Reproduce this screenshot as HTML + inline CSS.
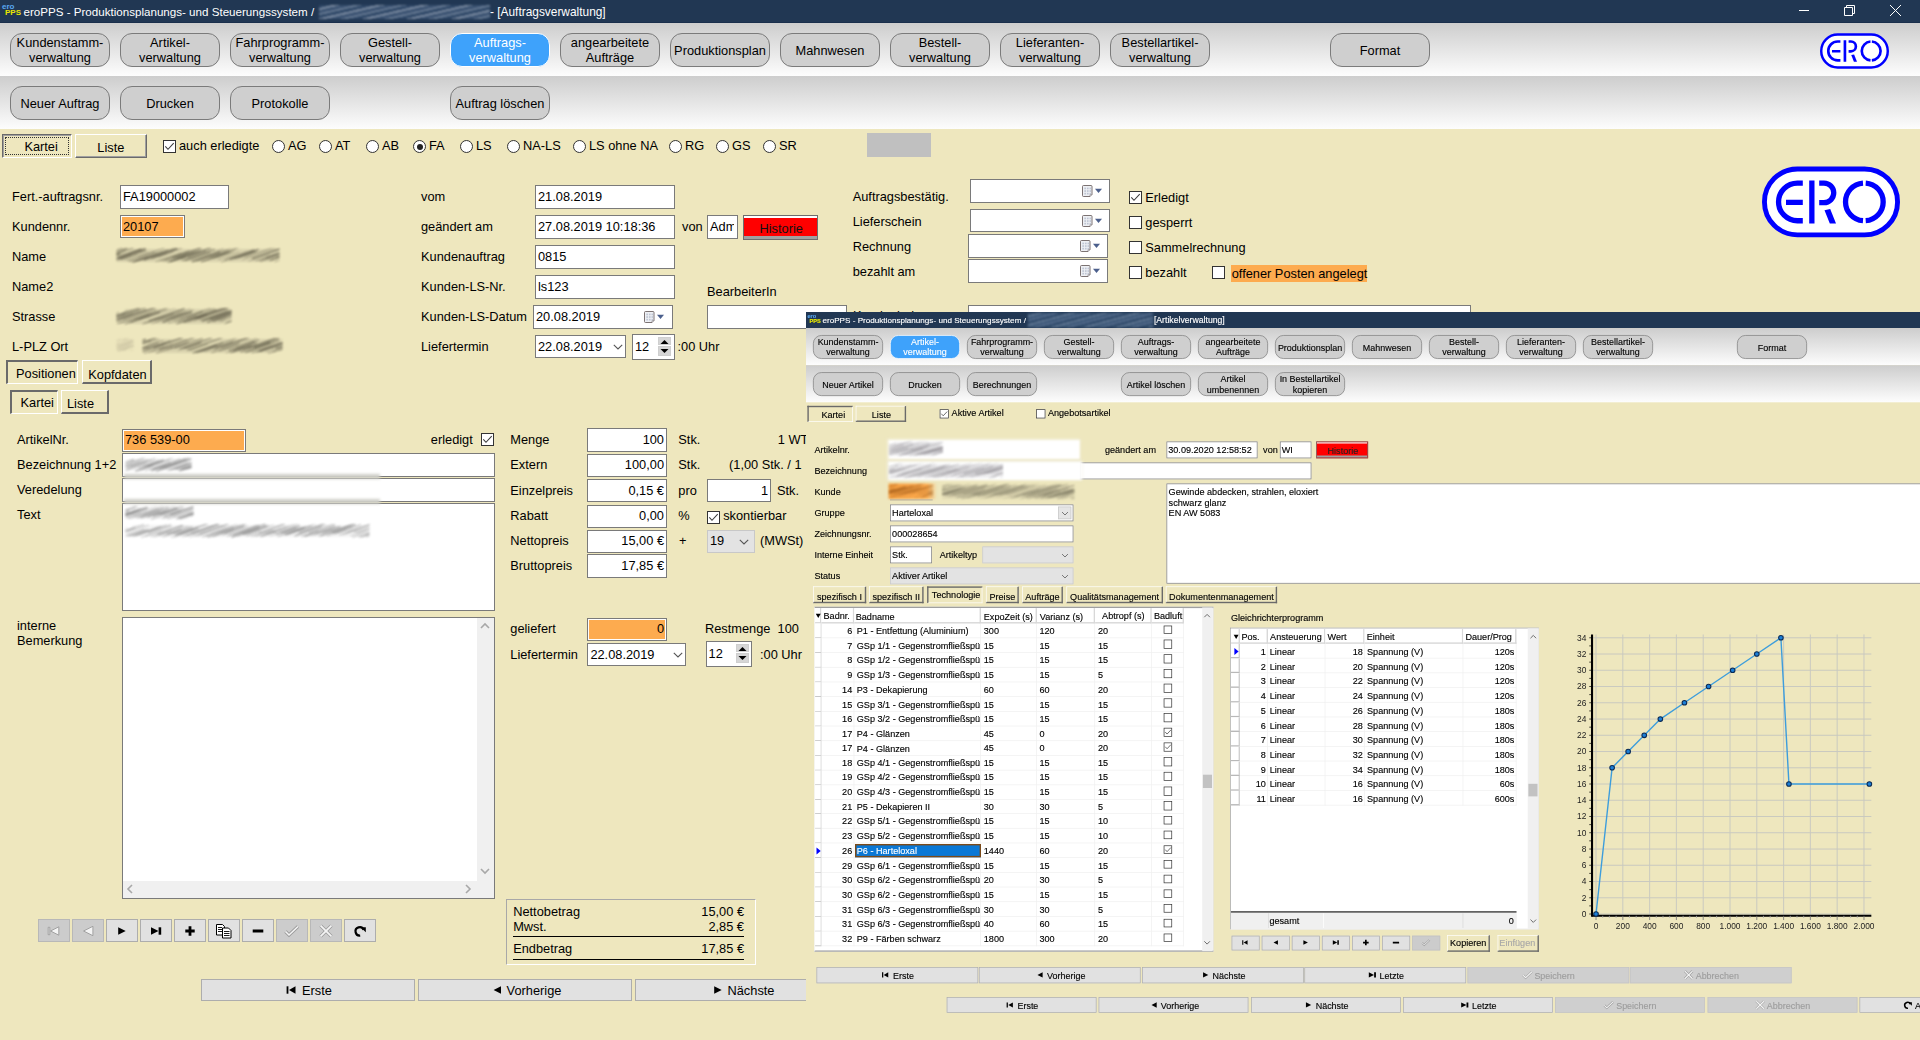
<!DOCTYPE html><html><head><meta charset="utf-8"><style>
*{box-sizing:border-box;margin:0;padding:0}
html,body{width:1920px;height:1040px;overflow:hidden}
body{position:relative;background:#EEE7BE;font-family:"Liberation Sans",sans-serif;font-size:12.8px;color:#000}
.t{position:absolute;white-space:pre}
.b{position:absolute}
.tbtn{position:absolute;border:1px solid #7b7b7b;border-radius:12px;background:#cfcfcf;display:flex;align-items:center;justify-content:center;text-align:center;line-height:15.5px;font-size:12.8px;color:#000}
.tbtn.sel{background:#3ea2fb;border-color:#fff;color:#fff}
.bar{position:absolute;left:0;width:1920px;background:linear-gradient(#cdcdcd,#fdfdfd)}
.raised{border-top:1px solid #fff;border-left:1px solid #fff;border-bottom:2px solid #6f6f6f;border-right:2px solid #6f6f6f}
.sunk{border-top:2px solid #6f6f6f;border-left:2px solid #6f6f6f;border-bottom:1px solid #fff;border-right:1px solid #fff}
.cb{position:absolute;width:13px;height:13px;border:1px solid #333;background:#fff}
.rb{position:absolute;width:13px;height:13px;border:1px solid #333;border-radius:50%;background:#fff}
</style></head><body>
<div class="b" style="left:0px;top:0px;width:1920px;height:23px;background:#213753"></div>
<div class="b" style="left:0px;top:22px;width:1920px;height:1px;background:#1a2f4c"></div>
<div class="t" style="left:2px;top:3px;font-size:8px;line-height:8px;color:#5aa8f0;font-weight:bold">ero</div>
<div class="t" style="left:5px;top:9px;font-size:8px;line-height:8px;color:#e8e800;font-weight:bold">PPS</div>
<div class="t" style="left:23.5px;top:3.98px;font-size:11.6px;line-height:16px;color:#fff;">eroPPS - Produktionsplanungs- und Steuerungssystem /</div>
<div class="b" style="left:319px;top:5px;width:171px;height:14px;background:repeating-linear-gradient(167deg,#2f4868 0 3px,#8190a5 3px 5px,#3a5272 5px 8px,#6a7d96 8px 10px);filter:blur(1.3px);opacity:.95"></div>
<div class="t" style="left:490px;top:3.88px;font-size:11.9px;line-height:16px;color:#fff;">- [Auftragsverwaltung]</div>
<div class="b" style="left:1799px;top:10px;width:10px;height:1px;background:#fff"></div>
<svg class="b" style="left:1843px;top:4px" width="13" height="13" viewBox="0 0 13 13"><path d="M1.5 3.5h8v8h-8z M3.5 3.5v-2h8v8h-2" fill="none" stroke="#fff" stroke-width="1"/></svg>
<svg class="b" style="left:1889px;top:4px" width="13" height="13" viewBox="0 0 13 13"><path d="M1 1L12 12M12 1L1 12" fill="none" stroke="#fff" stroke-width="1"/></svg>
<div class="bar" style="top:23px;height:53px"></div>
<div class="bar" style="top:76px;height:53px"></div>
<div class="tbtn" style="left:10px;top:33px;width:100px;height:34px;">Kundenstamm-<br>verwaltung</div>
<div class="tbtn" style="left:120px;top:33px;width:100px;height:34px;">Artikel-<br>verwaltung</div>
<div class="tbtn" style="left:230px;top:33px;width:100px;height:34px;">Fahrprogramm-<br>verwaltung</div>
<div class="tbtn" style="left:340px;top:33px;width:100px;height:34px;">Gestell-<br>verwaltung</div>
<div class="tbtn sel" style="left:450px;top:33px;width:100px;height:34px;">Auftrags-<br>verwaltung</div>
<div class="tbtn" style="left:560px;top:33px;width:100px;height:34px;">angearbeitete<br>Aufträge</div>
<div class="tbtn" style="left:670px;top:33px;width:100px;height:34px;padding-top:1.5px">Produktionsplan</div>
<div class="tbtn" style="left:780px;top:33px;width:100px;height:34px;padding-top:1.5px">Mahnwesen</div>
<div class="tbtn" style="left:890px;top:33px;width:100px;height:34px;">Bestell-<br>verwaltung</div>
<div class="tbtn" style="left:1000px;top:33px;width:100px;height:34px;">Lieferanten-<br>verwaltung</div>
<div class="tbtn" style="left:1110px;top:33px;width:100px;height:34px;">Bestellartikel-<br>verwaltung</div>
<div class="tbtn" style="left:1330px;top:33px;width:100px;height:34px;padding-top:1.5px">Format</div>
<div class="tbtn" style="left:10px;top:86px;width:100px;height:34px;padding-top:1.5px">Neuer Auftrag</div>
<div class="tbtn" style="left:120px;top:86px;width:100px;height:34px;padding-top:1.5px">Drucken</div>
<div class="tbtn" style="left:230px;top:86px;width:100px;height:34px;padding-top:1.5px">Protokolle</div>
<div class="tbtn" style="left:450px;top:86px;width:100px;height:34px;padding-top:1.5px">Auftrag löschen</div>
<svg class="b" style="left:1820px;top:33px" width="69" height="36" viewBox="7 7 138 71"><rect x="9.45" y="9.45" width="133.1" height="65.9" rx="32.95" fill="#fff" stroke="#0000ff" stroke-width="4.9"/>
<path d="M47.8 23.55H42.4A18.85 18.85 0 0 0 42.4 61.25H47.8M31 42.9H47.8M56.85 20.9V63.9M64.2 23.55H68.95A9.8 9.8 0 0 1 68.95 43.15H64.2" fill="none" stroke="#0000ff" stroke-width="5.3"/>
<path d="M69.5 50.7L75.2 49.5L81 63.9L74.8 63.9Z" fill="#0000ff"/>
<path d="M108 23.6A18.85 18.85 0 0 0 108 61.2M110.7 61.2A18.85 18.85 0 0 0 110.7 23.6" fill="none" stroke="#0000ff" stroke-width="5.3"/></svg>
<div class="b" style="left:2px;top:134px;width:70px;height:24px;border-top:1px solid #6a6a6a;border-left:1px solid #6a6a6a;border-bottom:1px solid #fff;border-right:1px solid #fff;box-shadow:inset 1px 1px 0 #a0a0a0"></div>
<div class="b" style="left:5px;top:137px;width:64px;height:18px;border:1px dotted #333"></div>
<div class="t" style="left:24.4px;top:139.26px;font-size:12.8px;line-height:16px;color:#000;">Kartei</div>
<div class="b" style="left:75px;top:134px;width:72px;height:24px;border-top:1px solid #fff;border-left:1px solid #fff;border-bottom:1px solid #6a6a6a;border-right:1px solid #6a6a6a;box-shadow:inset -1px -1px 0 #a0a0a0"></div>
<div class="t" style="left:97.3px;top:140.16px;font-size:12.8px;line-height:16px;color:#000;">Liste</div>
<div class="cb" style="left:163px;top:140px;width:13px;height:13px"></div>
<svg class="b" style="left:163px;top:140px" width="13" height="13" viewBox="0 0 13 13"><path d="M2.3 6.3L5 9.3L10.7 3.2" fill="none" stroke="#3a3a3a" stroke-width="1.05"/></svg>
<div class="t" style="left:179px;top:138.06px;font-size:12.8px;line-height:16px;color:#000;">auch erledigte</div>
<div class="rb" style="left:272px;top:140px"></div>
<div class="t" style="left:288px;top:138.36px;font-size:12.8px;line-height:16px;color:#000;">AG</div>
<div class="rb" style="left:319px;top:140px"></div>
<div class="t" style="left:335px;top:138.36px;font-size:12.8px;line-height:16px;color:#000;">AT</div>
<div class="rb" style="left:366px;top:140px"></div>
<div class="t" style="left:382px;top:138.36px;font-size:12.8px;line-height:16px;color:#000;">AB</div>
<div class="rb" style="left:413px;top:140px"></div>
<div class="b" style="left:416.5px;top:143.5px;width:6px;height:6px;border-radius:50%;background:#222"></div>
<div class="t" style="left:429px;top:138.36px;font-size:12.8px;line-height:16px;color:#000;">FA</div>
<div class="rb" style="left:460px;top:140px"></div>
<div class="t" style="left:476px;top:138.36px;font-size:12.8px;line-height:16px;color:#000;">LS</div>
<div class="rb" style="left:507px;top:140px"></div>
<div class="t" style="left:523px;top:138.36px;font-size:12.8px;line-height:16px;color:#000;">NA-LS</div>
<div class="rb" style="left:573px;top:140px"></div>
<div class="t" style="left:589px;top:138.36px;font-size:12.8px;line-height:16px;color:#000;">LS ohne NA</div>
<div class="rb" style="left:669px;top:140px"></div>
<div class="t" style="left:685px;top:138.36px;font-size:12.8px;line-height:16px;color:#000;">RG</div>
<div class="rb" style="left:716px;top:140px"></div>
<div class="t" style="left:732px;top:138.36px;font-size:12.8px;line-height:16px;color:#000;">GS</div>
<div class="rb" style="left:763px;top:140px"></div>
<div class="t" style="left:779px;top:138.36px;font-size:12.8px;line-height:16px;color:#000;">SR</div>
<div class="b" style="left:867px;top:133px;width:64px;height:24px;background:#c0c0c0"></div>
<svg class="b" style="left:1762px;top:166px" width="138" height="72" viewBox="7 7 138 71"><rect x="9.45" y="9.45" width="133.1" height="65.9" rx="32.95" fill="#fff" stroke="#0000ff" stroke-width="4.9"/>
<path d="M47.8 23.55H42.4A18.85 18.85 0 0 0 42.4 61.25H47.8M31 42.9H47.8M56.85 20.9V63.9M64.2 23.55H68.95A9.8 9.8 0 0 1 68.95 43.15H64.2" fill="none" stroke="#0000ff" stroke-width="5.3"/>
<path d="M69.5 50.7L75.2 49.5L81 63.9L74.8 63.9Z" fill="#0000ff"/>
<path d="M108 23.6A18.85 18.85 0 0 0 108 61.2M110.7 61.2A18.85 18.85 0 0 0 110.7 23.6" fill="none" stroke="#0000ff" stroke-width="5.3"/></svg>
<div class="t" style="left:12px;top:188.56px;font-size:12.8px;line-height:16px;color:#000;">Fert.-auftragsnr.</div>
<div class="t" style="left:12px;top:218.56px;font-size:12.8px;line-height:16px;color:#000;">Kundennr.</div>
<div class="t" style="left:12px;top:248.56px;font-size:12.8px;line-height:16px;color:#000;">Name</div>
<div class="t" style="left:12px;top:278.56px;font-size:12.8px;line-height:16px;color:#000;">Name2</div>
<div class="t" style="left:12px;top:308.56px;font-size:12.8px;line-height:16px;color:#000;">Strasse</div>
<div class="t" style="left:12px;top:338.56px;font-size:12.8px;line-height:16px;color:#000;">L-PLZ Ort</div>
<div class="b" style="left:120px;top:185px;width:109px;height:24px;background:#fff;border:1px solid #7a7a7a;"></div>
<div class="t" style="left:123px;top:188.56px;font-size:12.8px;line-height:16px;color:#000;">FA19000002</div>
<div class="b" style="left:120px;top:215px;width:65px;height:23px;background:#fdab4f;border:1px solid #7a7a7a;box-shadow:inset 0 0 0 1px #fff;"></div>
<div class="t" style="left:123px;top:218.56px;font-size:12.8px;line-height:16px;color:#000;">20107</div>
<svg class="b" style="left:116px;top:248px;opacity:0.9;filter:blur(1.0px)" width="164" height="15" viewBox="0 0 164 15"><path d="M8.4 1 L164.0 1 L155.6 14.0 L0 14.0Z" fill="rgba(175,168,140,0.35)"/><path d="M0.5 2.1 L11.7 -1.9" stroke="#4a4636" stroke-width="0.90" stroke-opacity="0.62"/><path d="M0.5 4.6 L9.7 1.3" stroke="#4a4636" stroke-width="0.78" stroke-opacity="0.63"/><path d="M0.5 7.1 L6.3 5.1" stroke="#4a4636" stroke-width="0.70" stroke-opacity="0.62"/><path d="M0.5 7.2 L4.0 6.0" stroke="#4a4636" stroke-width="1.42" stroke-opacity="0.72"/><path d="M0.5 3.8 L12.0 -0.2" stroke="#4a4636" stroke-width="1.00" stroke-opacity="0.72"/><path d="M0.5 6.6 L2.6 5.9" stroke="#4a4636" stroke-width="1.05" stroke-opacity="0.32"/><path d="M0.5 6.3 L9.1 3.3" stroke="#4a4636" stroke-width="1.07" stroke-opacity="0.32"/><path d="M0.5 5.8 L23.9 -2.4" stroke="#4a4636" stroke-width="1.21" stroke-opacity="0.51"/><path d="M0.5 11.7 L26.0 2.8" stroke="#4a4636" stroke-width="0.97" stroke-opacity="0.27"/><path d="M0.5 11.1 L30.3 0.6" stroke="#4a4636" stroke-width="1.36" stroke-opacity="0.43"/><path d="M0.5 9.7 L25.3 1.0" stroke="#4a4636" stroke-width="1.38" stroke-opacity="0.69"/><path d="M0.5 12.0 L15.7 6.7" stroke="#4a4636" stroke-width="1.34" stroke-opacity="0.33"/><path d="M2.0 10.0 L28.7 0.6" stroke="#4a4636" stroke-width="1.24" stroke-opacity="0.59"/><path d="M3.9 11.4 L29.8 2.4" stroke="#4a4636" stroke-width="1.12" stroke-opacity="0.63"/><path d="M5.9 11.7 L21.5 6.2" stroke="#4a4636" stroke-width="1.26" stroke-opacity="0.22"/><path d="M9.1 12.3 L32.5 4.1" stroke="#4a4636" stroke-width="1.10" stroke-opacity="0.29"/><path d="M12.2 13.2 L38.8 3.9" stroke="#4a4636" stroke-width="0.89" stroke-opacity="0.67"/><path d="M14.5 14.2 L41.8 4.7" stroke="#4a4636" stroke-width="0.92" stroke-opacity="0.45"/><path d="M16.8 14.3 L31.9 9.0" stroke="#4a4636" stroke-width="1.36" stroke-opacity="0.63"/><path d="M19.7 13.1 L52.1 1.8" stroke="#4a4636" stroke-width="1.15" stroke-opacity="0.49"/><path d="M21.8 9.3 L55.4 -2.5" stroke="#4a4636" stroke-width="0.86" stroke-opacity="0.51"/><path d="M24.0 11.7 L46.6 3.7" stroke="#4a4636" stroke-width="1.13" stroke-opacity="0.39"/><path d="M26.4 12.4 L51.3 3.7" stroke="#4a4636" stroke-width="0.88" stroke-opacity="0.22"/><path d="M28.0 12.2 L61.4 0.5" stroke="#4a4636" stroke-width="1.34" stroke-opacity="0.64"/><path d="M30.8 10.4 L63.9 -1.2" stroke="#4a4636" stroke-width="0.77" stroke-opacity="0.57"/><path d="M32.1 9.1 L63.3 -1.8" stroke="#4a4636" stroke-width="0.79" stroke-opacity="0.34"/><path d="M34.5 10.9 L51.0 5.1" stroke="#4a4636" stroke-width="1.12" stroke-opacity="0.29"/><path d="M36.0 10.5 L66.3 -0.1" stroke="#4a4636" stroke-width="0.96" stroke-opacity="0.45"/><path d="M38.2 9.1 L61.5 1.0" stroke="#4a4636" stroke-width="0.85" stroke-opacity="0.43"/><path d="M39.6 13.9 L65.5 4.9" stroke="#4a4636" stroke-width="1.18" stroke-opacity="0.32"/><path d="M42.4 9.1 L57.8 3.7" stroke="#4a4636" stroke-width="1.28" stroke-opacity="0.28"/><path d="M44.0 12.9 L73.5 2.5" stroke="#4a4636" stroke-width="0.88" stroke-opacity="0.50"/><path d="M47.1 13.4 L73.2 4.3" stroke="#4a4636" stroke-width="1.22" stroke-opacity="0.32"/><path d="M49.1 12.2 L71.0 4.5" stroke="#4a4636" stroke-width="0.75" stroke-opacity="0.55"/><path d="M50.9 14.3 L84.7 2.5" stroke="#4a4636" stroke-width="1.39" stroke-opacity="0.37"/><path d="M52.7 14.2 L83.7 3.3" stroke="#4a4636" stroke-width="0.90" stroke-opacity="0.43"/><path d="M53.9 13.8 L69.8 8.3" stroke="#4a4636" stroke-width="1.47" stroke-opacity="0.65"/><path d="M56.3 9.9 L89.9 -1.8" stroke="#4a4636" stroke-width="1.26" stroke-opacity="0.74"/><path d="M58.5 11.1 L80.9 3.2" stroke="#4a4636" stroke-width="1.24" stroke-opacity="0.31"/><path d="M60.6 10.1 L77.8 4.0" stroke="#4a4636" stroke-width="0.94" stroke-opacity="0.57"/><path d="M62.8 10.8 L96.4 -1.0" stroke="#4a4636" stroke-width="0.71" stroke-opacity="0.69"/><path d="M64.4 10.8 L100.5 -1.9" stroke="#4a4636" stroke-width="0.97" stroke-opacity="0.63"/><path d="M66.0 12.7 L98.9 1.2" stroke="#4a4636" stroke-width="0.98" stroke-opacity="0.71"/><path d="M69.0 12.8 L94.3 3.9" stroke="#4a4636" stroke-width="0.89" stroke-opacity="0.74"/><path d="M71.6 9.5 L90.2 2.9" stroke="#4a4636" stroke-width="0.87" stroke-opacity="0.70"/><path d="M74.3 12.3 L107.4 0.7" stroke="#4a4636" stroke-width="0.97" stroke-opacity="0.40"/><path d="M76.1 13.8 L104.1 4.0" stroke="#4a4636" stroke-width="1.41" stroke-opacity="0.72"/><path d="M77.6 12.0 L94.8 6.0" stroke="#4a4636" stroke-width="0.76" stroke-opacity="0.22"/><path d="M80.5 13.3 L113.3 1.9" stroke="#4a4636" stroke-width="1.19" stroke-opacity="0.39"/><path d="M83.3 11.1 L110.5 1.5" stroke="#4a4636" stroke-width="0.77" stroke-opacity="0.32"/><path d="M85.0 13.9 L112.1 4.4" stroke="#4a4636" stroke-width="1.07" stroke-opacity="0.71"/><path d="M86.8 13.3 L119.5 1.9" stroke="#4a4636" stroke-width="1.24" stroke-opacity="0.21"/><path d="M88.1 9.6 L122.1 -2.3" stroke="#4a4636" stroke-width="0.89" stroke-opacity="0.22"/><path d="M91.3 11.3 L108.8 5.2" stroke="#4a4636" stroke-width="0.89" stroke-opacity="0.29"/><path d="M94.0 9.6 L128.5 -2.5" stroke="#4a4636" stroke-width="1.48" stroke-opacity="0.41"/><path d="M97.0 10.6 L117.5 3.5" stroke="#4a4636" stroke-width="0.78" stroke-opacity="0.46"/><path d="M99.5 9.2 L114.8 3.9" stroke="#4a4636" stroke-width="0.94" stroke-opacity="0.74"/><path d="M101.9 11.5 L123.6 3.9" stroke="#4a4636" stroke-width="1.43" stroke-opacity="0.23"/><path d="M105.1 14.3 L122.5 8.2" stroke="#4a4636" stroke-width="1.19" stroke-opacity="0.32"/><path d="M108.2 12.0 L138.0 1.6" stroke="#4a4636" stroke-width="0.91" stroke-opacity="0.56"/><path d="M110.5 10.7 L130.8 3.6" stroke="#4a4636" stroke-width="0.92" stroke-opacity="0.24"/><path d="M113.7 11.5 L142.7 1.3" stroke="#4a4636" stroke-width="1.45" stroke-opacity="0.55"/><path d="M115.7 10.7 L137.7 3.0" stroke="#4a4636" stroke-width="1.38" stroke-opacity="0.37"/><path d="M118.6 10.7 L140.8 2.9" stroke="#4a4636" stroke-width="1.16" stroke-opacity="0.50"/><path d="M121.0 10.3 L136.5 4.9" stroke="#4a4636" stroke-width="0.76" stroke-opacity="0.33"/><path d="M123.3 9.4 L140.0 3.6" stroke="#4a4636" stroke-width="0.93" stroke-opacity="0.55"/><path d="M126.1 11.7 L159.6 -0.0" stroke="#4a4636" stroke-width="1.10" stroke-opacity="0.28"/><path d="M128.9 9.4 L163.5 -2.7" stroke="#4a4636" stroke-width="1.32" stroke-opacity="0.30"/><path d="M132.1 13.5 L153.9 5.9" stroke="#4a4636" stroke-width="1.11" stroke-opacity="0.26"/><path d="M135.1 10.6 L163.5 0.7" stroke="#4a4636" stroke-width="1.43" stroke-opacity="0.28"/><path d="M136.4 10.7 L163.5 1.2" stroke="#4a4636" stroke-width="1.43" stroke-opacity="0.64"/><path d="M139.3 13.1 L163.5 4.6" stroke="#4a4636" stroke-width="1.05" stroke-opacity="0.30"/><path d="M140.8 12.9 L163.5 5.0" stroke="#4a4636" stroke-width="0.75" stroke-opacity="0.34"/><path d="M143.9 13.4 L163.5 6.6" stroke="#4a4636" stroke-width="1.38" stroke-opacity="0.50"/><path d="M146.0 11.2 L163.5 5.1" stroke="#4a4636" stroke-width="0.72" stroke-opacity="0.34"/><path d="M148.5 11.3 L163.5 6.0" stroke="#4a4636" stroke-width="0.98" stroke-opacity="0.23"/><path d="M150.0 9.7 L163.5 5.0" stroke="#4a4636" stroke-width="1.02" stroke-opacity="0.66"/><path d="M152.0 12.4 L163.5 8.3" stroke="#4a4636" stroke-width="1.12" stroke-opacity="0.20"/><path d="M154.2 12.6 L163.5 9.3" stroke="#4a4636" stroke-width="1.29" stroke-opacity="0.58"/><path d="M155.9 11.7 L163.5 9.1" stroke="#4a4636" stroke-width="1.03" stroke-opacity="0.32"/><path d="M158.2 14.0 L163.5 12.1" stroke="#4a4636" stroke-width="1.22" stroke-opacity="0.35"/><path d="M159.5 9.4 L163.5 8.0" stroke="#4a4636" stroke-width="0.83" stroke-opacity="0.68"/></svg>
<svg class="b" style="left:116px;top:308px;opacity:0.9;filter:blur(1.0px)" width="116" height="17" viewBox="0 0 116 17"><path d="M9.5 1 L116.0 1 L106.5 16.0 L0 16.0Z" fill="rgba(175,168,140,0.35)"/><path d="M0.5 7.5 L15.7 2.2" stroke="#4a4636" stroke-width="0.77" stroke-opacity="0.23"/><path d="M0.5 7.2 L11.9 3.2" stroke="#4a4636" stroke-width="1.18" stroke-opacity="0.37"/><path d="M0.5 7.0 L1.8 6.6" stroke="#4a4636" stroke-width="1.01" stroke-opacity="0.44"/><path d="M0.5 10.6 L23.7 2.4" stroke="#4a4636" stroke-width="1.06" stroke-opacity="0.50"/><path d="M0.5 5.1 L3.0 4.2" stroke="#4a4636" stroke-width="0.95" stroke-opacity="0.46"/><path d="M0.5 11.2 L17.1 5.4" stroke="#4a4636" stroke-width="0.89" stroke-opacity="0.51"/><path d="M0.5 8.1 L8.9 5.1" stroke="#4a4636" stroke-width="1.50" stroke-opacity="0.48"/><path d="M0.5 8.1 L29.8 -2.2" stroke="#4a4636" stroke-width="1.29" stroke-opacity="0.64"/><path d="M0.5 12.8 L30.3 2.3" stroke="#4a4636" stroke-width="1.48" stroke-opacity="0.39"/><path d="M0.5 10.1 L32.6 -1.1" stroke="#4a4636" stroke-width="1.07" stroke-opacity="0.59"/><path d="M0.5 12.9 L39.0 -0.5" stroke="#4a4636" stroke-width="1.37" stroke-opacity="0.48"/><path d="M1.4 15.8 L40.3 2.2" stroke="#4a4636" stroke-width="1.15" stroke-opacity="0.45"/><path d="M4.5 14.8 L33.3 4.7" stroke="#4a4636" stroke-width="0.96" stroke-opacity="0.32"/><path d="M7.1 11.2 L46.1 -2.4" stroke="#4a4636" stroke-width="1.43" stroke-opacity="0.35"/><path d="M8.9 16.2 L43.1 4.3" stroke="#4a4636" stroke-width="1.11" stroke-opacity="0.48"/><path d="M11.4 13.9 L36.0 5.3" stroke="#4a4636" stroke-width="1.11" stroke-opacity="0.31"/><path d="M14.5 14.1 L33.3 7.5" stroke="#4a4636" stroke-width="1.28" stroke-opacity="0.65"/><path d="M17.5 11.4 L52.6 -0.9" stroke="#4a4636" stroke-width="1.22" stroke-opacity="0.23"/><path d="M19.2 11.6 L57.5 -1.8" stroke="#4a4636" stroke-width="1.12" stroke-opacity="0.26"/><path d="M22.1 11.7 L44.3 4.0" stroke="#4a4636" stroke-width="1.04" stroke-opacity="0.68"/><path d="M24.8 10.4 L50.6 1.4" stroke="#4a4636" stroke-width="1.24" stroke-opacity="0.29"/><path d="M26.1 16.2 L43.8 10.0" stroke="#4a4636" stroke-width="0.72" stroke-opacity="0.60"/><path d="M27.9 15.3 L48.7 8.0" stroke="#4a4636" stroke-width="1.25" stroke-opacity="0.30"/><path d="M29.8 10.5 L70.9 -3.9" stroke="#4a4636" stroke-width="0.73" stroke-opacity="0.28"/><path d="M31.7 14.1 L66.7 1.8" stroke="#4a4636" stroke-width="0.97" stroke-opacity="0.26"/><path d="M33.0 13.0 L68.6 0.6" stroke="#4a4636" stroke-width="1.42" stroke-opacity="0.61"/><path d="M35.7 15.6 L69.8 3.7" stroke="#4a4636" stroke-width="0.88" stroke-opacity="0.46"/><path d="M38.2 12.2 L57.7 5.4" stroke="#4a4636" stroke-width="1.40" stroke-opacity="0.45"/><path d="M39.7 13.9 L66.2 4.6" stroke="#4a4636" stroke-width="0.82" stroke-opacity="0.48"/><path d="M42.8 11.8 L74.5 0.7" stroke="#4a4636" stroke-width="0.71" stroke-opacity="0.43"/><path d="M45.1 11.1 L63.5 4.7" stroke="#4a4636" stroke-width="0.83" stroke-opacity="0.22"/><path d="M46.5 14.2 L75.8 3.9" stroke="#4a4636" stroke-width="1.45" stroke-opacity="0.74"/><path d="M49.7 11.7 L77.5 1.9" stroke="#4a4636" stroke-width="1.17" stroke-opacity="0.34"/><path d="M52.1 15.2 L86.4 3.3" stroke="#4a4636" stroke-width="1.04" stroke-opacity="0.34"/><path d="M54.4 10.2 L72.2 4.0" stroke="#4a4636" stroke-width="0.79" stroke-opacity="0.42"/><path d="M57.0 11.7 L76.5 4.9" stroke="#4a4636" stroke-width="0.89" stroke-opacity="0.30"/><path d="M58.7 13.5 L86.9 3.6" stroke="#4a4636" stroke-width="1.21" stroke-opacity="0.37"/><path d="M60.3 15.9 L100.7 1.8" stroke="#4a4636" stroke-width="1.05" stroke-opacity="0.60"/><path d="M62.5 13.9 L80.8 7.5" stroke="#4a4636" stroke-width="1.12" stroke-opacity="0.43"/><path d="M64.1 10.8 L100.6 -2.0" stroke="#4a4636" stroke-width="1.12" stroke-opacity="0.40"/><path d="M67.1 14.0 L91.1 5.6" stroke="#4a4636" stroke-width="1.00" stroke-opacity="0.74"/><path d="M68.4 14.5 L87.8 7.7" stroke="#4a4636" stroke-width="1.37" stroke-opacity="0.37"/><path d="M70.9 10.3 L98.9 0.5" stroke="#4a4636" stroke-width="1.09" stroke-opacity="0.43"/><path d="M72.5 13.9 L91.3 7.3" stroke="#4a4636" stroke-width="1.00" stroke-opacity="0.36"/><path d="M75.6 10.7 L110.9 -1.7" stroke="#4a4636" stroke-width="1.16" stroke-opacity="0.31"/><path d="M77.6 13.1 L112.9 0.8" stroke="#4a4636" stroke-width="0.80" stroke-opacity="0.42"/><path d="M79.0 10.7 L115.5 -2.1" stroke="#4a4636" stroke-width="1.47" stroke-opacity="0.55"/><path d="M81.6 10.4 L114.6 -1.2" stroke="#4a4636" stroke-width="1.28" stroke-opacity="0.63"/><path d="M83.8 12.5 L111.9 2.6" stroke="#4a4636" stroke-width="0.92" stroke-opacity="0.64"/><path d="M86.0 13.2 L115.5 2.9" stroke="#4a4636" stroke-width="1.45" stroke-opacity="0.64"/><path d="M88.9 12.1 L111.5 4.2" stroke="#4a4636" stroke-width="0.91" stroke-opacity="0.47"/><path d="M91.0 14.5 L115.5 5.9" stroke="#4a4636" stroke-width="1.35" stroke-opacity="0.52"/><path d="M92.4 12.4 L115.5 4.3" stroke="#4a4636" stroke-width="1.03" stroke-opacity="0.28"/><path d="M93.7 10.7 L115.5 3.1" stroke="#4a4636" stroke-width="1.22" stroke-opacity="0.74"/><path d="M95.2 12.1 L115.5 4.9" stroke="#4a4636" stroke-width="1.24" stroke-opacity="0.57"/><path d="M97.2 13.5 L115.5 7.1" stroke="#4a4636" stroke-width="1.46" stroke-opacity="0.50"/><path d="M99.9 10.8 L115.5 5.4" stroke="#4a4636" stroke-width="0.91" stroke-opacity="0.59"/><path d="M102.9 13.1 L115.5 8.7" stroke="#4a4636" stroke-width="1.50" stroke-opacity="0.42"/><path d="M105.7 13.8 L115.5 10.4" stroke="#4a4636" stroke-width="0.72" stroke-opacity="0.44"/><path d="M108.1 15.8 L115.5 13.2" stroke="#4a4636" stroke-width="1.09" stroke-opacity="0.48"/><path d="M110.1 14.7 L115.5 12.8" stroke="#4a4636" stroke-width="1.08" stroke-opacity="0.59"/></svg>
<svg class="b" style="left:116px;top:338px;opacity:0.6;filter:blur(1.0px)" width="18" height="14" viewBox="0 0 18 14"><path d="M7.8 1 L18.0 1 L10.2 13.0 L0 13.0Z" fill="rgba(200,192,160,0.6)"/><path d="M0.5 2.4 L4.9 0.9" stroke="#b5ad90" stroke-width="1.18" stroke-opacity="0.40"/><path d="M0.5 3.9 L17.5 -2.1" stroke="#b5ad90" stroke-width="1.37" stroke-opacity="0.46"/><path d="M0.5 6.7 L3.3 5.7" stroke="#b5ad90" stroke-width="1.39" stroke-opacity="0.55"/><path d="M0.5 8.0 L16.0 2.6" stroke="#b5ad90" stroke-width="1.31" stroke-opacity="0.24"/><path d="M0.5 6.6 L5.6 4.8" stroke="#b5ad90" stroke-width="1.08" stroke-opacity="0.68"/><path d="M0.5 10.5 L17.5 4.5" stroke="#b5ad90" stroke-width="1.02" stroke-opacity="0.71"/><path d="M0.5 9.2 L17.5 3.3" stroke="#b5ad90" stroke-width="0.78" stroke-opacity="0.68"/><path d="M0.5 8.6 L17.5 2.6" stroke="#b5ad90" stroke-width="1.20" stroke-opacity="0.44"/><path d="M0.5 10.7 L17.5 4.7" stroke="#b5ad90" stroke-width="1.17" stroke-opacity="0.39"/><path d="M2.0 13.0 L17.5 7.6" stroke="#b5ad90" stroke-width="1.39" stroke-opacity="0.71"/><path d="M5.2 11.8 L17.5 7.5" stroke="#b5ad90" stroke-width="1.47" stroke-opacity="0.67"/><path d="M8.2 11.3 L17.5 8.1" stroke="#b5ad90" stroke-width="1.37" stroke-opacity="0.32"/><path d="M10.6 9.9 L17.5 7.4" stroke="#b5ad90" stroke-width="1.49" stroke-opacity="0.67"/><path d="M11.9 12.5 L17.5 10.5" stroke="#b5ad90" stroke-width="0.94" stroke-opacity="0.28"/><path d="M14.7 12.9 L17.5 11.9" stroke="#b5ad90" stroke-width="0.74" stroke-opacity="0.54"/></svg>
<svg class="b" style="left:142px;top:338px;opacity:0.9;filter:blur(1.0px)" width="141" height="16" viewBox="0 0 141 16"><path d="M9.0 1 L141.0 1 L132.0 15.0 L0 15.0Z" fill="rgba(175,168,140,0.35)"/><path d="M0.5 2.3 L3.8 1.2" stroke="#4a4636" stroke-width="1.34" stroke-opacity="0.70"/><path d="M0.5 4.2 L9.7 1.0" stroke="#4a4636" stroke-width="0.84" stroke-opacity="0.35"/><path d="M0.5 4.7 L20.0 -2.2" stroke="#4a4636" stroke-width="1.35" stroke-opacity="0.66"/><path d="M0.5 5.5 L8.7 2.7" stroke="#4a4636" stroke-width="1.29" stroke-opacity="0.54"/><path d="M0.5 10.6 L6.5 8.5" stroke="#4a4636" stroke-width="1.24" stroke-opacity="0.53"/><path d="M0.5 7.2 L17.5 1.3" stroke="#4a4636" stroke-width="1.45" stroke-opacity="0.25"/><path d="M0.5 10.4 L16.5 4.8" stroke="#4a4636" stroke-width="1.16" stroke-opacity="0.70"/><path d="M0.5 13.2 L24.2 4.9" stroke="#4a4636" stroke-width="1.18" stroke-opacity="0.43"/><path d="M0.5 9.9 L21.6 2.5" stroke="#4a4636" stroke-width="0.73" stroke-opacity="0.65"/><path d="M0.5 13.1 L22.4 5.5" stroke="#4a4636" stroke-width="1.08" stroke-opacity="0.49"/><path d="M1.9 15.5 L22.3 8.3" stroke="#4a4636" stroke-width="0.86" stroke-opacity="0.43"/><path d="M4.3 11.2 L28.5 2.8" stroke="#4a4636" stroke-width="0.96" stroke-opacity="0.61"/><path d="M6.6 14.9 L24.9 8.5" stroke="#4a4636" stroke-width="0.88" stroke-opacity="0.23"/><path d="M9.4 13.2 L30.8 5.7" stroke="#4a4636" stroke-width="0.84" stroke-opacity="0.38"/><path d="M11.5 9.9 L43.4 -1.3" stroke="#4a4636" stroke-width="1.46" stroke-opacity="0.69"/><path d="M14.2 15.3 L30.6 9.5" stroke="#4a4636" stroke-width="1.47" stroke-opacity="0.36"/><path d="M16.9 12.0 L54.5 -1.1" stroke="#4a4636" stroke-width="1.35" stroke-opacity="0.54"/><path d="M18.7 10.7 L44.8 1.6" stroke="#4a4636" stroke-width="1.01" stroke-opacity="0.28"/><path d="M21.8 11.6 L38.0 5.9" stroke="#4a4636" stroke-width="0.84" stroke-opacity="0.22"/><path d="M24.6 11.7 L47.2 3.8" stroke="#4a4636" stroke-width="1.49" stroke-opacity="0.25"/><path d="M26.6 10.8 L44.0 4.8" stroke="#4a4636" stroke-width="0.83" stroke-opacity="0.23"/><path d="M29.2 10.5 L46.1 4.6" stroke="#4a4636" stroke-width="0.90" stroke-opacity="0.47"/><path d="M32.4 10.3 L60.5 0.5" stroke="#4a4636" stroke-width="1.03" stroke-opacity="0.63"/><path d="M35.6 12.4 L57.1 4.9" stroke="#4a4636" stroke-width="0.73" stroke-opacity="0.43"/><path d="M37.6 11.1 L73.9 -1.6" stroke="#4a4636" stroke-width="1.10" stroke-opacity="0.66"/><path d="M38.9 11.1 L60.4 3.6" stroke="#4a4636" stroke-width="0.89" stroke-opacity="0.31"/><path d="M41.8 10.4 L59.0 4.4" stroke="#4a4636" stroke-width="1.15" stroke-opacity="0.71"/><path d="M45.0 12.0 L81.6 -0.8" stroke="#4a4636" stroke-width="1.33" stroke-opacity="0.56"/><path d="M47.7 12.5 L65.8 6.2" stroke="#4a4636" stroke-width="1.40" stroke-opacity="0.32"/><path d="M50.7 15.1 L74.4 6.8" stroke="#4a4636" stroke-width="1.34" stroke-opacity="0.56"/><path d="M53.2 14.4 L81.2 4.6" stroke="#4a4636" stroke-width="1.25" stroke-opacity="0.56"/><path d="M54.9 15.0 L92.7 1.8" stroke="#4a4636" stroke-width="1.48" stroke-opacity="0.24"/><path d="M58.0 13.5 L75.0 7.6" stroke="#4a4636" stroke-width="0.80" stroke-opacity="0.69"/><path d="M61.2 13.5 L78.5 7.5" stroke="#4a4636" stroke-width="1.21" stroke-opacity="0.29"/><path d="M63.5 14.0 L100.7 1.0" stroke="#4a4636" stroke-width="0.70" stroke-opacity="0.32"/><path d="M66.5 9.7 L102.6 -2.9" stroke="#4a4636" stroke-width="1.35" stroke-opacity="0.26"/><path d="M69.3 14.8 L97.9 4.8" stroke="#4a4636" stroke-width="0.86" stroke-opacity="0.68"/><path d="M71.8 11.6 L108.2 -1.2" stroke="#4a4636" stroke-width="1.08" stroke-opacity="0.63"/><path d="M74.1 9.8 L90.9 3.9" stroke="#4a4636" stroke-width="1.09" stroke-opacity="0.53"/><path d="M77.0 13.2 L96.2 6.5" stroke="#4a4636" stroke-width="1.31" stroke-opacity="0.40"/><path d="M79.3 9.7 L114.4 -2.6" stroke="#4a4636" stroke-width="0.77" stroke-opacity="0.66"/><path d="M81.6 11.8 L115.6 -0.1" stroke="#4a4636" stroke-width="0.89" stroke-opacity="0.37"/><path d="M83.7 15.3 L101.9 8.9" stroke="#4a4636" stroke-width="1.20" stroke-opacity="0.26"/><path d="M86.7 12.6 L112.6 3.6" stroke="#4a4636" stroke-width="1.32" stroke-opacity="0.67"/><path d="M88.0 14.8 L108.5 7.6" stroke="#4a4636" stroke-width="1.37" stroke-opacity="0.37"/><path d="M90.1 14.3 L109.9 7.4" stroke="#4a4636" stroke-width="0.84" stroke-opacity="0.68"/><path d="M91.6 12.5 L115.3 4.2" stroke="#4a4636" stroke-width="1.42" stroke-opacity="0.50"/><path d="M94.2 9.6 L117.3 1.5" stroke="#4a4636" stroke-width="1.09" stroke-opacity="0.50"/><path d="M96.8 12.5 L114.6 6.3" stroke="#4a4636" stroke-width="1.38" stroke-opacity="0.33"/><path d="M98.7 14.1 L137.3 0.6" stroke="#4a4636" stroke-width="1.24" stroke-opacity="0.54"/><path d="M101.2 11.4 L138.0 -1.5" stroke="#4a4636" stroke-width="1.43" stroke-opacity="0.46"/><path d="M103.0 14.7 L137.0 2.8" stroke="#4a4636" stroke-width="1.05" stroke-opacity="0.54"/><path d="M104.5 14.1 L128.7 5.7" stroke="#4a4636" stroke-width="0.81" stroke-opacity="0.56"/><path d="M105.8 10.4 L140.3 -1.6" stroke="#4a4636" stroke-width="1.42" stroke-opacity="0.30"/><path d="M107.8 13.0 L131.8 4.6" stroke="#4a4636" stroke-width="0.77" stroke-opacity="0.54"/><path d="M109.8 15.1 L129.9 8.1" stroke="#4a4636" stroke-width="0.96" stroke-opacity="0.56"/><path d="M111.6 9.7 L128.0 4.0" stroke="#4a4636" stroke-width="1.36" stroke-opacity="0.72"/><path d="M114.4 14.4 L140.5 5.2" stroke="#4a4636" stroke-width="1.17" stroke-opacity="0.29"/><path d="M116.6 13.0 L140.5 4.6" stroke="#4a4636" stroke-width="1.47" stroke-opacity="0.62"/><path d="M118.0 13.4 L140.5 5.6" stroke="#4a4636" stroke-width="1.19" stroke-opacity="0.61"/><path d="M120.9 11.4 L140.5 4.5" stroke="#4a4636" stroke-width="1.18" stroke-opacity="0.42"/><path d="M123.9 13.8 L140.5 7.9" stroke="#4a4636" stroke-width="0.96" stroke-opacity="0.33"/><path d="M126.3 15.5 L140.5 10.5" stroke="#4a4636" stroke-width="1.02" stroke-opacity="0.42"/><path d="M129.1 11.3 L140.5 7.3" stroke="#4a4636" stroke-width="0.85" stroke-opacity="0.21"/><path d="M131.4 13.7 L140.5 10.5" stroke="#4a4636" stroke-width="1.46" stroke-opacity="0.40"/><path d="M133.9 10.5 L140.5 8.2" stroke="#4a4636" stroke-width="1.49" stroke-opacity="0.74"/><path d="M136.9 13.2 L140.5 11.9" stroke="#4a4636" stroke-width="0.91" stroke-opacity="0.25"/></svg>
<div class="t" style="left:421px;top:188.56px;font-size:12.8px;line-height:16px;color:#000;">vom</div>
<div class="t" style="left:421px;top:218.56px;font-size:12.8px;line-height:16px;color:#000;">geändert am</div>
<div class="t" style="left:421px;top:248.56px;font-size:12.8px;line-height:16px;color:#000;">Kundenauftrag</div>
<div class="t" style="left:421px;top:278.56px;font-size:12.8px;line-height:16px;color:#000;">Kunden-LS-Nr.</div>
<div class="t" style="left:421px;top:308.56px;font-size:12.8px;line-height:16px;color:#000;">Kunden-LS-Datum</div>
<div class="t" style="left:421px;top:338.56px;font-size:12.8px;line-height:16px;color:#000;">Liefertermin</div>
<div class="b" style="left:535px;top:185px;width:140px;height:24px;background:#fff;border:1px solid #7a7a7a;"></div>
<div class="t" style="left:538px;top:188.56px;font-size:12.8px;line-height:16px;color:#000;">21.08.2019</div>
<div class="b" style="left:535px;top:215px;width:140px;height:24px;background:#fff;border:1px solid #7a7a7a;"></div>
<div class="t" style="left:538px;top:218.56px;font-size:12.8px;line-height:16px;color:#000;">27.08.2019 10:18:36</div>
<div class="t" style="left:682px;top:218.56px;font-size:12.8px;line-height:16px;color:#000;">von</div>
<div class="b" style="left:707px;top:215px;width:31px;height:24px;background:#fff;border:1px solid #7a7a7a;"></div>
<div class="b" style="left:708px;top:216px;width:26px;height:22px;overflow:hidden"><div class="t" style="left:2px;top:2.5px;font-size:12.8px;line-height:16px">Adm</div></div>
<div class="b" style="left:743px;top:215px;width:75px;height:25px;background:#ff0000;border:1px solid #6d6d6d;box-shadow:inset 0 2px 0 #fff,inset 0 -3px 0 #a0a0a0"></div>
<div class="t" style="left:759.5px;top:220.56px;font-size:12.8px;line-height:16px;color:#111;">Historie</div>
<div class="b" style="left:535px;top:245px;width:140px;height:24px;background:#fff;border:1px solid #7a7a7a;"></div>
<div class="t" style="left:538px;top:248.56px;font-size:12.8px;line-height:16px;color:#000;">0815</div>
<div class="b" style="left:535px;top:275px;width:140px;height:24px;background:#fff;border:1px solid #7a7a7a;"></div>
<div class="t" style="left:538px;top:278.56px;font-size:12.8px;line-height:16px;color:#000;">ls123</div>
<div class="b" style="left:533px;top:305px;width:140px;height:24px;background:#fff;border:1px solid #7a7a7a;"></div>
<div class="t" style="left:536px;top:308.56px;font-size:12.8px;line-height:16px;color:#000;">20.08.2019</div>
<svg class="b" style="left:644px;top:311px" width="22" height="14" viewBox="0 0 22 14"><path d="M1.5 0.5h7.5a1 1 0 0 1 1 1v8l-2 2h-6.5a1 1 0 0 1-1-1v-9a1 1 0 0 1 1-1z" fill="#eef0f4" stroke="#6e6363" stroke-width="0.9"/><path d="M8 11.5v-2h2" fill="#d0d3da" stroke="#8a8080" stroke-width="0.7"/><rect x="2.3" y="2.6" width="1.7" height="1.7" fill="#bfc6d4"/><rect x="2.3" y="5.2" width="1.7" height="1.7" fill="#bfc6d4"/><rect x="2.3" y="7.8" width="1.7" height="1.7" fill="#bfc6d4"/><rect x="4.9" y="2.6" width="1.7" height="1.7" fill="#bfc6d4"/><rect x="4.9" y="5.2" width="1.7" height="1.7" fill="#bfc6d4"/><rect x="4.9" y="7.8" width="1.7" height="1.7" fill="#bfc6d4"/><rect x="7.5" y="2.6" width="1.7" height="1.7" fill="#bfc6d4"/><rect x="7.5" y="5.2" width="1.7" height="1.7" fill="#bfc6d4"/><rect x="7.5" y="7.8" width="1.7" height="1.7" fill="#bfc6d4"/><path d="M13 3.8h7l-3.5 4.2z" fill="#4b5f8c"/></svg>
<div class="b" style="left:535px;top:335px;width:91px;height:23px;background:#fff;border:1px solid #7a7a7a;"></div>
<div class="t" style="left:538px;top:338.56px;font-size:12.8px;line-height:16px;color:#000;">22.08.2019</div>
<svg class="b" style="left:613px;top:344px" width="10" height="6" viewBox="0 0 10 6"><path d="M0.8 0.8L5 5L9.2 0.8" fill="none" stroke="#555" stroke-width="1.1"/></svg>
<div class="b" style="left:632px;top:334px;width:43px;height:26px;background:#fff;border:1px solid #7a7a7a;"></div>
<div class="t" style="left:635px;top:339.16px;font-size:12.8px;line-height:16px;color:#000;">12</div>
<div class="b" style="left:658px;top:337px;width:13px;height:7.5px;background:#d6d6d6;border:1px solid #cfcfcf"></div>
<div class="b" style="left:658px;top:346px;width:13px;height:10px;background:#d6d6d6;border:1px solid #cfcfcf"></div>
<svg class="b" style="left:658px;top:337px" width="13" height="19" viewBox="0 0 13 19"><path d="M2.5 7L6.5 3L10.5 7Z" fill="#000"/><path d="M2.5 12L6.5 16L10.5 12Z" fill="#000"/></svg>
<div class="t" style="left:677.5px;top:338.56px;font-size:12.8px;line-height:16px;color:#000;">:00 Uhr</div>
<div class="t" style="left:707px;top:283.76px;font-size:12.8px;line-height:16px;color:#000;">BearbeiterIn</div>
<div class="b" style="left:707px;top:305px;width:140px;height:24px;background:#fff;border:1px solid #7a7a7a;"></div>
<div class="t" style="left:852.7px;top:189.06px;font-size:12.8px;line-height:16px;color:#000;">Auftragsbestätig.</div>
<div class="t" style="left:852.7px;top:214.06px;font-size:12.8px;line-height:16px;color:#000;">Lieferschein</div>
<div class="t" style="left:852.7px;top:239.06px;font-size:12.8px;line-height:16px;color:#000;">Rechnung</div>
<div class="t" style="left:852.7px;top:264.06px;font-size:12.8px;line-height:16px;color:#000;">bezahlt am</div>
<div class="b" style="left:970px;top:179px;width:140px;height:24px;background:#fff;border:1px solid #7a7a7a;"></div>
<svg class="b" style="left:1081.5px;top:185px" width="22" height="14" viewBox="0 0 22 14"><path d="M1.5 0.5h7.5a1 1 0 0 1 1 1v8l-2 2h-6.5a1 1 0 0 1-1-1v-9a1 1 0 0 1 1-1z" fill="#eef0f4" stroke="#6e6363" stroke-width="0.9"/><path d="M8 11.5v-2h2" fill="#d0d3da" stroke="#8a8080" stroke-width="0.7"/><rect x="2.3" y="2.6" width="1.7" height="1.7" fill="#bfc6d4"/><rect x="2.3" y="5.2" width="1.7" height="1.7" fill="#bfc6d4"/><rect x="2.3" y="7.8" width="1.7" height="1.7" fill="#bfc6d4"/><rect x="4.9" y="2.6" width="1.7" height="1.7" fill="#bfc6d4"/><rect x="4.9" y="5.2" width="1.7" height="1.7" fill="#bfc6d4"/><rect x="4.9" y="7.8" width="1.7" height="1.7" fill="#bfc6d4"/><rect x="7.5" y="2.6" width="1.7" height="1.7" fill="#bfc6d4"/><rect x="7.5" y="5.2" width="1.7" height="1.7" fill="#bfc6d4"/><rect x="7.5" y="7.8" width="1.7" height="1.7" fill="#bfc6d4"/><path d="M13 3.8h7l-3.5 4.2z" fill="#4b5f8c"/></svg>
<div class="b" style="left:970px;top:209px;width:140px;height:23px;background:#fff;border:1px solid #7a7a7a;"></div>
<svg class="b" style="left:1081.5px;top:215px" width="22" height="14" viewBox="0 0 22 14"><path d="M1.5 0.5h7.5a1 1 0 0 1 1 1v8l-2 2h-6.5a1 1 0 0 1-1-1v-9a1 1 0 0 1 1-1z" fill="#eef0f4" stroke="#6e6363" stroke-width="0.9"/><path d="M8 11.5v-2h2" fill="#d0d3da" stroke="#8a8080" stroke-width="0.7"/><rect x="2.3" y="2.6" width="1.7" height="1.7" fill="#bfc6d4"/><rect x="2.3" y="5.2" width="1.7" height="1.7" fill="#bfc6d4"/><rect x="2.3" y="7.8" width="1.7" height="1.7" fill="#bfc6d4"/><rect x="4.9" y="2.6" width="1.7" height="1.7" fill="#bfc6d4"/><rect x="4.9" y="5.2" width="1.7" height="1.7" fill="#bfc6d4"/><rect x="4.9" y="7.8" width="1.7" height="1.7" fill="#bfc6d4"/><rect x="7.5" y="2.6" width="1.7" height="1.7" fill="#bfc6d4"/><rect x="7.5" y="5.2" width="1.7" height="1.7" fill="#bfc6d4"/><rect x="7.5" y="7.8" width="1.7" height="1.7" fill="#bfc6d4"/><path d="M13 3.8h7l-3.5 4.2z" fill="#4b5f8c"/></svg>
<div class="b" style="left:968px;top:234px;width:140px;height:24px;background:#fff;border:1px solid #7a7a7a;"></div>
<svg class="b" style="left:1079.5px;top:240px" width="22" height="14" viewBox="0 0 22 14"><path d="M1.5 0.5h7.5a1 1 0 0 1 1 1v8l-2 2h-6.5a1 1 0 0 1-1-1v-9a1 1 0 0 1 1-1z" fill="#eef0f4" stroke="#6e6363" stroke-width="0.9"/><path d="M8 11.5v-2h2" fill="#d0d3da" stroke="#8a8080" stroke-width="0.7"/><rect x="2.3" y="2.6" width="1.7" height="1.7" fill="#bfc6d4"/><rect x="2.3" y="5.2" width="1.7" height="1.7" fill="#bfc6d4"/><rect x="2.3" y="7.8" width="1.7" height="1.7" fill="#bfc6d4"/><rect x="4.9" y="2.6" width="1.7" height="1.7" fill="#bfc6d4"/><rect x="4.9" y="5.2" width="1.7" height="1.7" fill="#bfc6d4"/><rect x="4.9" y="7.8" width="1.7" height="1.7" fill="#bfc6d4"/><rect x="7.5" y="2.6" width="1.7" height="1.7" fill="#bfc6d4"/><rect x="7.5" y="5.2" width="1.7" height="1.7" fill="#bfc6d4"/><rect x="7.5" y="7.8" width="1.7" height="1.7" fill="#bfc6d4"/><path d="M13 3.8h7l-3.5 4.2z" fill="#4b5f8c"/></svg>
<div class="b" style="left:968px;top:259px;width:140px;height:24px;background:#fff;border:1px solid #7a7a7a;"></div>
<svg class="b" style="left:1079.5px;top:265px" width="22" height="14" viewBox="0 0 22 14"><path d="M1.5 0.5h7.5a1 1 0 0 1 1 1v8l-2 2h-6.5a1 1 0 0 1-1-1v-9a1 1 0 0 1 1-1z" fill="#eef0f4" stroke="#6e6363" stroke-width="0.9"/><path d="M8 11.5v-2h2" fill="#d0d3da" stroke="#8a8080" stroke-width="0.7"/><rect x="2.3" y="2.6" width="1.7" height="1.7" fill="#bfc6d4"/><rect x="2.3" y="5.2" width="1.7" height="1.7" fill="#bfc6d4"/><rect x="2.3" y="7.8" width="1.7" height="1.7" fill="#bfc6d4"/><rect x="4.9" y="2.6" width="1.7" height="1.7" fill="#bfc6d4"/><rect x="4.9" y="5.2" width="1.7" height="1.7" fill="#bfc6d4"/><rect x="4.9" y="7.8" width="1.7" height="1.7" fill="#bfc6d4"/><rect x="7.5" y="2.6" width="1.7" height="1.7" fill="#bfc6d4"/><rect x="7.5" y="5.2" width="1.7" height="1.7" fill="#bfc6d4"/><rect x="7.5" y="7.8" width="1.7" height="1.7" fill="#bfc6d4"/><path d="M13 3.8h7l-3.5 4.2z" fill="#4b5f8c"/></svg>
<div class="cb" style="left:1129px;top:191px;width:13px;height:13px"></div>
<svg class="b" style="left:1129px;top:191px" width="13" height="13" viewBox="0 0 13 13"><path d="M2.3 6.3L5 9.3L10.7 3.2" fill="none" stroke="#3a3a3a" stroke-width="1.05"/></svg>
<div class="t" style="left:1145.3px;top:190.06px;font-size:12.8px;line-height:16px;color:#000;">Erledigt</div>
<div class="cb" style="left:1129px;top:216px;width:13px;height:13px"></div>
<div class="t" style="left:1145.3px;top:215.06px;font-size:12.8px;line-height:16px;color:#000;">gesperrt</div>
<div class="cb" style="left:1129px;top:241px;width:13px;height:13px"></div>
<div class="t" style="left:1145.3px;top:240.06px;font-size:12.8px;line-height:16px;color:#000;">Sammelrechnung</div>
<div class="cb" style="left:1129px;top:266px;width:13px;height:13px"></div>
<div class="t" style="left:1145.3px;top:265.06px;font-size:12.8px;line-height:16px;color:#000;">bezahlt</div>
<div class="cb" style="left:1212px;top:266px;width:13px;height:13px"></div>
<div class="b" style="left:1230.7px;top:265px;width:136.0px;height:17px;background:#fdab4f"></div>
<div class="t" style="left:1231.7px;top:265.86px;font-size:12.8px;line-height:16px;color:#000;">offener Posten angelegt</div>
<div class="b" style="left:968px;top:305px;width:503px;height:25px;background:#fff;border:1px solid #7a7a7a;"></div>
<div class="t" style="left:853px;top:307.86px;font-size:12.8px;line-height:16px;color:#000;">Kundenbelegnr.</div>
<div class="b" style="left:6px;top:360px;width:72px;height:24px;border-top:2px solid #6a6a6a;border-left:2px solid #6a6a6a;border-bottom:1px solid #fff;border-right:1px solid #fff"></div>
<div class="t" style="left:16px;top:365.56px;font-size:12.8px;line-height:16px;color:#000;">Positionen</div>
<div class="b" style="left:82px;top:360px;width:70px;height:24px;border-top:1px solid #fff;border-left:1px solid #fff;border-bottom:2px solid #6a6a6a;border-right:2px solid #6a6a6a"></div>
<div class="t" style="left:88.3px;top:366.56px;font-size:12.8px;line-height:16px;color:#000;">Kopfdaten</div>
<div class="b" style="left:10px;top:390px;width:48px;height:24px;border-top:2px solid #6a6a6a;border-left:2px solid #6a6a6a;border-bottom:1px solid #fff;border-right:1px solid #fff"></div>
<div class="t" style="left:20.5px;top:395.06px;font-size:12.8px;line-height:16px;color:#000;">Kartei</div>
<div class="b" style="left:61px;top:390px;width:48px;height:24px;border-top:1px solid #fff;border-left:1px solid #fff;border-bottom:2px solid #6a6a6a;border-right:2px solid #6a6a6a"></div>
<div class="t" style="left:67px;top:395.86px;font-size:12.8px;line-height:16px;color:#000;">Liste</div>
<div class="t" style="left:17px;top:431.56px;font-size:12.8px;line-height:16px;color:#000;">ArtikelNr.</div>
<div class="t" style="left:17px;top:456.56px;font-size:12.8px;line-height:16px;color:#000;">Bezeichnung 1+2</div>
<div class="t" style="left:17px;top:482.06px;font-size:12.8px;line-height:16px;color:#000;">Veredelung</div>
<div class="t" style="left:17px;top:506.56px;font-size:12.8px;line-height:16px;color:#000;">Text</div>
<div class="t" style="left:17px;top:617.56px;font-size:12.8px;line-height:16px;color:#000;">interne</div>
<div class="t" style="left:17px;top:633.36px;font-size:12.8px;line-height:16px;color:#000;">Bemerkung</div>
<div class="b" style="left:122px;top:428.6px;width:124px;height:23.399999999999977px;background:#fdab4f;border:1px solid #7a7a7a;box-shadow:inset 0 0 0 1px #fff;"></div>
<div class="t" style="left:125px;top:431.56px;font-size:12.8px;line-height:16px;color:#000;">736 539-00</div>
<div class="t" style="left:430.8px;top:431.56px;font-size:12.8px;line-height:16px;color:#000;">erledigt</div>
<div class="cb" style="left:481px;top:432.6px;width:13px;height:13px"></div>
<svg class="b" style="left:481px;top:432.6px" width="13" height="13" viewBox="0 0 13 13"><path d="M2.3 6.3L5 9.3L10.7 3.2" fill="none" stroke="#3a3a3a" stroke-width="1.05"/></svg>
<div class="b" style="left:122px;top:453px;width:373px;height:24px;background:#fff;border:1px solid #7a7a7a;"></div>
<div class="b" style="left:122px;top:478px;width:373px;height:24px;background:#fff;border:1px solid #7a7a7a;"></div>
<div class="b" style="left:122px;top:503px;width:373px;height:108px;background:#fff;border:1px solid #7a7a7a;"></div>
<div class="b" style="left:122px;top:617px;width:373px;height:282px;background:#fff;border:1px solid #7a7a7a;"></div>
<div class="b" style="left:477px;top:618px;width:17px;height:280px;background:#f0f0f0"></div>
<div class="b" style="left:123px;top:881px;width:354px;height:17px;background:#f0f0f0"></div>
<svg class="b" style="left:479px;top:622px" width="12" height="8" viewBox="0 0 12 8"><path d="M2 6L6 2L10 6" fill="none" stroke="#a8a8a8" stroke-width="1.6"/></svg>
<svg class="b" style="left:479px;top:867px" width="12" height="8" viewBox="0 0 12 8"><path d="M2 2L6 6L10 2" fill="none" stroke="#a8a8a8" stroke-width="1.6"/></svg>
<svg class="b" style="left:126px;top:883px" width="8" height="12" viewBox="0 0 8 12"><path d="M6 2L2 6L6 10" fill="none" stroke="#a8a8a8" stroke-width="1.6"/></svg>
<svg class="b" style="left:464px;top:883px" width="8" height="12" viewBox="0 0 8 12"><path d="M2 2L6 6L2 10" fill="none" stroke="#a8a8a8" stroke-width="1.6"/></svg>
<div class="b" style="left:124px;top:474px;width:256px;height:5px;background:#cfcfc8;filter:blur(1.5px)"></div>
<div class="b" style="left:124px;top:499px;width:256px;height:5px;background:#cfcfc8;filter:blur(1.5px)"></div>
<svg class="b" style="left:125px;top:458px;opacity:0.7;filter:blur(1.0px)" width="67" height="14" viewBox="0 0 67 14"><path d="M7.8 1 L67.0 1 L59.2 13.0 L0 13.0Z" fill="rgba(200,200,200,0.3)"/><path d="M0.5 4.4 L8.8 1.5" stroke="#555" stroke-width="1.45" stroke-opacity="0.64"/><path d="M0.5 6.6 L17.8 0.5" stroke="#555" stroke-width="1.08" stroke-opacity="0.26"/><path d="M0.5 6.6 L12.9 2.3" stroke="#555" stroke-width="0.87" stroke-opacity="0.21"/><path d="M0.5 9.1 L18.5 2.8" stroke="#555" stroke-width="1.34" stroke-opacity="0.29"/><path d="M0.5 8.1 L7.2 5.8" stroke="#555" stroke-width="1.40" stroke-opacity="0.20"/><path d="M0.5 6.6 L26.0 -2.3" stroke="#555" stroke-width="0.93" stroke-opacity="0.68"/><path d="M0.5 9.4 L23.0 1.5" stroke="#555" stroke-width="1.45" stroke-opacity="0.31"/><path d="M0.5 12.5 L29.9 2.2" stroke="#555" stroke-width="0.99" stroke-opacity="0.36"/><path d="M0.5 8.8 L14.9 3.8" stroke="#555" stroke-width="1.18" stroke-opacity="0.37"/><path d="M0.8 11.9 L21.5 4.6" stroke="#555" stroke-width="1.35" stroke-opacity="0.37"/><path d="M2.9 10.0 L26.5 1.7" stroke="#555" stroke-width="0.75" stroke-opacity="0.59"/><path d="M6.1 8.5 L35.1 -1.6" stroke="#555" stroke-width="0.71" stroke-opacity="0.66"/><path d="M8.8 10.3 L34.4 1.3" stroke="#555" stroke-width="0.74" stroke-opacity="0.20"/><path d="M10.4 13.3 L28.3 7.0" stroke="#555" stroke-width="1.44" stroke-opacity="0.62"/><path d="M13.5 10.2 L34.6 2.8" stroke="#555" stroke-width="1.32" stroke-opacity="0.49"/><path d="M14.9 12.2 L44.9 1.7" stroke="#555" stroke-width="0.73" stroke-opacity="0.67"/><path d="M18.0 8.9 L38.8 1.6" stroke="#555" stroke-width="1.43" stroke-opacity="0.54"/><path d="M19.9 13.1 L44.8 4.4" stroke="#555" stroke-width="0.95" stroke-opacity="0.37"/><path d="M21.4 8.8 L38.4 2.9" stroke="#555" stroke-width="1.50" stroke-opacity="0.58"/><path d="M23.0 8.6 L56.7 -3.2" stroke="#555" stroke-width="1.02" stroke-opacity="0.49"/><path d="M24.6 11.4 L55.2 0.7" stroke="#555" stroke-width="1.04" stroke-opacity="0.45"/><path d="M25.9 13.1 L40.6 7.9" stroke="#555" stroke-width="1.37" stroke-opacity="0.47"/><path d="M27.4 12.1 L60.4 0.6" stroke="#555" stroke-width="1.33" stroke-opacity="0.55"/><path d="M28.8 10.6 L45.8 4.7" stroke="#555" stroke-width="0.94" stroke-opacity="0.66"/><path d="M30.9 13.5 L62.0 2.6" stroke="#555" stroke-width="1.06" stroke-opacity="0.74"/><path d="M33.1 12.1 L56.7 3.9" stroke="#555" stroke-width="1.02" stroke-opacity="0.36"/><path d="M34.6 10.3 L66.5 -0.8" stroke="#555" stroke-width="1.20" stroke-opacity="0.73"/><path d="M36.8 10.1 L52.6 4.6" stroke="#555" stroke-width="1.33" stroke-opacity="0.35"/><path d="M39.7 10.2 L66.5 0.9" stroke="#555" stroke-width="1.26" stroke-opacity="0.63"/><path d="M42.3 12.3 L63.5 4.8" stroke="#555" stroke-width="0.92" stroke-opacity="0.59"/><path d="M44.4 12.3 L66.5 4.6" stroke="#555" stroke-width="1.46" stroke-opacity="0.36"/><path d="M46.9 11.4 L61.2 6.4" stroke="#555" stroke-width="0.90" stroke-opacity="0.50"/><path d="M49.5 10.8 L66.5 4.8" stroke="#555" stroke-width="1.34" stroke-opacity="0.56"/><path d="M51.4 11.7 L66.5 6.4" stroke="#555" stroke-width="0.98" stroke-opacity="0.66"/><path d="M54.2 12.8 L66.5 8.5" stroke="#555" stroke-width="1.47" stroke-opacity="0.74"/><path d="M56.5 11.1 L66.5 7.6" stroke="#555" stroke-width="1.45" stroke-opacity="0.66"/><path d="M58.6 11.9 L66.5 9.2" stroke="#555" stroke-width="0.84" stroke-opacity="0.60"/><path d="M61.4 11.4 L66.5 9.6" stroke="#555" stroke-width="1.20" stroke-opacity="0.43"/></svg>
<svg class="b" style="left:125px;top:506px;opacity:0.7;filter:blur(1.0px)" width="69" height="14" viewBox="0 0 69 14"><path d="M7.8 1 L69.0 1 L61.2 13.0 L0 13.0Z" fill="rgba(200,200,200,0.3)"/><path d="M0.5 5.3 L10.4 1.8" stroke="#555" stroke-width="0.91" stroke-opacity="0.47"/><path d="M0.5 5.0 L4.6 3.6" stroke="#555" stroke-width="1.00" stroke-opacity="0.62"/><path d="M0.5 4.0 L14.0 -0.7" stroke="#555" stroke-width="1.03" stroke-opacity="0.60"/><path d="M0.5 6.9 L4.1 5.6" stroke="#555" stroke-width="1.34" stroke-opacity="0.50"/><path d="M0.5 8.1 L15.7 2.8" stroke="#555" stroke-width="0.97" stroke-opacity="0.66"/><path d="M0.5 8.6 L19.4 1.9" stroke="#555" stroke-width="0.78" stroke-opacity="0.44"/><path d="M0.5 8.3 L10.8 4.7" stroke="#555" stroke-width="1.17" stroke-opacity="0.72"/><path d="M0.5 9.0 L13.7 4.3" stroke="#555" stroke-width="1.43" stroke-opacity="0.71"/><path d="M0.5 9.7 L22.7 1.9" stroke="#555" stroke-width="1.48" stroke-opacity="0.64"/><path d="M0.5 8.7 L22.1 1.1" stroke="#555" stroke-width="1.17" stroke-opacity="0.37"/><path d="M0.5 11.8 L21.9 4.3" stroke="#555" stroke-width="1.23" stroke-opacity="0.26"/><path d="M0.5 9.0 L22.9 1.1" stroke="#555" stroke-width="0.87" stroke-opacity="0.28"/><path d="M2.2 12.0 L16.4 7.0" stroke="#555" stroke-width="0.71" stroke-opacity="0.63"/><path d="M4.0 13.0 L30.4 3.8" stroke="#555" stroke-width="1.00" stroke-opacity="0.37"/><path d="M6.0 9.0 L40.0 -2.9" stroke="#555" stroke-width="1.04" stroke-opacity="0.23"/><path d="M8.7 10.4 L42.3 -1.3" stroke="#555" stroke-width="1.48" stroke-opacity="0.33"/><path d="M11.7 11.8 L43.5 0.7" stroke="#555" stroke-width="1.37" stroke-opacity="0.45"/><path d="M14.5 11.0 L37.9 2.8" stroke="#555" stroke-width="1.03" stroke-opacity="0.59"/><path d="M15.8 12.2 L35.2 5.4" stroke="#555" stroke-width="1.33" stroke-opacity="0.47"/><path d="M17.4 8.5 L33.9 2.7" stroke="#555" stroke-width="0.99" stroke-opacity="0.52"/><path d="M19.1 10.7 L51.6 -0.7" stroke="#555" stroke-width="1.03" stroke-opacity="0.34"/><path d="M22.1 11.5 L41.4 4.7" stroke="#555" stroke-width="1.08" stroke-opacity="0.46"/><path d="M23.5 10.3 L43.7 3.3" stroke="#555" stroke-width="0.96" stroke-opacity="0.64"/><path d="M26.1 13.4 L58.5 2.0" stroke="#555" stroke-width="1.18" stroke-opacity="0.41"/><path d="M27.9 10.4 L51.7 2.1" stroke="#555" stroke-width="1.45" stroke-opacity="0.64"/><path d="M29.7 8.4 L52.7 0.4" stroke="#555" stroke-width="0.72" stroke-opacity="0.23"/><path d="M32.4 9.0 L60.8 -1.0" stroke="#555" stroke-width="1.45" stroke-opacity="0.40"/><path d="M35.3 8.7 L53.2 2.5" stroke="#555" stroke-width="1.19" stroke-opacity="0.72"/><path d="M37.4 12.4 L67.6 1.8" stroke="#555" stroke-width="1.08" stroke-opacity="0.47"/><path d="M38.8 10.2 L55.7 4.3" stroke="#555" stroke-width="1.19" stroke-opacity="0.54"/><path d="M40.3 11.6 L56.2 6.0" stroke="#555" stroke-width="1.22" stroke-opacity="0.26"/><path d="M42.4 13.0 L68.5 3.8" stroke="#555" stroke-width="0.80" stroke-opacity="0.59"/><path d="M45.3 8.8 L68.5 0.7" stroke="#555" stroke-width="1.43" stroke-opacity="0.70"/><path d="M48.2 10.7 L68.5 3.6" stroke="#555" stroke-width="0.81" stroke-opacity="0.64"/><path d="M51.3 13.0 L68.5 7.0" stroke="#555" stroke-width="1.06" stroke-opacity="0.63"/><path d="M53.1 12.0 L68.4 6.7" stroke="#555" stroke-width="1.48" stroke-opacity="0.64"/><path d="M54.9 13.2 L68.5 8.4" stroke="#555" stroke-width="0.92" stroke-opacity="0.67"/><path d="M58.0 10.6 L68.5 6.9" stroke="#555" stroke-width="0.77" stroke-opacity="0.22"/><path d="M60.8 11.7 L68.5 9.0" stroke="#555" stroke-width="0.84" stroke-opacity="0.22"/><path d="M62.8 8.7 L68.5 6.7" stroke="#555" stroke-width="1.46" stroke-opacity="0.62"/><path d="M65.4 10.2 L68.5 9.1" stroke="#555" stroke-width="0.79" stroke-opacity="0.60"/></svg>
<svg class="b" style="left:125px;top:524px;opacity:0.7;filter:blur(1.0px)" width="245" height="14" viewBox="0 0 245 14"><path d="M7.8 1 L245.0 1 L237.2 13.0 L0 13.0Z" fill="rgba(200,200,200,0.3)"/><path d="M0.5 4.4 L2.7 3.7" stroke="#555" stroke-width="1.11" stroke-opacity="0.23"/><path d="M0.5 7.1 L1.1 6.9" stroke="#555" stroke-width="1.20" stroke-opacity="0.32"/><path d="M0.5 6.9 L9.7 3.7" stroke="#555" stroke-width="0.74" stroke-opacity="0.74"/><path d="M0.5 6.4 L7.6 4.0" stroke="#555" stroke-width="0.95" stroke-opacity="0.26"/><path d="M0.5 6.9 L19.1 0.4" stroke="#555" stroke-width="1.00" stroke-opacity="0.55"/><path d="M0.5 7.1 L11.0 3.4" stroke="#555" stroke-width="1.24" stroke-opacity="0.31"/><path d="M0.5 9.1 L23.6 1.0" stroke="#555" stroke-width="0.94" stroke-opacity="0.45"/><path d="M0.7 12.0 L19.5 5.4" stroke="#555" stroke-width="1.12" stroke-opacity="0.52"/><path d="M3.6 12.1 L23.4 5.2" stroke="#555" stroke-width="0.79" stroke-opacity="0.74"/><path d="M5.6 12.3 L22.7 6.3" stroke="#555" stroke-width="0.73" stroke-opacity="0.47"/><path d="M8.2 12.3 L33.6 3.4" stroke="#555" stroke-width="0.95" stroke-opacity="0.68"/><path d="M10.8 11.4 L36.4 2.5" stroke="#555" stroke-width="1.37" stroke-opacity="0.45"/><path d="M13.9 10.8 L41.1 1.3" stroke="#555" stroke-width="1.26" stroke-opacity="0.23"/><path d="M16.4 13.5 L46.8 2.8" stroke="#555" stroke-width="1.01" stroke-opacity="0.36"/><path d="M18.9 8.5 L42.1 0.4" stroke="#555" stroke-width="0.79" stroke-opacity="0.29"/><path d="M20.2 12.3 L36.8 6.5" stroke="#555" stroke-width="1.01" stroke-opacity="0.34"/><path d="M23.1 8.8 L46.1 0.8" stroke="#555" stroke-width="1.41" stroke-opacity="0.50"/><path d="M26.0 12.8 L45.6 6.0" stroke="#555" stroke-width="0.99" stroke-opacity="0.43"/><path d="M29.0 13.3 L46.0 7.3" stroke="#555" stroke-width="0.89" stroke-opacity="0.30"/><path d="M30.6 10.9 L56.4 1.8" stroke="#555" stroke-width="0.70" stroke-opacity="0.34"/><path d="M32.7 10.3 L58.0 1.4" stroke="#555" stroke-width="1.25" stroke-opacity="0.72"/><path d="M34.9 11.5 L62.4 1.9" stroke="#555" stroke-width="1.42" stroke-opacity="0.23"/><path d="M37.7 12.9 L67.6 2.4" stroke="#555" stroke-width="1.02" stroke-opacity="0.42"/><path d="M39.1 11.6 L54.3 6.3" stroke="#555" stroke-width="0.87" stroke-opacity="0.24"/><path d="M40.6 10.1 L55.6 4.9" stroke="#555" stroke-width="0.82" stroke-opacity="0.20"/><path d="M42.0 10.3 L56.5 5.2" stroke="#555" stroke-width="1.19" stroke-opacity="0.68"/><path d="M43.5 9.7 L64.4 2.4" stroke="#555" stroke-width="0.80" stroke-opacity="0.40"/><path d="M46.4 13.5 L69.7 5.3" stroke="#555" stroke-width="0.77" stroke-opacity="0.47"/><path d="M47.8 10.1 L67.1 3.4" stroke="#555" stroke-width="0.83" stroke-opacity="0.66"/><path d="M49.0 13.3 L73.6 4.7" stroke="#555" stroke-width="1.13" stroke-opacity="0.28"/><path d="M50.3 11.1 L83.9 -0.7" stroke="#555" stroke-width="1.26" stroke-opacity="0.67"/><path d="M52.0 10.3 L69.3 4.2" stroke="#555" stroke-width="1.13" stroke-opacity="0.62"/><path d="M54.8 10.1 L73.2 3.6" stroke="#555" stroke-width="1.49" stroke-opacity="0.65"/><path d="M57.7 12.5 L88.0 1.9" stroke="#555" stroke-width="0.88" stroke-opacity="0.61"/><path d="M59.9 10.2 L74.5 5.1" stroke="#555" stroke-width="0.92" stroke-opacity="0.22"/><path d="M61.6 11.9 L94.8 0.3" stroke="#555" stroke-width="1.45" stroke-opacity="0.45"/><path d="M64.8 13.3 L86.1 5.8" stroke="#555" stroke-width="0.88" stroke-opacity="0.32"/><path d="M66.4 9.4 L92.9 0.2" stroke="#555" stroke-width="1.37" stroke-opacity="0.70"/><path d="M68.6 11.7 L98.5 1.2" stroke="#555" stroke-width="1.23" stroke-opacity="0.25"/><path d="M71.6 12.4 L100.6 2.2" stroke="#555" stroke-width="0.84" stroke-opacity="0.46"/><path d="M74.4 10.1 L104.4 -0.4" stroke="#555" stroke-width="1.02" stroke-opacity="0.73"/><path d="M76.4 13.2 L104.8 3.3" stroke="#555" stroke-width="0.80" stroke-opacity="0.29"/><path d="M77.9 13.0 L108.0 2.5" stroke="#555" stroke-width="1.36" stroke-opacity="0.28"/><path d="M81.0 11.8 L102.0 4.4" stroke="#555" stroke-width="0.80" stroke-opacity="0.50"/><path d="M82.2 13.4 L109.2 3.9" stroke="#555" stroke-width="1.45" stroke-opacity="0.49"/><path d="M84.3 12.8 L114.8 2.2" stroke="#555" stroke-width="0.90" stroke-opacity="0.32"/><path d="M86.1 9.6 L111.8 0.6" stroke="#555" stroke-width="1.04" stroke-opacity="0.34"/><path d="M87.6 13.0 L108.6 5.7" stroke="#555" stroke-width="1.17" stroke-opacity="0.45"/><path d="M90.6 10.5 L122.9 -0.8" stroke="#555" stroke-width="1.13" stroke-opacity="0.48"/><path d="M92.8 8.5 L115.6 0.5" stroke="#555" stroke-width="0.70" stroke-opacity="0.30"/><path d="M95.6 9.3 L119.1 1.1" stroke="#555" stroke-width="1.15" stroke-opacity="0.60"/><path d="M97.5 11.0 L122.6 2.3" stroke="#555" stroke-width="0.78" stroke-opacity="0.63"/><path d="M99.8 9.7 L119.3 2.8" stroke="#555" stroke-width="1.11" stroke-opacity="0.62"/><path d="M102.1 12.3 L134.4 1.0" stroke="#555" stroke-width="1.19" stroke-opacity="0.44"/><path d="M104.3 11.0 L132.2 1.3" stroke="#555" stroke-width="1.13" stroke-opacity="0.45"/><path d="M106.5 13.2 L134.5 3.4" stroke="#555" stroke-width="1.45" stroke-opacity="0.68"/><path d="M108.2 11.3 L141.1 -0.2" stroke="#555" stroke-width="0.81" stroke-opacity="0.66"/><path d="M109.6 10.7 L125.1 5.2" stroke="#555" stroke-width="0.76" stroke-opacity="0.33"/><path d="M112.2 12.4 L144.1 1.2" stroke="#555" stroke-width="1.27" stroke-opacity="0.28"/><path d="M114.7 9.1 L146.4 -2.0" stroke="#555" stroke-width="0.88" stroke-opacity="0.73"/><path d="M117.8 10.4 L141.5 2.1" stroke="#555" stroke-width="1.37" stroke-opacity="0.74"/><path d="M119.3 10.6 L143.6 2.1" stroke="#555" stroke-width="0.86" stroke-opacity="0.39"/><path d="M121.2 12.1 L135.6 7.0" stroke="#555" stroke-width="1.05" stroke-opacity="0.50"/><path d="M122.4 10.1 L148.9 0.8" stroke="#555" stroke-width="0.75" stroke-opacity="0.48"/><path d="M125.6 12.4 L159.0 0.7" stroke="#555" stroke-width="0.91" stroke-opacity="0.26"/><path d="M126.8 12.4 L146.3 5.6" stroke="#555" stroke-width="1.04" stroke-opacity="0.27"/><path d="M129.9 12.6 L149.0 5.9" stroke="#555" stroke-width="1.44" stroke-opacity="0.28"/><path d="M132.2 12.0 L148.0 6.4" stroke="#555" stroke-width="1.25" stroke-opacity="0.23"/><path d="M134.3 8.8 L167.0 -2.7" stroke="#555" stroke-width="1.34" stroke-opacity="0.55"/><path d="M135.6 12.8 L151.0 7.4" stroke="#555" stroke-width="1.06" stroke-opacity="0.67"/><path d="M137.5 11.2 L170.0 -0.2" stroke="#555" stroke-width="0.80" stroke-opacity="0.35"/><path d="M139.8 9.6 L156.0 3.9" stroke="#555" stroke-width="0.74" stroke-opacity="0.29"/><path d="M141.4 10.0 L161.5 3.0" stroke="#555" stroke-width="0.93" stroke-opacity="0.62"/><path d="M143.6 9.3 L164.5 2.0" stroke="#555" stroke-width="0.90" stroke-opacity="0.21"/><path d="M144.8 12.1 L169.8 3.4" stroke="#555" stroke-width="1.08" stroke-opacity="0.30"/><path d="M147.9 8.9 L178.2 -1.7" stroke="#555" stroke-width="1.10" stroke-opacity="0.44"/><path d="M150.7 10.4 L174.9 2.0" stroke="#555" stroke-width="1.49" stroke-opacity="0.58"/><path d="M152.6 12.6 L180.8 2.8" stroke="#555" stroke-width="1.02" stroke-opacity="0.55"/><path d="M154.5 8.7 L171.1 2.9" stroke="#555" stroke-width="1.29" stroke-opacity="0.24"/><path d="M156.2 9.2 L171.9 3.7" stroke="#555" stroke-width="1.40" stroke-opacity="0.66"/><path d="M158.8 9.8 L177.6 3.2" stroke="#555" stroke-width="1.07" stroke-opacity="0.36"/><path d="M160.3 10.7 L179.5 3.9" stroke="#555" stroke-width="1.48" stroke-opacity="0.73"/><path d="M162.6 9.6 L195.9 -2.0" stroke="#555" stroke-width="0.99" stroke-opacity="0.37"/><path d="M163.8 10.3 L187.3 2.1" stroke="#555" stroke-width="0.86" stroke-opacity="0.48"/><path d="M166.0 8.4 L185.3 1.7" stroke="#555" stroke-width="1.02" stroke-opacity="0.25"/><path d="M167.3 8.5 L187.4 1.5" stroke="#555" stroke-width="1.17" stroke-opacity="0.33"/><path d="M169.5 12.2 L196.7 2.7" stroke="#555" stroke-width="1.40" stroke-opacity="0.59"/><path d="M171.5 10.1 L205.2 -1.7" stroke="#555" stroke-width="1.28" stroke-opacity="0.28"/><path d="M174.0 8.6 L204.7 -2.1" stroke="#555" stroke-width="1.20" stroke-opacity="0.69"/><path d="M176.7 12.5 L193.5 6.7" stroke="#555" stroke-width="1.10" stroke-opacity="0.49"/><path d="M179.5 12.5 L210.1 1.8" stroke="#555" stroke-width="1.41" stroke-opacity="0.52"/><path d="M182.1 11.9 L200.7 5.4" stroke="#555" stroke-width="0.81" stroke-opacity="0.22"/><path d="M184.0 8.9 L214.7 -1.8" stroke="#555" stroke-width="1.20" stroke-opacity="0.51"/><path d="M186.5 11.9 L210.3 3.5" stroke="#555" stroke-width="1.34" stroke-opacity="0.20"/><path d="M189.2 11.0 L213.9 2.3" stroke="#555" stroke-width="0.75" stroke-opacity="0.56"/><path d="M191.8 9.7 L207.3 4.3" stroke="#555" stroke-width="1.28" stroke-opacity="0.35"/><path d="M193.5 12.2 L227.0 0.4" stroke="#555" stroke-width="1.01" stroke-opacity="0.47"/><path d="M195.6 11.9 L225.0 1.6" stroke="#555" stroke-width="1.21" stroke-opacity="0.54"/><path d="M197.0 9.2 L216.0 2.5" stroke="#555" stroke-width="0.94" stroke-opacity="0.61"/><path d="M199.3 8.5 L214.5 3.1" stroke="#555" stroke-width="1.24" stroke-opacity="0.35"/><path d="M201.9 11.8 L221.7 4.9" stroke="#555" stroke-width="1.07" stroke-opacity="0.48"/><path d="M204.0 9.0 L235.9 -2.2" stroke="#555" stroke-width="1.48" stroke-opacity="0.31"/><path d="M207.1 8.5 L230.3 0.4" stroke="#555" stroke-width="1.47" stroke-opacity="0.65"/><path d="M209.2 9.8 L227.4 3.4" stroke="#555" stroke-width="0.87" stroke-opacity="0.72"/><path d="M211.6 9.1 L236.0 0.6" stroke="#555" stroke-width="0.81" stroke-opacity="0.72"/><path d="M214.4 11.0 L244.5 0.5" stroke="#555" stroke-width="0.89" stroke-opacity="0.59"/><path d="M217.4 10.9 L231.9 5.8" stroke="#555" stroke-width="1.09" stroke-opacity="0.20"/><path d="M219.5 9.9 L236.3 4.1" stroke="#555" stroke-width="0.95" stroke-opacity="0.39"/><path d="M222.4 8.4 L244.5 0.7" stroke="#555" stroke-width="0.80" stroke-opacity="0.66"/><path d="M225.4 12.0 L244.5 5.4" stroke="#555" stroke-width="1.00" stroke-opacity="0.36"/><path d="M227.4 13.5 L244.5 7.5" stroke="#555" stroke-width="1.04" stroke-opacity="0.40"/><path d="M229.2 8.6 L244.5 3.3" stroke="#555" stroke-width="0.93" stroke-opacity="0.66"/><path d="M232.2 9.7 L244.5 5.4" stroke="#555" stroke-width="0.85" stroke-opacity="0.48"/><path d="M234.2 13.3 L244.5 9.7" stroke="#555" stroke-width="1.20" stroke-opacity="0.65"/><path d="M237.2 13.2 L244.5 10.6" stroke="#555" stroke-width="0.74" stroke-opacity="0.60"/><path d="M239.9 10.7 L244.5 9.1" stroke="#555" stroke-width="0.93" stroke-opacity="0.55"/><path d="M241.2 13.1 L244.5 12.0" stroke="#555" stroke-width="0.97" stroke-opacity="0.46"/></svg>
<div class="t" style="left:510.3px;top:431.86px;font-size:12.8px;line-height:16px;color:#000;">Menge</div>
<div class="t" style="left:510.3px;top:457.26px;font-size:12.8px;line-height:16px;color:#000;">Extern</div>
<div class="t" style="left:510.3px;top:482.76px;font-size:12.8px;line-height:16px;color:#000;">Einzelpreis</div>
<div class="t" style="left:510.3px;top:507.96px;font-size:12.8px;line-height:16px;color:#000;">Rabatt</div>
<div class="t" style="left:510.3px;top:533.16px;font-size:12.8px;line-height:16px;color:#000;">Nettopreis</div>
<div class="t" style="left:510.3px;top:557.86px;font-size:12.8px;line-height:16px;color:#000;">Bruttopreis</div>
<div class="t" style="left:510.3px;top:620.96px;font-size:12.8px;line-height:16px;color:#000;">geliefert</div>
<div class="t" style="left:510.3px;top:646.96px;font-size:12.8px;line-height:16px;color:#000;">Liefertermin</div>
<div class="b" style="left:587.4px;top:428px;width:79.60000000000002px;height:24px;background:#fff;border:1px solid #7a7a7a;"></div>
<div class="t" style="right:1256px;top:431.86px;font-size:12.8px;line-height:16px;color:#000;text-align:right;">100</div>
<div class="b" style="left:587.4px;top:453.6px;width:79.60000000000002px;height:23.899999999999977px;background:#fff;border:1px solid #7a7a7a;"></div>
<div class="t" style="right:1256px;top:457.26px;font-size:12.8px;line-height:16px;color:#000;text-align:right;">100,00</div>
<div class="b" style="left:587.4px;top:478.6px;width:79.60000000000002px;height:23.899999999999977px;background:#fff;border:1px solid #7a7a7a;"></div>
<div class="t" style="right:1256px;top:482.76px;font-size:12.8px;line-height:16px;color:#000;text-align:right;">0,15 €</div>
<div class="b" style="left:587.4px;top:504.5px;width:79.60000000000002px;height:23.5px;background:#fff;border:1px solid #7a7a7a;"></div>
<div class="t" style="right:1256px;top:507.96px;font-size:12.8px;line-height:16px;color:#000;text-align:right;">0,00</div>
<div class="b" style="left:587.4px;top:529.6px;width:79.60000000000002px;height:23.399999999999977px;background:#fff;border:1px solid #7a7a7a;"></div>
<div class="t" style="right:1256px;top:533.16px;font-size:12.8px;line-height:16px;color:#000;text-align:right;">15,00 €</div>
<div class="b" style="left:587.4px;top:554.4px;width:79.60000000000002px;height:23.600000000000023px;background:#fff;border:1px solid #7a7a7a;"></div>
<div class="t" style="right:1256px;top:557.86px;font-size:12.8px;line-height:16px;color:#000;text-align:right;">17,85 €</div>
<div class="t" style="left:678.3px;top:431.86px;font-size:12.8px;line-height:16px;color:#000;">Stk.</div>
<div class="t" style="left:678.3px;top:457.26px;font-size:12.8px;line-height:16px;color:#000;">Stk.</div>
<div class="t" style="left:678.3px;top:482.76px;font-size:12.8px;line-height:16px;color:#000;">pro</div>
<div class="t" style="left:678.3px;top:507.96px;font-size:12.8px;line-height:16px;color:#000;">%</div>
<div class="t" style="left:679px;top:533.16px;font-size:12.8px;line-height:16px;color:#000;">+</div>
<div class="b" style="left:777.8px;top:428px;width:28.2px;height:20px;overflow:hidden"><div class="t" style="left:0;top:3.9px;font-size:12.8px;line-height:16px">1 WT</div></div>
<div class="b" style="left:729px;top:453px;width:77px;height:22px;overflow:hidden"><div class="t" style="left:0;top:4.3px;font-size:12.8px;line-height:16px">(1,00 Stk. / 1</div></div>
<div class="b" style="left:707px;top:478.6px;width:64px;height:23.899999999999977px;background:#fff;border:1px solid #7a7a7a;"></div>
<div class="t" style="right:1152px;top:482.76px;font-size:12.8px;line-height:16px;color:#000;text-align:right;">1</div>
<div class="t" style="left:777px;top:482.76px;font-size:12.8px;line-height:16px;color:#000;">Stk.</div>
<div class="cb" style="left:707px;top:511.3px;width:13px;height:13px"></div>
<svg class="b" style="left:707px;top:511.3px" width="13" height="13" viewBox="0 0 13 13"><path d="M2.3 6.3L5 9.3L10.7 3.2" fill="none" stroke="#3a3a3a" stroke-width="1.05"/></svg>
<div class="t" style="left:723.2px;top:507.96px;font-size:12.8px;line-height:16px;color:#000;">skontierbar</div>
<div class="b" style="left:707px;top:529.5px;width:48px;height:23.0px;background:#e3e3e3;border:1px solid #c8c8c8;"></div>
<div class="t" style="left:710px;top:533.16px;font-size:12.8px;line-height:16px;color:#000;">19</div>
<svg class="b" style="left:738.5px;top:539px" width="10" height="6" viewBox="0 0 10 6"><path d="M0.8 0.8L5 5L9.2 0.8" fill="none" stroke="#555" stroke-width="1.1"/></svg>
<div class="t" style="left:760px;top:533.16px;font-size:12.8px;line-height:16px;color:#000;">(MWSt)</div>
<div class="b" style="left:587.4px;top:617.8px;width:79.60000000000002px;height:23.200000000000045px;background:#fdab4f;border:1px solid #7a7a7a;box-shadow:inset 0 0 0 1px #fff;"></div>
<div class="t" style="right:1256px;top:620.96px;font-size:12.8px;line-height:16px;color:#000;text-align:right;">0</div>
<div class="t" style="left:705px;top:620.96px;font-size:12.8px;line-height:16px;color:#000;">Restmenge  100</div>
<div class="b" style="left:587.4px;top:643px;width:98.60000000000002px;height:23px;background:#fff;border:1px solid #7a7a7a;"></div>
<div class="t" style="left:590.4px;top:646.96px;font-size:12.8px;line-height:16px;color:#000;">22.08.2019</div>
<svg class="b" style="left:673px;top:652px" width="10" height="6" viewBox="0 0 10 6"><path d="M0.8 0.8L5 5L9.2 0.8" fill="none" stroke="#555" stroke-width="1.1"/></svg>
<div class="b" style="left:705.6px;top:641px;width:46.89999999999998px;height:26px;background:#fff;border:1px solid #7a7a7a;"></div>
<div class="t" style="left:708.6px;top:646.16px;font-size:12.8px;line-height:16px;color:#000;">12</div>
<div class="b" style="left:735.5px;top:644px;width:13.0px;height:7.5px;background:#d6d6d6;border:1px solid #cfcfcf"></div>
<div class="b" style="left:735.5px;top:653px;width:13.0px;height:10px;background:#d6d6d6;border:1px solid #cfcfcf"></div>
<svg class="b" style="left:735.5px;top:644px" width="13" height="19" viewBox="0 0 13 19"><path d="M2.5 7L6.5 3L10.5 7Z" fill="#000"/><path d="M2.5 12L6.5 16L10.5 12Z" fill="#000"/></svg>
<div class="t" style="left:760px;top:646.96px;font-size:12.8px;line-height:16px;color:#000;">:00 Uhr</div>
<div class="b" style="left:506.3px;top:899.3px;width:249.3px;height:66.10000000000002px;border-top:1px solid #a8a8a8;border-left:1px solid #a8a8a8;border-bottom:1px solid #fff;border-right:1px solid #fff"></div>
<div class="t" style="left:513.2px;top:904.16px;font-size:12.8px;line-height:16px;color:#000;">Nettobetrag</div>
<div class="t" style="right:1176px;top:904.16px;font-size:12.8px;line-height:16px;color:#000;text-align:right;">15,00 €</div>
<div class="t" style="left:513.2px;top:919.16px;font-size:12.8px;line-height:16px;color:#000;">Mwst.</div>
<div class="t" style="right:1176px;top:919.16px;font-size:12.8px;line-height:16px;color:#000;text-align:right;">2,85 €</div>
<div class="b" style="left:513px;top:936px;width:231px;height:1px;background:#000"></div>
<div class="t" style="left:513.2px;top:941.16px;font-size:12.8px;line-height:16px;color:#000;">Endbetrag</div>
<div class="t" style="right:1176px;top:941.16px;font-size:12.8px;line-height:16px;color:#000;text-align:right;">17,85 €</div>
<div class="b" style="left:513px;top:959px;width:231px;height:1px;background:#000"></div>
<div class="b" style="left:38px;top:919px;width:32px;height:23px;background:#cccccc;border:1px solid #b8b8b8"></div>
<svg class="b" style="left:46.0px;top:922.5px" width="16.0" height="16.0" viewBox="0 0 16 16"><path d="M2.2 4.3h1.6v7.4H2.2zM12.8 3.8v8.4L4.6 8z" fill="#f4f4f4" stroke="#9a9a9a" stroke-width="0.9"/></svg>
<div class="b" style="left:72px;top:919px;width:32px;height:23px;background:#cccccc;border:1px solid #b8b8b8"></div>
<svg class="b" style="left:80.0px;top:922.5px" width="16.0" height="16.0" viewBox="0 0 16 16"><path d="M12.9 3.3v9.4L3.6 8z" fill="#f4f4f4" stroke="#9a9a9a" stroke-width="0.9"/></svg>
<div class="b" style="left:106px;top:919px;width:32px;height:23px;background:#e1e1e1;border:1px solid #adadad"></div>
<svg class="b" style="left:114.0px;top:922.5px" width="16.0" height="16.0" viewBox="0 0 16 16"><path d="M4.2 4.25L11.7 8L4.2 11.75z" fill="#000"/></svg>
<div class="b" style="left:140px;top:919px;width:32px;height:23px;background:#e1e1e1;border:1px solid #adadad"></div>
<svg class="b" style="left:148.0px;top:922.5px" width="16.0" height="16.0" viewBox="0 0 16 16"><path d="M3 4.3L10.5 8L3 11.7z" fill="#000"/><path d="M11.9 4.3v7.4" stroke="#000" stroke-width="2.6"/></svg>
<div class="b" style="left:174px;top:919px;width:32px;height:23px;background:#e1e1e1;border:1px solid #adadad"></div>
<svg class="b" style="left:182.0px;top:922.5px" width="16.0" height="16.0" viewBox="0 0 16 16"><path d="M8 3.3v9.4M3.3 8h9.4" stroke="#000" stroke-width="2.8"/></svg>
<div class="b" style="left:208px;top:919px;width:32px;height:23px;background:#e1e1e1;border:1px solid #adadad"></div>
<svg class="b" style="left:216.0px;top:922.5px" width="16.0" height="16.0" viewBox="0 0 16 16"><path d="M0.5 1.5h6l2 2v8.5h-8z" fill="#fff" stroke="#000" stroke-width="1"/><path d="M2 4.5h4M2 6.5h4M2 8.5h4" stroke="#000" stroke-width="0.9"/><path d="M6.5 5h6l2.5 2.5v7.5h-8.5z" fill="#fff" stroke="#000" stroke-width="1"/><path d="M8 8.5h5.5M8 10.5h5.5M8 12.5h5.5" stroke="#000" stroke-width="0.9"/></svg>
<div class="b" style="left:242px;top:919px;width:32px;height:23px;background:#e1e1e1;border:1px solid #adadad"></div>
<svg class="b" style="left:250.0px;top:922.5px" width="16.0" height="16.0" viewBox="0 0 16 16"><path d="M2.7 8h10.6" stroke="#000" stroke-width="3"/></svg>
<div class="b" style="left:276px;top:919px;width:32px;height:23px;background:#cccccc;border:1px solid #b8b8b8"></div>
<svg class="b" style="left:284.0px;top:922.5px" width="16.0" height="16.0" viewBox="0 0 16 16"><path d="M1.5 8.5L5 12L14 3.5" fill="none" stroke="#9a9a9a" stroke-width="3.2"/><path d="M1.5 8.5L5 12L14 3.5" fill="none" stroke="#f4f4f4" stroke-width="1.6"/></svg>
<div class="b" style="left:310px;top:919px;width:32px;height:23px;background:#cccccc;border:1px solid #b8b8b8"></div>
<svg class="b" style="left:318.0px;top:922.5px" width="16.0" height="16.0" viewBox="0 0 16 16"><path d="M2.6 2.6L13.4 13.4M13.4 2.6L2.6 13.4" stroke="#9a9a9a" stroke-width="3.4"/><path d="M2.6 2.6L13.4 13.4M13.4 2.6L2.6 13.4" stroke="#f4f4f4" stroke-width="1.8"/></svg>
<div class="b" style="left:344px;top:919px;width:32px;height:23px;background:#e1e1e1;border:1px solid #adadad"></div>
<svg class="b" style="left:352.0px;top:922.5px" width="16.0" height="16.0" viewBox="0 0 16 16"><path d="M11.6 6.8A4.2 4.2 0 1 0 8.2 12.6" fill="none" stroke="#000" stroke-width="2.2"/><path d="M8.6 4.2h5.2v5z" fill="#000"/></svg>
<div class="b" style="left:201px;top:978.5px;width:214px;height:22.0px;background:#e1e1e1;border:1px solid #adadad;overflow:hidden">
<div style="position:absolute;left:0;right:0;top:3.87px;height:16px;display:flex;justify-content:center;align-items:center;gap:2px;font-size:12.8px;line-height:16px;color:#000;white-space:pre">
<svg style="position:relative;top:-1.87px;flex:none" width="16.0" height="16.0" viewBox="0 0 16 16"><path d="M3.5 4.3v7.4" stroke="#000" stroke-width="1.8"/><path d="M11.5 4.3v7.4L5 8z" fill="#000"/></svg>
<span>Erste</span></div></div>
<div class="b" style="left:418px;top:978.5px;width:214px;height:22.0px;background:#e1e1e1;border:1px solid #adadad;overflow:hidden">
<div style="position:absolute;left:0;right:0;top:3.87px;height:16px;display:flex;justify-content:center;align-items:center;gap:2px;font-size:12.8px;line-height:16px;color:#000;white-space:pre">
<svg style="position:relative;top:-1.87px;flex:none" width="16.0" height="16.0" viewBox="0 0 16 16"><path d="M12 4.2v7.6L4.6 8z" fill="#000"/></svg>
<span>Vorherige</span></div></div>
<div class="b" style="left:635px;top:978.5px;width:214px;height:22.0px;background:#e1e1e1;border:1px solid #adadad;overflow:hidden">
<div style="position:absolute;left:0;right:0;top:3.87px;height:16px;display:flex;justify-content:center;align-items:center;gap:2px;font-size:12.8px;line-height:16px;color:#000;white-space:pre">
<svg style="position:relative;top:-1.87px;flex:none" width="16.0" height="16.0" viewBox="0 0 16 16"><path d="M4.2 4.25L11.7 8L4.2 11.75z" fill="#000"/></svg>
<span>Nächste</span></div></div>
<div class="b" style="left:806px;top:312px;width:1114px;height:728px;overflow:hidden"><div class="b" style="left:0;top:0;width:1920px;height:1040px;transform:scale(0.7);transform-origin:0 0;background:#EEE7BE;-webkit-text-stroke:0.18px currentColor">
<div class="b" style="left:0px;top:0px;width:1920px;height:23px;background:#213753"></div>
<div class="t" style="left:2px;top:3px;font-size:8px;line-height:8px;color:#5aa8f0;font-weight:bold">ero</div>
<div class="t" style="left:5px;top:9px;font-size:8px;line-height:8px;color:#e8e800;font-weight:bold">PPS</div>
<div class="t" style="left:23.5px;top:3.98px;font-size:11.6px;line-height:16px;color:#fff;">eroPPS - Produktionsplanungs- und Steuerungssystem /</div>
<div class="b" style="left:317px;top:1px;width:179px;height:21px;background:repeating-linear-gradient(165deg,#2f4a6a 0 4px,#6a7f9a 4px 6px,#3d5878 6px 10px,#5a7090 10px 12px);filter:blur(1.5px)"></div>
<div class="t" style="left:497px;top:3.70px;font-size:12.4px;line-height:16px;color:#fff;">[Artikelverwaltung]</div>
<div class="bar" style="top:23px;height:53px"></div>
<div class="bar" style="top:76px;height:53px"></div>
<div class="tbtn" style="left:10px;top:33px;width:100px;height:34px;">Kundenstamm-<br>verwaltung</div>
<div class="tbtn sel" style="left:120px;top:33px;width:100px;height:34px;">Artikel-<br>verwaltung</div>
<div class="tbtn" style="left:230px;top:33px;width:100px;height:34px;">Fahrprogramm-<br>verwaltung</div>
<div class="tbtn" style="left:340px;top:33px;width:100px;height:34px;">Gestell-<br>verwaltung</div>
<div class="tbtn" style="left:450px;top:33px;width:100px;height:34px;">Auftrags-<br>verwaltung</div>
<div class="tbtn" style="left:560px;top:33px;width:100px;height:34px;">angearbeitete<br>Aufträge</div>
<div class="tbtn" style="left:670px;top:33px;width:100px;height:34px;padding-top:1.5px">Produktionsplan</div>
<div class="tbtn" style="left:780px;top:33px;width:100px;height:34px;padding-top:1.5px">Mahnwesen</div>
<div class="tbtn" style="left:890px;top:33px;width:100px;height:34px;">Bestell-<br>verwaltung</div>
<div class="tbtn" style="left:1000px;top:33px;width:100px;height:34px;">Lieferanten-<br>verwaltung</div>
<div class="tbtn" style="left:1110px;top:33px;width:100px;height:34px;">Bestellartikel-<br>verwaltung</div>
<div class="tbtn" style="left:1330px;top:33px;width:100px;height:34px;padding-top:1.5px">Format</div>
<div class="tbtn" style="left:10px;top:86px;width:100px;height:34px;padding-top:1.5px">Neuer Artikel</div>
<div class="tbtn" style="left:120px;top:86px;width:100px;height:34px;padding-top:1.5px">Drucken</div>
<div class="tbtn" style="left:230px;top:86px;width:100px;height:34px;padding-top:1.5px">Berechnungen</div>
<div class="tbtn" style="left:450px;top:86px;width:100px;height:34px;padding-top:1.5px">Artikel löschen</div>
<div class="tbtn" style="left:560px;top:86px;width:100px;height:34px;">Artikel<br>umbenennen</div>
<div class="tbtn" style="left:670px;top:86px;width:100px;height:34px;">In Bestellartikel<br>kopieren</div>
<div class="b" style="left:2px;top:134px;width:65px;height:23px;border-top:2px solid #6a6a6a;border-left:2px solid #6a6a6a;border-bottom:1px solid #fff;border-right:1px solid #fff"></div>
<div class="t" style="left:22px;top:139.00px;font-size:13px;line-height:16px;color:#000;">Kartei</div>
<div class="b" style="left:71px;top:134px;width:72px;height:23px;border-top:1px solid #fff;border-left:1px solid #fff;border-bottom:2px solid #6a6a6a;border-right:2px solid #6a6a6a"></div>
<div class="t" style="left:94px;top:140.00px;font-size:13px;line-height:16px;color:#000;">Liste</div>
<div class="cb" style="left:191px;top:138.5px;width:13px;height:13px"></div>
<svg class="b" style="left:191px;top:138.5px" width="13" height="13" viewBox="0 0 13 13"><path d="M2.3 6.3L5 9.3L10.7 3.2" fill="none" stroke="#3a3a3a" stroke-width="1.05"/></svg>
<div class="t" style="left:208px;top:136.00px;font-size:13px;line-height:16px;color:#000;">Aktive Artikel</div>
<div class="cb" style="left:329px;top:138.5px;width:13px;height:13px"></div>
<div class="t" style="left:345.6px;top:136.00px;font-size:13px;line-height:16px;color:#000;">Angebotsartikel</div>
<div class="t" style="left:12px;top:188.50px;font-size:13px;line-height:16px;color:#000;">Artikelnr.</div>
<div class="t" style="left:12px;top:218.50px;font-size:13px;line-height:16px;color:#000;">Bezeichnung</div>
<div class="t" style="left:12px;top:248.50px;font-size:13px;line-height:16px;color:#000;">Kunde</div>
<div class="t" style="left:12px;top:278.50px;font-size:13px;line-height:16px;color:#000;">Gruppe</div>
<div class="t" style="left:12px;top:308.50px;font-size:13px;line-height:16px;color:#000;">Zeichnungsnr.</div>
<div class="t" style="left:12px;top:338.50px;font-size:13px;line-height:16px;color:#000;">Interne Einheit</div>
<div class="t" style="left:12px;top:368.50px;font-size:13px;line-height:16px;color:#000;">Status</div>
<div class="b" style="left:118px;top:183px;width:273px;height:27px;background:#fff;box-shadow:0 0 3px 2px #f4f1e2;filter:blur(1.2px)"></div>
<svg class="b" style="left:118px;top:185px;opacity:0.8;filter:blur(1.6px)" width="78" height="21" viewBox="0 0 78 21"><path d="M9.4 1 L78.0 1 L68.6 20.0 L0 20.0Z" fill="rgba(190,190,195,0.35)"/><path d="M0.5 5.5 L9.7 2.9" stroke="#77737a" stroke-width="1.07" stroke-opacity="0.71"/><path d="M0.5 10.1 L20.8 4.4" stroke="#77737a" stroke-width="1.49" stroke-opacity="0.22"/><path d="M0.5 9.7 L21.0 4.0" stroke="#77737a" stroke-width="0.71" stroke-opacity="0.29"/><path d="M0.5 5.6 L7.3 3.7" stroke="#77737a" stroke-width="0.72" stroke-opacity="0.33"/><path d="M0.5 9.2 L33.9 -0.1" stroke="#77737a" stroke-width="1.21" stroke-opacity="0.49"/><path d="M0.5 11.6 L21.7 5.7" stroke="#77737a" stroke-width="1.50" stroke-opacity="0.35"/><path d="M0.5 13.9 L34.3 4.5" stroke="#77737a" stroke-width="0.88" stroke-opacity="0.37"/><path d="M0.5 8.3 L38.2 -2.2" stroke="#77737a" stroke-width="1.38" stroke-opacity="0.42"/><path d="M0.5 15.9 L43.2 3.9" stroke="#77737a" stroke-width="0.87" stroke-opacity="0.20"/><path d="M0.5 12.9 L51.2 -1.3" stroke="#77737a" stroke-width="0.76" stroke-opacity="0.42"/><path d="M0.5 16.0 L27.1 8.6" stroke="#77737a" stroke-width="0.97" stroke-opacity="0.25"/><path d="M0.5 16.7 L24.5 10.0" stroke="#77737a" stroke-width="0.78" stroke-opacity="0.34"/><path d="M0.5 17.4 L28.1 9.7" stroke="#77737a" stroke-width="1.06" stroke-opacity="0.51"/><path d="M0.5 17.3 L27.9 9.7" stroke="#77737a" stroke-width="0.79" stroke-opacity="0.55"/><path d="M0.5 13.8 L35.1 4.1" stroke="#77737a" stroke-width="1.34" stroke-opacity="0.73"/><path d="M0.6 19.6 L34.7 10.0" stroke="#77737a" stroke-width="1.38" stroke-opacity="0.42"/><path d="M3.1 13.4 L66.4 -4.3" stroke="#77737a" stroke-width="0.91" stroke-opacity="0.32"/><path d="M5.8 15.2 L43.2 4.7" stroke="#77737a" stroke-width="0.77" stroke-opacity="0.24"/><path d="M8.2 14.5 L57.0 0.9" stroke="#77737a" stroke-width="1.06" stroke-opacity="0.40"/><path d="M11.3 16.4 L59.1 3.0" stroke="#77737a" stroke-width="0.85" stroke-opacity="0.68"/><path d="M12.8 19.8 L69.7 3.8" stroke="#77737a" stroke-width="0.85" stroke-opacity="0.34"/><path d="M15.5 20.0 L49.1 10.6" stroke="#77737a" stroke-width="1.41" stroke-opacity="0.72"/><path d="M17.9 15.9 L48.0 7.5" stroke="#77737a" stroke-width="1.47" stroke-opacity="0.22"/><path d="M19.6 18.2 L55.4 8.1" stroke="#77737a" stroke-width="1.18" stroke-opacity="0.65"/><path d="M21.3 14.0 L74.6 -0.9" stroke="#77737a" stroke-width="0.88" stroke-opacity="0.24"/><path d="M23.7 19.3 L72.9 5.5" stroke="#77737a" stroke-width="1.43" stroke-opacity="0.35"/><path d="M25.3 12.7 L61.6 2.6" stroke="#77737a" stroke-width="0.75" stroke-opacity="0.45"/><path d="M26.8 15.5 L74.5 2.2" stroke="#77737a" stroke-width="0.99" stroke-opacity="0.27"/><path d="M29.8 20.3 L77.5 7.0" stroke="#77737a" stroke-width="1.17" stroke-opacity="0.58"/><path d="M31.3 12.9 L58.2 5.3" stroke="#77737a" stroke-width="1.26" stroke-opacity="0.70"/><path d="M34.4 12.8 L77.5 0.7" stroke="#77737a" stroke-width="1.28" stroke-opacity="0.47"/><path d="M36.2 20.5 L65.3 12.4" stroke="#77737a" stroke-width="1.29" stroke-opacity="0.50"/><path d="M39.2 18.4 L77.5 7.7" stroke="#77737a" stroke-width="1.43" stroke-opacity="0.64"/><path d="M41.2 18.0 L77.5 7.8" stroke="#77737a" stroke-width="1.03" stroke-opacity="0.68"/><path d="M43.9 19.4 L77.5 10.0" stroke="#77737a" stroke-width="1.01" stroke-opacity="0.54"/><path d="M46.3 17.4 L75.6 9.2" stroke="#77737a" stroke-width="1.49" stroke-opacity="0.55"/><path d="M49.3 18.4 L77.5 10.4" stroke="#77737a" stroke-width="1.16" stroke-opacity="0.60"/><path d="M51.3 19.2 L77.5 11.9" stroke="#77737a" stroke-width="0.72" stroke-opacity="0.61"/><path d="M53.7 16.4 L77.5 9.7" stroke="#77737a" stroke-width="1.10" stroke-opacity="0.58"/><path d="M56.2 19.9 L77.5 13.9" stroke="#77737a" stroke-width="0.94" stroke-opacity="0.21"/><path d="M58.7 14.2 L77.5 8.9" stroke="#77737a" stroke-width="1.23" stroke-opacity="0.70"/><path d="M60.8 19.6 L77.5 15.0" stroke="#77737a" stroke-width="0.86" stroke-opacity="0.57"/><path d="M62.9 19.0 L77.5 14.9" stroke="#77737a" stroke-width="1.01" stroke-opacity="0.68"/><path d="M65.2 15.1 L77.5 11.7" stroke="#77737a" stroke-width="1.37" stroke-opacity="0.47"/><path d="M68.1 18.2 L77.5 15.6" stroke="#77737a" stroke-width="0.84" stroke-opacity="0.35"/><path d="M70.2 14.8 L77.5 12.7" stroke="#77737a" stroke-width="1.20" stroke-opacity="0.43"/><path d="M72.4 15.1 L77.5 13.7" stroke="#77737a" stroke-width="1.06" stroke-opacity="0.74"/><path d="M73.8 12.8 L77.5 11.8" stroke="#77737a" stroke-width="1.27" stroke-opacity="0.22"/></svg>
<div class="b" style="left:391px;top:215px;width:331px;height:24px;background:#fff;border:1px solid #7a7a7a;"></div>
<div class="b" style="left:118px;top:214px;width:276px;height:26px;background:#fff;box-shadow:0 0 3px 2px #f0ede0;filter:blur(1.2px)"></div>
<svg class="b" style="left:118px;top:216px;opacity:0.75;filter:blur(1.6px)" width="164" height="22" viewBox="0 0 164 22"><path d="M10.6 1 L164.0 1 L153.4 21.0 L0 21.0Z" fill="rgba(190,190,195,0.3)"/><path d="M0.5 6.0 L13.1 2.2" stroke="#77737a" stroke-width="0.81" stroke-opacity="0.57"/><path d="M0.5 8.2 L13.3 4.4" stroke="#77737a" stroke-width="0.82" stroke-opacity="0.56"/><path d="M0.5 5.2 L28.1 -3.1" stroke="#77737a" stroke-width="1.36" stroke-opacity="0.23"/><path d="M0.5 9.9 L8.6 7.5" stroke="#77737a" stroke-width="1.37" stroke-opacity="0.42"/><path d="M0.5 5.1 L31.0 -4.1" stroke="#77737a" stroke-width="0.77" stroke-opacity="0.48"/><path d="M0.5 13.4 L4.8 12.1" stroke="#77737a" stroke-width="0.81" stroke-opacity="0.43"/><path d="M0.5 11.2 L8.5 8.9" stroke="#77737a" stroke-width="0.74" stroke-opacity="0.58"/><path d="M0.5 13.3 L18.7 7.9" stroke="#77737a" stroke-width="1.18" stroke-opacity="0.43"/><path d="M0.5 10.4 L7.3 8.4" stroke="#77737a" stroke-width="1.47" stroke-opacity="0.60"/><path d="M0.5 13.7 L22.4 7.1" stroke="#77737a" stroke-width="1.25" stroke-opacity="0.40"/><path d="M0.5 9.9 L20.5 3.9" stroke="#77737a" stroke-width="1.11" stroke-opacity="0.40"/><path d="M0.5 13.9 L15.7 9.3" stroke="#77737a" stroke-width="1.04" stroke-opacity="0.65"/><path d="M0.5 12.3 L32.6 2.6" stroke="#77737a" stroke-width="1.32" stroke-opacity="0.41"/><path d="M0.5 15.4 L24.9 8.1" stroke="#77737a" stroke-width="0.73" stroke-opacity="0.58"/><path d="M0.5 14.2 L43.4 1.4" stroke="#77737a" stroke-width="1.07" stroke-opacity="0.23"/><path d="M0.5 14.2 L39.2 2.6" stroke="#77737a" stroke-width="1.08" stroke-opacity="0.73"/><path d="M0.5 14.2 L58.7 -3.3" stroke="#77737a" stroke-width="0.85" stroke-opacity="0.40"/><path d="M1.8 20.8 L27.8 13.0" stroke="#77737a" stroke-width="1.32" stroke-opacity="0.35"/><path d="M3.7 15.2 L29.7 7.4" stroke="#77737a" stroke-width="1.20" stroke-opacity="0.22"/><path d="M6.9 21.5 L51.0 8.2" stroke="#77737a" stroke-width="0.96" stroke-opacity="0.21"/><path d="M9.7 20.1 L58.8 5.4" stroke="#77737a" stroke-width="1.12" stroke-opacity="0.33"/><path d="M11.8 18.4 L47.1 7.8" stroke="#77737a" stroke-width="1.42" stroke-opacity="0.72"/><path d="M13.3 15.6 L71.0 -1.7" stroke="#77737a" stroke-width="1.46" stroke-opacity="0.35"/><path d="M15.6 19.0 L67.1 3.5" stroke="#77737a" stroke-width="0.93" stroke-opacity="0.32"/><path d="M17.3 18.9 L68.4 3.5" stroke="#77737a" stroke-width="1.41" stroke-opacity="0.27"/><path d="M19.3 15.2 L61.0 2.7" stroke="#77737a" stroke-width="1.15" stroke-opacity="0.74"/><path d="M21.8 20.8 L82.7 2.6" stroke="#77737a" stroke-width="1.03" stroke-opacity="0.62"/><path d="M24.2 20.7 L78.8 4.3" stroke="#77737a" stroke-width="0.98" stroke-opacity="0.52"/><path d="M26.1 19.3 L72.4 5.4" stroke="#77737a" stroke-width="1.27" stroke-opacity="0.21"/><path d="M29.1 19.8 L87.7 2.2" stroke="#77737a" stroke-width="1.13" stroke-opacity="0.70"/><path d="M31.9 16.3 L61.1 7.6" stroke="#77737a" stroke-width="0.95" stroke-opacity="0.39"/><path d="M34.9 18.9 L80.5 5.3" stroke="#77737a" stroke-width="0.80" stroke-opacity="0.54"/><path d="M37.2 19.0 L77.3 7.0" stroke="#77737a" stroke-width="1.03" stroke-opacity="0.34"/><path d="M39.1 18.9 L69.9 9.6" stroke="#77737a" stroke-width="0.95" stroke-opacity="0.25"/><path d="M41.7 19.5 L91.5 4.6" stroke="#77737a" stroke-width="0.99" stroke-opacity="0.71"/><path d="M42.9 17.2 L84.8 4.7" stroke="#77737a" stroke-width="1.23" stroke-opacity="0.30"/><path d="M44.8 15.2 L82.5 3.9" stroke="#77737a" stroke-width="0.71" stroke-opacity="0.72"/><path d="M46.7 15.5 L79.8 5.6" stroke="#77737a" stroke-width="0.88" stroke-opacity="0.44"/><path d="M49.8 17.4 L101.0 2.0" stroke="#77737a" stroke-width="1.07" stroke-opacity="0.29"/><path d="M52.2 20.2 L87.0 9.7" stroke="#77737a" stroke-width="1.38" stroke-opacity="0.45"/><path d="M55.0 15.1 L100.4 1.5" stroke="#77737a" stroke-width="1.02" stroke-opacity="0.62"/><path d="M57.6 18.7 L118.9 0.3" stroke="#77737a" stroke-width="1.24" stroke-opacity="0.50"/><path d="M59.5 19.3 L97.0 8.0" stroke="#77737a" stroke-width="0.99" stroke-opacity="0.47"/><path d="M61.3 14.3 L95.2 4.1" stroke="#77737a" stroke-width="0.90" stroke-opacity="0.50"/><path d="M62.6 19.9 L98.7 9.0" stroke="#77737a" stroke-width="1.18" stroke-opacity="0.71"/><path d="M64.6 20.4 L123.1 2.9" stroke="#77737a" stroke-width="0.80" stroke-opacity="0.38"/><path d="M67.0 20.2 L115.0 5.8" stroke="#77737a" stroke-width="1.03" stroke-opacity="0.63"/><path d="M69.5 15.4 L110.1 3.2" stroke="#77737a" stroke-width="1.01" stroke-opacity="0.41"/><path d="M71.5 19.9 L103.4 10.3" stroke="#77737a" stroke-width="0.90" stroke-opacity="0.31"/><path d="M74.6 17.5 L102.2 9.3" stroke="#77737a" stroke-width="1.40" stroke-opacity="0.66"/><path d="M77.5 16.2 L130.1 0.4" stroke="#77737a" stroke-width="0.81" stroke-opacity="0.37"/><path d="M80.4 20.1 L113.8 10.1" stroke="#77737a" stroke-width="0.72" stroke-opacity="0.68"/><path d="M82.2 13.3 L114.1 3.7" stroke="#77737a" stroke-width="1.27" stroke-opacity="0.29"/><path d="M84.0 14.8 L116.4 5.1" stroke="#77737a" stroke-width="1.39" stroke-opacity="0.37"/><path d="M86.4 14.0 L137.2 -1.2" stroke="#77737a" stroke-width="1.06" stroke-opacity="0.49"/><path d="M88.7 18.6 L143.7 2.1" stroke="#77737a" stroke-width="1.21" stroke-opacity="0.48"/><path d="M90.8 18.5 L130.7 6.5" stroke="#77737a" stroke-width="1.11" stroke-opacity="0.43"/><path d="M93.4 15.5 L153.0 -2.4" stroke="#77737a" stroke-width="1.38" stroke-opacity="0.47"/><path d="M96.0 21.1 L146.7 5.9" stroke="#77737a" stroke-width="1.02" stroke-opacity="0.43"/><path d="M98.4 19.5 L154.9 2.5" stroke="#77737a" stroke-width="0.75" stroke-opacity="0.27"/><path d="M99.8 13.9 L127.6 5.6" stroke="#77737a" stroke-width="0.90" stroke-opacity="0.20"/><path d="M101.3 18.9 L149.5 4.4" stroke="#77737a" stroke-width="1.47" stroke-opacity="0.73"/><path d="M104.0 21.1 L130.7 13.1" stroke="#77737a" stroke-width="1.44" stroke-opacity="0.33"/><path d="M106.1 14.9 L159.5 -1.1" stroke="#77737a" stroke-width="1.13" stroke-opacity="0.43"/><path d="M107.9 15.2 L136.8 6.5" stroke="#77737a" stroke-width="1.46" stroke-opacity="0.53"/><path d="M111.1 19.6 L163.5 3.8" stroke="#77737a" stroke-width="0.94" stroke-opacity="0.40"/><path d="M114.2 18.2 L163.5 3.4" stroke="#77737a" stroke-width="0.88" stroke-opacity="0.21"/><path d="M116.3 19.3 L163.5 5.1" stroke="#77737a" stroke-width="0.97" stroke-opacity="0.62"/><path d="M118.3 20.4 L163.5 6.8" stroke="#77737a" stroke-width="0.86" stroke-opacity="0.47"/><path d="M120.7 17.6 L159.7 6.0" stroke="#77737a" stroke-width="1.01" stroke-opacity="0.33"/><path d="M123.2 14.3 L163.5 2.2" stroke="#77737a" stroke-width="1.30" stroke-opacity="0.72"/><path d="M124.9 16.7 L154.3 7.8" stroke="#77737a" stroke-width="1.21" stroke-opacity="0.61"/><path d="M126.4 17.7 L163.5 6.6" stroke="#77737a" stroke-width="1.00" stroke-opacity="0.52"/><path d="M128.2 16.1 L163.5 5.6" stroke="#77737a" stroke-width="1.10" stroke-opacity="0.38"/><path d="M130.4 14.6 L163.5 4.7" stroke="#77737a" stroke-width="0.96" stroke-opacity="0.31"/><path d="M132.3 16.1 L163.5 6.7" stroke="#77737a" stroke-width="0.97" stroke-opacity="0.36"/><path d="M134.8 16.5 L163.5 7.9" stroke="#77737a" stroke-width="0.76" stroke-opacity="0.56"/><path d="M137.4 14.0 L163.5 6.2" stroke="#77737a" stroke-width="1.49" stroke-opacity="0.65"/><path d="M139.9 14.6 L163.5 7.5" stroke="#77737a" stroke-width="1.37" stroke-opacity="0.36"/><path d="M141.6 14.8 L163.5 8.2" stroke="#77737a" stroke-width="1.17" stroke-opacity="0.55"/><path d="M143.7 21.2 L163.5 15.2" stroke="#77737a" stroke-width="1.01" stroke-opacity="0.72"/><path d="M145.9 16.2 L163.5 10.9" stroke="#77737a" stroke-width="0.89" stroke-opacity="0.61"/><path d="M148.1 19.2 L163.5 14.6" stroke="#77737a" stroke-width="1.19" stroke-opacity="0.56"/><path d="M150.7 16.1 L163.5 12.3" stroke="#77737a" stroke-width="1.41" stroke-opacity="0.21"/><path d="M153.5 16.4 L163.5 13.4" stroke="#77737a" stroke-width="0.82" stroke-opacity="0.70"/><path d="M156.4 16.7 L163.5 14.6" stroke="#77737a" stroke-width="1.03" stroke-opacity="0.34"/><path d="M157.7 13.6 L163.5 11.9" stroke="#77737a" stroke-width="0.83" stroke-opacity="0.37"/><path d="M159.1 20.1 L163.5 18.8" stroke="#77737a" stroke-width="1.18" stroke-opacity="0.47"/></svg>
<div class="b" style="left:118px;top:245px;width:69px;height:22px;background:linear-gradient(90deg,#f29c3e,#fdab4f 80%,rgba(253,171,79,0));filter:blur(1.3px)"></div>
<svg class="b" style="left:118px;top:246px;opacity:0.7;filter:blur(1.5px)" width="64" height="20" viewBox="0 0 64 20"><path d="M9.6 1 L64.0 1 L54.4 19.0 L0 19.0Z" fill="rgba(0,0,0,0)"/><path d="M0.5 3.8 L12.8 0.1" stroke="#8a4a10" stroke-width="1.38" stroke-opacity="0.58"/><path d="M0.5 4.1 L11.9 0.7" stroke="#8a4a10" stroke-width="0.94" stroke-opacity="0.32"/><path d="M0.5 10.0 L16.6 5.2" stroke="#8a4a10" stroke-width="0.92" stroke-opacity="0.21"/><path d="M0.5 10.7 L24.8 3.4" stroke="#8a4a10" stroke-width="1.36" stroke-opacity="0.64"/><path d="M0.5 12.1 L26.9 4.2" stroke="#8a4a10" stroke-width="1.38" stroke-opacity="0.34"/><path d="M0.5 11.3 L21.5 5.0" stroke="#8a4a10" stroke-width="0.99" stroke-opacity="0.44"/><path d="M0.5 8.6 L8.6 6.2" stroke="#8a4a10" stroke-width="1.34" stroke-opacity="0.65"/><path d="M0.5 12.4 L26.4 4.6" stroke="#8a4a10" stroke-width="0.81" stroke-opacity="0.61"/><path d="M0.5 11.3 L16.3 6.6" stroke="#8a4a10" stroke-width="1.12" stroke-opacity="0.31"/><path d="M0.5 11.9 L32.3 2.4" stroke="#8a4a10" stroke-width="0.80" stroke-opacity="0.42"/><path d="M0.5 10.9 L22.2 4.4" stroke="#8a4a10" stroke-width="0.99" stroke-opacity="0.31"/><path d="M0.5 14.4 L47.5 0.3" stroke="#8a4a10" stroke-width="1.28" stroke-opacity="0.41"/><path d="M0.5 10.8 L23.5 3.9" stroke="#8a4a10" stroke-width="1.37" stroke-opacity="0.64"/><path d="M0.5 12.4 L35.0 2.1" stroke="#8a4a10" stroke-width="1.41" stroke-opacity="0.68"/><path d="M0.7 13.5 L52.5 -2.0" stroke="#8a4a10" stroke-width="1.27" stroke-opacity="0.41"/><path d="M2.2 19.3 L45.6 6.2" stroke="#8a4a10" stroke-width="0.87" stroke-opacity="0.60"/><path d="M4.6 16.4 L47.6 3.4" stroke="#8a4a10" stroke-width="1.28" stroke-opacity="0.40"/><path d="M6.5 14.2 L35.3 5.6" stroke="#8a4a10" stroke-width="0.79" stroke-opacity="0.58"/><path d="M8.1 12.5 L52.9 -0.9" stroke="#8a4a10" stroke-width="1.13" stroke-opacity="0.51"/><path d="M9.4 15.3 L44.2 4.9" stroke="#8a4a10" stroke-width="0.70" stroke-opacity="0.25"/><path d="M12.6 12.9 L46.0 2.9" stroke="#8a4a10" stroke-width="1.18" stroke-opacity="0.35"/><path d="M14.0 15.5 L49.5 4.9" stroke="#8a4a10" stroke-width="0.70" stroke-opacity="0.66"/><path d="M15.8 15.7 L63.5 1.4" stroke="#8a4a10" stroke-width="1.08" stroke-opacity="0.48"/><path d="M18.4 14.2 L42.8 6.9" stroke="#8a4a10" stroke-width="1.43" stroke-opacity="0.48"/><path d="M21.1 13.9 L63.5 1.2" stroke="#8a4a10" stroke-width="0.91" stroke-opacity="0.67"/><path d="M23.4 14.7 L54.9 5.2" stroke="#8a4a10" stroke-width="0.86" stroke-opacity="0.36"/><path d="M25.3 12.3 L61.9 1.3" stroke="#8a4a10" stroke-width="1.31" stroke-opacity="0.25"/><path d="M27.7 12.0 L63.5 1.3" stroke="#8a4a10" stroke-width="1.08" stroke-opacity="0.30"/><path d="M30.0 14.5 L63.0 4.6" stroke="#8a4a10" stroke-width="0.81" stroke-opacity="0.44"/><path d="M33.0 12.8 L63.5 3.7" stroke="#8a4a10" stroke-width="0.94" stroke-opacity="0.32"/><path d="M34.9 12.3 L62.6 4.0" stroke="#8a4a10" stroke-width="1.05" stroke-opacity="0.40"/><path d="M37.9 19.4 L62.7 12.0" stroke="#8a4a10" stroke-width="0.80" stroke-opacity="0.49"/><path d="M40.7 14.4 L63.5 7.6" stroke="#8a4a10" stroke-width="0.80" stroke-opacity="0.50"/><path d="M41.9 13.9 L63.5 7.4" stroke="#8a4a10" stroke-width="1.08" stroke-opacity="0.28"/><path d="M43.9 14.6 L63.5 8.7" stroke="#8a4a10" stroke-width="1.27" stroke-opacity="0.32"/><path d="M46.4 19.0 L63.5 13.9" stroke="#8a4a10" stroke-width="1.05" stroke-opacity="0.71"/><path d="M48.7 16.7 L63.5 12.2" stroke="#8a4a10" stroke-width="0.79" stroke-opacity="0.69"/><path d="M50.2 16.0 L63.5 12.0" stroke="#8a4a10" stroke-width="0.94" stroke-opacity="0.49"/><path d="M53.3 14.2 L63.5 11.2" stroke="#8a4a10" stroke-width="0.72" stroke-opacity="0.23"/><path d="M56.0 12.8 L63.5 10.5" stroke="#8a4a10" stroke-width="1.50" stroke-opacity="0.68"/><path d="M58.8 15.2 L63.5 13.8" stroke="#8a4a10" stroke-width="1.27" stroke-opacity="0.66"/><path d="M60.6 17.7 L63.5 16.8" stroke="#8a4a10" stroke-width="1.50" stroke-opacity="0.37"/></svg>
<div class="b" style="left:120px;top:267.5px;width:61px;height:1.5px;background:#9a9a9a"></div>
<svg class="b" style="left:194px;top:246px;opacity:0.8;filter:blur(1.6px)" width="190" height="22" viewBox="0 0 190 22"><path d="M10.6 1 L190.0 1 L179.4 21.0 L0 21.0Z" fill="rgba(170,165,140,0.25)"/><path d="M0.5 2.9 L14.8 -1.3" stroke="#5e5a48" stroke-width="1.45" stroke-opacity="0.56"/><path d="M0.5 4.7 L17.7 -0.5" stroke="#5e5a48" stroke-width="0.94" stroke-opacity="0.56"/><path d="M0.5 6.6 L21.8 0.2" stroke="#5e5a48" stroke-width="0.88" stroke-opacity="0.27"/><path d="M0.5 7.2 L5.9 5.6" stroke="#5e5a48" stroke-width="1.21" stroke-opacity="0.64"/><path d="M0.5 9.3 L22.2 2.8" stroke="#5e5a48" stroke-width="1.22" stroke-opacity="0.29"/><path d="M0.5 7.9 L2.3 7.4" stroke="#5e5a48" stroke-width="1.48" stroke-opacity="0.31"/><path d="M0.5 14.0 L17.4 8.9" stroke="#5e5a48" stroke-width="1.40" stroke-opacity="0.53"/><path d="M0.5 7.4 L25.4 -0.1" stroke="#5e5a48" stroke-width="0.84" stroke-opacity="0.55"/><path d="M0.5 14.2 L24.1 7.1" stroke="#5e5a48" stroke-width="1.06" stroke-opacity="0.31"/><path d="M0.5 14.0 L25.2 6.6" stroke="#5e5a48" stroke-width="1.35" stroke-opacity="0.26"/><path d="M0.5 10.2 L9.3 7.5" stroke="#5e5a48" stroke-width="0.79" stroke-opacity="0.61"/><path d="M0.5 9.3 L28.1 1.0" stroke="#5e5a48" stroke-width="1.13" stroke-opacity="0.58"/><path d="M0.5 13.2 L28.6 4.7" stroke="#5e5a48" stroke-width="0.78" stroke-opacity="0.53"/><path d="M0.5 11.7 L46.5 -2.1" stroke="#5e5a48" stroke-width="0.75" stroke-opacity="0.72"/><path d="M0.5 16.1 L37.2 5.1" stroke="#5e5a48" stroke-width="1.26" stroke-opacity="0.21"/><path d="M0.5 14.7 L32.1 5.2" stroke="#5e5a48" stroke-width="1.45" stroke-opacity="0.51"/><path d="M0.5 14.2 L28.0 5.9" stroke="#5e5a48" stroke-width="1.08" stroke-opacity="0.55"/><path d="M0.5 15.4 L24.0 8.3" stroke="#5e5a48" stroke-width="1.49" stroke-opacity="0.37"/><path d="M0.5 15.2 L59.5 -2.5" stroke="#5e5a48" stroke-width="0.90" stroke-opacity="0.40"/><path d="M0.7 14.4 L33.7 4.5" stroke="#5e5a48" stroke-width="1.40" stroke-opacity="0.33"/><path d="M2.5 15.3 L50.3 0.9" stroke="#5e5a48" stroke-width="0.93" stroke-opacity="0.70"/><path d="M5.2 16.3 L51.4 2.4" stroke="#5e5a48" stroke-width="1.45" stroke-opacity="0.53"/><path d="M7.9 17.4 L64.4 0.5" stroke="#5e5a48" stroke-width="1.01" stroke-opacity="0.40"/><path d="M11.0 17.7 L65.1 1.5" stroke="#5e5a48" stroke-width="1.43" stroke-opacity="0.37"/><path d="M13.5 15.3 L73.4 -2.7" stroke="#5e5a48" stroke-width="0.97" stroke-opacity="0.46"/><path d="M15.2 14.1 L48.2 4.1" stroke="#5e5a48" stroke-width="0.81" stroke-opacity="0.58"/><path d="M16.9 16.9 L62.5 3.2" stroke="#5e5a48" stroke-width="1.33" stroke-opacity="0.41"/><path d="M18.6 16.3 L59.9 3.9" stroke="#5e5a48" stroke-width="0.88" stroke-opacity="0.27"/><path d="M20.1 19.2 L51.1 9.9" stroke="#5e5a48" stroke-width="0.88" stroke-opacity="0.57"/><path d="M22.6 18.6 L61.2 7.1" stroke="#5e5a48" stroke-width="1.23" stroke-opacity="0.71"/><path d="M24.9 13.6 L65.5 1.4" stroke="#5e5a48" stroke-width="1.08" stroke-opacity="0.35"/><path d="M28.0 20.4 L55.9 12.0" stroke="#5e5a48" stroke-width="1.45" stroke-opacity="0.57"/><path d="M30.3 14.0 L87.7 -3.2" stroke="#5e5a48" stroke-width="1.48" stroke-opacity="0.43"/><path d="M33.2 20.1 L93.0 2.1" stroke="#5e5a48" stroke-width="1.34" stroke-opacity="0.24"/><path d="M35.0 14.3 L74.6 2.5" stroke="#5e5a48" stroke-width="0.70" stroke-opacity="0.52"/><path d="M37.1 19.7 L81.0 6.6" stroke="#5e5a48" stroke-width="0.94" stroke-opacity="0.49"/><path d="M40.3 15.3 L90.9 0.1" stroke="#5e5a48" stroke-width="0.70" stroke-opacity="0.56"/><path d="M43.5 15.2 L105.4 -3.4" stroke="#5e5a48" stroke-width="1.42" stroke-opacity="0.71"/><path d="M46.4 16.5 L88.4 3.9" stroke="#5e5a48" stroke-width="1.45" stroke-opacity="0.39"/><path d="M47.6 14.3 L108.4 -3.9" stroke="#5e5a48" stroke-width="1.26" stroke-opacity="0.64"/><path d="M50.8 17.5 L107.1 0.7" stroke="#5e5a48" stroke-width="1.42" stroke-opacity="0.44"/><path d="M52.1 16.8 L98.9 2.8" stroke="#5e5a48" stroke-width="1.04" stroke-opacity="0.64"/><path d="M54.7 21.2 L95.7 8.9" stroke="#5e5a48" stroke-width="0.72" stroke-opacity="0.31"/><path d="M57.6 17.2 L97.5 5.2" stroke="#5e5a48" stroke-width="0.80" stroke-opacity="0.49"/><path d="M59.2 15.2 L94.3 4.7" stroke="#5e5a48" stroke-width="0.90" stroke-opacity="0.67"/><path d="M60.6 20.4 L106.8 6.6" stroke="#5e5a48" stroke-width="1.24" stroke-opacity="0.22"/><path d="M63.2 18.6 L117.3 2.4" stroke="#5e5a48" stroke-width="0.88" stroke-opacity="0.43"/><path d="M65.9 18.4 L117.3 2.9" stroke="#5e5a48" stroke-width="1.00" stroke-opacity="0.30"/><path d="M68.5 16.4 L116.2 2.1" stroke="#5e5a48" stroke-width="1.30" stroke-opacity="0.46"/><path d="M70.4 17.3 L126.4 0.5" stroke="#5e5a48" stroke-width="0.84" stroke-opacity="0.37"/><path d="M72.8 14.3 L129.9 -2.8" stroke="#5e5a48" stroke-width="1.42" stroke-opacity="0.35"/><path d="M75.1 14.5 L119.9 1.0" stroke="#5e5a48" stroke-width="1.09" stroke-opacity="0.58"/><path d="M77.6 16.3 L138.4 -2.0" stroke="#5e5a48" stroke-width="1.34" stroke-opacity="0.30"/><path d="M78.8 17.4 L106.9 9.0" stroke="#5e5a48" stroke-width="1.17" stroke-opacity="0.27"/><path d="M81.8 15.8 L122.3 3.6" stroke="#5e5a48" stroke-width="1.18" stroke-opacity="0.46"/><path d="M83.7 16.1 L140.7 -1.0" stroke="#5e5a48" stroke-width="0.98" stroke-opacity="0.51"/><path d="M86.6 21.5 L128.1 9.0" stroke="#5e5a48" stroke-width="0.94" stroke-opacity="0.21"/><path d="M89.6 14.6 L122.5 4.7" stroke="#5e5a48" stroke-width="0.79" stroke-opacity="0.64"/><path d="M92.5 15.1 L132.3 3.1" stroke="#5e5a48" stroke-width="0.79" stroke-opacity="0.53"/><path d="M95.2 16.8 L149.1 0.7" stroke="#5e5a48" stroke-width="0.76" stroke-opacity="0.62"/><path d="M98.0 20.0 L132.6 9.7" stroke="#5e5a48" stroke-width="0.86" stroke-opacity="0.53"/><path d="M100.3 19.4 L139.8 7.6" stroke="#5e5a48" stroke-width="0.81" stroke-opacity="0.49"/><path d="M103.3 18.4 L159.4 1.6" stroke="#5e5a48" stroke-width="1.30" stroke-opacity="0.24"/><path d="M104.6 17.8 L138.8 7.6" stroke="#5e5a48" stroke-width="0.78" stroke-opacity="0.70"/><path d="M106.8 17.1 L146.6 5.2" stroke="#5e5a48" stroke-width="1.23" stroke-opacity="0.24"/><path d="M109.9 16.2 L168.5 -1.4" stroke="#5e5a48" stroke-width="0.92" stroke-opacity="0.39"/><path d="M112.0 21.3 L166.3 5.0" stroke="#5e5a48" stroke-width="0.73" stroke-opacity="0.55"/><path d="M114.1 13.3 L142.1 4.9" stroke="#5e5a48" stroke-width="0.90" stroke-opacity="0.41"/><path d="M115.5 17.4 L169.9 1.1" stroke="#5e5a48" stroke-width="1.43" stroke-opacity="0.71"/><path d="M117.6 14.7 L178.6 -3.6" stroke="#5e5a48" stroke-width="0.97" stroke-opacity="0.43"/><path d="M120.4 17.8 L181.0 -0.3" stroke="#5e5a48" stroke-width="1.46" stroke-opacity="0.59"/><path d="M122.0 21.0 L167.5 7.4" stroke="#5e5a48" stroke-width="0.94" stroke-opacity="0.58"/><path d="M123.6 15.7 L155.5 6.1" stroke="#5e5a48" stroke-width="0.80" stroke-opacity="0.73"/><path d="M125.3 18.5 L158.5 8.5" stroke="#5e5a48" stroke-width="0.90" stroke-opacity="0.32"/><path d="M127.0 13.3 L179.8 -2.6" stroke="#5e5a48" stroke-width="0.95" stroke-opacity="0.56"/><path d="M130.0 17.8 L163.7 7.7" stroke="#5e5a48" stroke-width="0.88" stroke-opacity="0.73"/><path d="M132.8 20.0 L158.6 12.2" stroke="#5e5a48" stroke-width="1.04" stroke-opacity="0.67"/><path d="M135.0 21.1 L177.2 8.4" stroke="#5e5a48" stroke-width="0.74" stroke-opacity="0.33"/><path d="M138.0 17.0 L189.5 1.5" stroke="#5e5a48" stroke-width="1.48" stroke-opacity="0.55"/><path d="M141.1 21.0 L185.2 7.7" stroke="#5e5a48" stroke-width="0.95" stroke-opacity="0.70"/><path d="M142.5 18.5 L169.2 10.5" stroke="#5e5a48" stroke-width="0.96" stroke-opacity="0.73"/><path d="M144.6 15.6 L182.1 4.4" stroke="#5e5a48" stroke-width="1.34" stroke-opacity="0.50"/><path d="M145.8 16.0 L180.5 5.6" stroke="#5e5a48" stroke-width="1.05" stroke-opacity="0.73"/><path d="M147.9 21.0 L187.7 9.0" stroke="#5e5a48" stroke-width="1.02" stroke-opacity="0.41"/><path d="M149.5 19.0 L185.7 8.2" stroke="#5e5a48" stroke-width="1.16" stroke-opacity="0.48"/><path d="M152.3 19.3 L189.5 8.2" stroke="#5e5a48" stroke-width="1.46" stroke-opacity="0.72"/><path d="M155.4 19.1 L189.5 8.9" stroke="#5e5a48" stroke-width="1.39" stroke-opacity="0.40"/><path d="M157.5 19.4 L189.5 9.8" stroke="#5e5a48" stroke-width="0.71" stroke-opacity="0.40"/><path d="M160.2 15.6 L189.5 6.8" stroke="#5e5a48" stroke-width="1.37" stroke-opacity="0.60"/><path d="M163.3 18.7 L189.5 10.8" stroke="#5e5a48" stroke-width="0.74" stroke-opacity="0.71"/><path d="M165.3 20.9 L189.5 13.6" stroke="#5e5a48" stroke-width="1.39" stroke-opacity="0.53"/><path d="M166.8 13.5 L189.5 6.7" stroke="#5e5a48" stroke-width="0.73" stroke-opacity="0.71"/><path d="M168.7 17.4 L189.5 11.2" stroke="#5e5a48" stroke-width="0.79" stroke-opacity="0.68"/><path d="M170.1 21.5 L189.5 15.6" stroke="#5e5a48" stroke-width="1.03" stroke-opacity="0.32"/><path d="M173.0 16.0 L189.5 11.0" stroke="#5e5a48" stroke-width="1.19" stroke-opacity="0.64"/><path d="M175.9 13.3 L189.5 9.2" stroke="#5e5a48" stroke-width="1.38" stroke-opacity="0.21"/><path d="M177.1 14.0 L189.5 10.3" stroke="#5e5a48" stroke-width="0.71" stroke-opacity="0.54"/><path d="M179.6 14.1 L189.5 11.1" stroke="#5e5a48" stroke-width="1.28" stroke-opacity="0.22"/><path d="M182.5 19.6 L189.5 17.5" stroke="#5e5a48" stroke-width="1.47" stroke-opacity="0.34"/><path d="M185.3 21.2 L189.5 20.0" stroke="#5e5a48" stroke-width="1.24" stroke-opacity="0.68"/></svg>
<div class="b" style="left:120px;top:275px;width:262px;height:24px;background:#fff;border:1px solid #7a7a7a;"></div>
<div class="t" style="left:123px;top:278.50px;font-size:13px;line-height:16px;color:#000;">Harteloxal</div>
<div class="b" style="left:360px;top:278px;width:19px;height:18px;background:#e5e5e5;border:1px solid #c8c8c8"></div>
<svg class="b" style="left:365px;top:285px" width="10" height="6" viewBox="0 0 10 6"><path d="M0.8 0.8L5 5L9.2 0.8" fill="none" stroke="#555" stroke-width="1.1"/></svg>
<div class="b" style="left:120px;top:305px;width:262px;height:24px;background:#fff;border:1px solid #7a7a7a;"></div>
<div class="t" style="left:123px;top:308.50px;font-size:13px;line-height:16px;color:#000;">000028654</div>
<div class="b" style="left:120px;top:335px;width:60px;height:24px;background:#fff;border:1px solid #7a7a7a;"></div>
<div class="t" style="left:123px;top:338.50px;font-size:13px;line-height:16px;color:#000;">Stk.</div>
<div class="t" style="left:191px;top:338.50px;font-size:13px;line-height:16px;color:#000;">Artikeltyp</div>
<div class="b" style="left:252px;top:335px;width:130px;height:24px;background:#e3e3e3;border:1px solid #c8c8c8;"></div>
<svg class="b" style="left:365px;top:345px" width="10" height="6" viewBox="0 0 10 6"><path d="M0.8 0.8L5 5L9.2 0.8" fill="none" stroke="#555" stroke-width="1.1"/></svg>
<div class="b" style="left:120px;top:365px;width:262px;height:24px;background:#e3e3e3;border:1px solid #c8c8c8;"></div>
<div class="t" style="left:123px;top:368.50px;font-size:13px;line-height:16px;color:#000;">Aktiver Artikel</div>
<svg class="b" style="left:365px;top:375px" width="10" height="6" viewBox="0 0 10 6"><path d="M0.8 0.8L5 5L9.2 0.8" fill="none" stroke="#555" stroke-width="1.1"/></svg>
<div class="t" style="left:427px;top:188.50px;font-size:13px;line-height:16px;color:#000;">geändert am</div>
<div class="b" style="left:514.5px;top:185px;width:130.5px;height:24px;background:#fff;border:1px solid #7a7a7a;"></div>
<div class="t" style="left:517.5px;top:188.50px;font-size:13px;line-height:16px;color:#000;">30.09.2020 12:58:52</div>
<div class="t" style="left:653px;top:188.50px;font-size:13px;line-height:16px;color:#000;">von</div>
<div class="b" style="left:676.5px;top:185px;width:45.5px;height:24px;background:#fff;border:1px solid #7a7a7a;"></div>
<div class="t" style="left:679.5px;top:188.50px;font-size:13px;line-height:16px;color:#000;">WI</div>
<div class="b" style="left:729px;top:184.5px;width:74px;height:24.0px;background:#ff0000;border:1px solid #6d6d6d;box-shadow:inset 0 2px 0 #fff,inset 0 -3px 0 #a0a0a0"></div>
<div class="t" style="left:745px;top:190.50px;font-size:13px;line-height:16px;color:#222;">Historie</div>
<div class="b" style="left:514.5px;top:245px;width:1415.5px;height:143px;background:#fff;border:1px solid #7a7a7a;"></div>
<div class="t" style="left:518px;top:248.90px;font-size:13px;line-height:16px;color:#000;">Gewinde abdecken, strahlen, eloxiert</div>
<div class="t" style="left:518px;top:264.50px;font-size:13px;line-height:16px;color:#000;">schwarz glanz</div>
<div class="t" style="left:518px;top:280.00px;font-size:13px;line-height:16px;color:#000;">EN AW 5083</div>
<div class="b" style="left:9.7px;top:392px;width:76.3px;height:24px;border-top:1px solid #fff;border-left:1px solid #fff;border-bottom:2px solid #6a6a6a;border-right:2px solid #6a6a6a"></div>
<div class="t" style="left:9.699999999999996px;width:76.3px;top:398.50px;font-size:13px;line-height:16px;color:#000;text-align:center;">spezifisch I</div>
<div class="b" style="left:89.7px;top:392px;width:78.3px;height:24px;border-top:1px solid #fff;border-left:1px solid #fff;border-bottom:2px solid #6a6a6a;border-right:2px solid #6a6a6a"></div>
<div class="t" style="left:89.69999999999999px;width:78.3px;top:398.50px;font-size:13px;line-height:16px;color:#000;text-align:center;">spezifisch II</div>
<div class="b" style="left:172.8px;top:392px;width:79.19999999999999px;height:24px;border-top:2px solid #6a6a6a;border-left:2px solid #6a6a6a;border-bottom:1px solid #fff;border-right:1px solid #fff"></div>
<div class="t" style="left:179.8px;top:396.50px;font-size:13px;line-height:16px;color:#000;">Technologie</div>
<div class="b" style="left:257px;top:392px;width:47px;height:24px;border-top:1px solid #fff;border-left:1px solid #fff;border-bottom:2px solid #6a6a6a;border-right:2px solid #6a6a6a"></div>
<div class="t" style="left:257.0px;width:47px;top:398.50px;font-size:13px;line-height:16px;color:#000;text-align:center;">Preise</div>
<div class="b" style="left:308.7px;top:392px;width:58.30000000000001px;height:24px;border-top:1px solid #fff;border-left:1px solid #fff;border-bottom:2px solid #6a6a6a;border-right:2px solid #6a6a6a"></div>
<div class="t" style="left:308.70000000000005px;width:58.30000000000001px;top:398.50px;font-size:13px;line-height:16px;color:#000;text-align:center;">Aufträge</div>
<div class="b" style="left:371.7px;top:392px;width:138.3px;height:24px;border-top:1px solid #fff;border-left:1px solid #fff;border-bottom:2px solid #6a6a6a;border-right:2px solid #6a6a6a"></div>
<div class="t" style="left:371.70000000000005px;width:138.3px;top:398.50px;font-size:13px;line-height:16px;color:#000;text-align:center;">Qualitätsmanagement</div>
<div class="b" style="left:514px;top:392px;width:159px;height:24px;border-top:1px solid #fff;border-left:1px solid #fff;border-bottom:2px solid #6a6a6a;border-right:2px solid #6a6a6a"></div>
<div class="t" style="left:514.0px;width:159px;top:398.50px;font-size:13px;line-height:16px;color:#000;text-align:center;">Dokumentenmanagement</div>
<div class="b" style="left:11.5px;top:421px;width:570.5px;height:492.5px;background:#fff;border-top:2px solid #a0a0a0;border-left:1px solid #f4f4f4;border-right:1px solid #d8d8d8;border-bottom:2px solid #a8a8a8"></div>
<div class="b" style="left:565.5px;top:422px;width:15.5px;height:490.5px;background:#f0f0f0"></div>
<svg class="b" style="left:567px;top:430px" width="12" height="8" viewBox="0 0 12 8"><path d="M2 6L6 2L10 6" fill="none" stroke="#606060" stroke-width="1.3"/></svg>
<svg class="b" style="left:567px;top:897px" width="12" height="8" viewBox="0 0 12 8"><path d="M2 2L6 6L10 2" fill="none" stroke="#606060" stroke-width="1.3"/></svg>
<div class="b" style="left:566.5px;top:661px;width:13.5px;height:19px;background:#c2c2c2"></div>
<div class="b" style="left:12.5px;top:423px;width:9.899999999999999px;height:22px;background:#fff;border-right:2px solid #d8d8d8;border-bottom:2px solid #d8d8d8"></div>
<div class="b" style="left:22.4px;top:423px;width:46.199999999999996px;height:22px;background:#fff;border-right:2px solid #d8d8d8;border-bottom:2px solid #d8d8d8"></div>
<div class="b" style="left:68.6px;top:423px;width:181.8px;height:22px;background:#fff;border-right:2px solid #d8d8d8;border-bottom:2px solid #d8d8d8"></div>
<div class="b" style="left:250.4px;top:423px;width:79.6px;height:22px;background:#fff;border-right:2px solid #d8d8d8;border-bottom:2px solid #d8d8d8"></div>
<div class="b" style="left:330px;top:423px;width:83px;height:22px;background:#fff;border-right:2px solid #d8d8d8;border-bottom:2px solid #d8d8d8"></div>
<div class="b" style="left:413px;top:423px;width:81px;height:22px;background:#fff;border-right:2px solid #d8d8d8;border-bottom:2px solid #d8d8d8"></div>
<div class="b" style="left:494px;top:423px;width:46px;height:22px;background:#fff;border-right:2px solid #d8d8d8;border-bottom:2px solid #d8d8d8"></div>
<svg class="b" style="left:13px;top:429px" width="9" height="10" viewBox="0 0 9 10"><path d="M1 2h7L4.5 8z" fill="#000"/></svg>
<div class="t" style="left:25px;top:427.00px;font-size:13px;line-height:16px;color:#000;">Badnr.</div>
<div class="t" style="left:71px;top:427.50px;font-size:13px;line-height:16px;color:#000;">Badname</div>
<div class="t" style="left:254px;top:427.50px;font-size:13px;line-height:16px;color:#000;">ExpoZeit (s)</div>
<div class="t" style="left:334px;top:427.50px;font-size:13px;line-height:16px;color:#000;">Varianz (s)</div>
<div class="t" style="left:423px;top:427.00px;font-size:13px;line-height:16px;color:#000;">Abtropf (s)</div>
<div class="t" style="left:497px;top:426.50px;font-size:13px;line-height:16px;color:#000;">Badluft</div>
<div class="b" style="left:12.5px;top:445.0px;width:9.899999999999999px;height:20.95999999999998px;border-right:1px solid #d0d0d0;border-bottom:1px solid #b0b0b0;background:#fff"></div>
<div class="b" style="left:22.4px;top:464.96px;width:517.6px;height:1.0px;background:#efefef"></div>
<div class="b" style="left:67.6px;top:445.0px;width:1.0px;height:20.95999999999998px;background:#efefef"></div>
<div class="b" style="left:249.4px;top:445.0px;width:1.0px;height:20.95999999999998px;background:#efefef"></div>
<div class="b" style="left:329px;top:445.0px;width:1px;height:20.95999999999998px;background:#efefef"></div>
<div class="b" style="left:412px;top:445.0px;width:1px;height:20.95999999999998px;background:#efefef"></div>
<div class="b" style="left:493px;top:445.0px;width:1px;height:20.95999999999998px;background:#efefef"></div>
<div class="b" style="left:539px;top:445.0px;width:1px;height:20.95999999999998px;background:#efefef"></div>
<div class="t" style="right:1854px;top:447.80px;font-size:13px;line-height:16px;color:#000;text-align:right;">6</div>
<div class="b" style="left:70px;top:445.0px;width:180px;height:20.96px;overflow:hidden"><div class="t" style="left:2.5px;top:2.87px;font-size:13px;line-height:16px;color:#000">P1 - Entfettung (Aluminium)</div></div>
<div class="t" style="left:254px;top:447.80px;font-size:13px;line-height:16px;color:#000;">300</div>
<div class="t" style="left:333.5px;top:447.80px;font-size:13px;line-height:16px;color:#000;">120</div>
<div class="t" style="left:417px;top:447.80px;font-size:13px;line-height:16px;color:#000;">20</div>
<div class="cb" style="left:510.5px;top:447.5px;width:12.5px;height:12.5px"></div>
<div class="b" style="left:12.5px;top:465.96px;width:9.899999999999999px;height:20.95999999999998px;border-right:1px solid #d0d0d0;border-bottom:1px solid #b0b0b0;background:#fff"></div>
<div class="b" style="left:22.4px;top:485.91999999999996px;width:517.6px;height:1.0px;background:#efefef"></div>
<div class="b" style="left:67.6px;top:465.96px;width:1.0px;height:20.95999999999998px;background:#efefef"></div>
<div class="b" style="left:249.4px;top:465.96px;width:1.0px;height:20.95999999999998px;background:#efefef"></div>
<div class="b" style="left:329px;top:465.96px;width:1px;height:20.95999999999998px;background:#efefef"></div>
<div class="b" style="left:412px;top:465.96px;width:1px;height:20.95999999999998px;background:#efefef"></div>
<div class="b" style="left:493px;top:465.96px;width:1px;height:20.95999999999998px;background:#efefef"></div>
<div class="b" style="left:539px;top:465.96px;width:1px;height:20.95999999999998px;background:#efefef"></div>
<div class="t" style="right:1854px;top:468.76px;font-size:13px;line-height:16px;color:#000;text-align:right;">7</div>
<div class="b" style="left:70px;top:465.96px;width:180px;height:20.96px;overflow:hidden"><div class="t" style="left:2.5px;top:2.87px;font-size:13px;line-height:16px;color:#000">GSp 1/1 - Gegenstromfließspü</div></div>
<div class="t" style="left:254px;top:468.76px;font-size:13px;line-height:16px;color:#000;">15</div>
<div class="t" style="left:333.5px;top:468.76px;font-size:13px;line-height:16px;color:#000;">15</div>
<div class="t" style="left:417px;top:468.76px;font-size:13px;line-height:16px;color:#000;">15</div>
<div class="cb" style="left:510.5px;top:468.46px;width:12.5px;height:12.5px"></div>
<div class="b" style="left:12.5px;top:486.92px;width:9.899999999999999px;height:20.95999999999998px;border-right:1px solid #d0d0d0;border-bottom:1px solid #b0b0b0;background:#fff"></div>
<div class="b" style="left:22.4px;top:506.88px;width:517.6px;height:1.0px;background:#efefef"></div>
<div class="b" style="left:67.6px;top:486.92px;width:1.0px;height:20.95999999999998px;background:#efefef"></div>
<div class="b" style="left:249.4px;top:486.92px;width:1.0px;height:20.95999999999998px;background:#efefef"></div>
<div class="b" style="left:329px;top:486.92px;width:1px;height:20.95999999999998px;background:#efefef"></div>
<div class="b" style="left:412px;top:486.92px;width:1px;height:20.95999999999998px;background:#efefef"></div>
<div class="b" style="left:493px;top:486.92px;width:1px;height:20.95999999999998px;background:#efefef"></div>
<div class="b" style="left:539px;top:486.92px;width:1px;height:20.95999999999998px;background:#efefef"></div>
<div class="t" style="right:1854px;top:489.72px;font-size:13px;line-height:16px;color:#000;text-align:right;">8</div>
<div class="b" style="left:70px;top:486.92px;width:180px;height:20.96px;overflow:hidden"><div class="t" style="left:2.5px;top:2.87px;font-size:13px;line-height:16px;color:#000">GSp 1/2 - Gegenstromfließspü</div></div>
<div class="t" style="left:254px;top:489.72px;font-size:13px;line-height:16px;color:#000;">15</div>
<div class="t" style="left:333.5px;top:489.72px;font-size:13px;line-height:16px;color:#000;">15</div>
<div class="t" style="left:417px;top:489.72px;font-size:13px;line-height:16px;color:#000;">15</div>
<div class="cb" style="left:510.5px;top:489.42px;width:12.5px;height:12.5px"></div>
<div class="b" style="left:12.5px;top:507.88px;width:9.899999999999999px;height:20.960000000000036px;border-right:1px solid #d0d0d0;border-bottom:1px solid #b0b0b0;background:#fff"></div>
<div class="b" style="left:22.4px;top:527.84px;width:517.6px;height:1.0px;background:#efefef"></div>
<div class="b" style="left:67.6px;top:507.88px;width:1.0px;height:20.960000000000036px;background:#efefef"></div>
<div class="b" style="left:249.4px;top:507.88px;width:1.0px;height:20.960000000000036px;background:#efefef"></div>
<div class="b" style="left:329px;top:507.88px;width:1px;height:20.960000000000036px;background:#efefef"></div>
<div class="b" style="left:412px;top:507.88px;width:1px;height:20.960000000000036px;background:#efefef"></div>
<div class="b" style="left:493px;top:507.88px;width:1px;height:20.960000000000036px;background:#efefef"></div>
<div class="b" style="left:539px;top:507.88px;width:1px;height:20.960000000000036px;background:#efefef"></div>
<div class="t" style="right:1854px;top:510.68px;font-size:13px;line-height:16px;color:#000;text-align:right;">9</div>
<div class="b" style="left:70px;top:507.88px;width:180px;height:20.96px;overflow:hidden"><div class="t" style="left:2.5px;top:2.87px;font-size:13px;line-height:16px;color:#000">GSp 1/3 - Gegenstromfließspü</div></div>
<div class="t" style="left:254px;top:510.68px;font-size:13px;line-height:16px;color:#000;">15</div>
<div class="t" style="left:333.5px;top:510.68px;font-size:13px;line-height:16px;color:#000;">15</div>
<div class="t" style="left:417px;top:510.68px;font-size:13px;line-height:16px;color:#000;">5</div>
<div class="cb" style="left:510.5px;top:510.38px;width:12.5px;height:12.5px"></div>
<div class="b" style="left:12.5px;top:528.84px;width:9.899999999999999px;height:20.960000000000036px;border-right:1px solid #d0d0d0;border-bottom:1px solid #b0b0b0;background:#fff"></div>
<div class="b" style="left:22.4px;top:548.8000000000001px;width:517.6px;height:1.0px;background:#efefef"></div>
<div class="b" style="left:67.6px;top:528.84px;width:1.0px;height:20.960000000000036px;background:#efefef"></div>
<div class="b" style="left:249.4px;top:528.84px;width:1.0px;height:20.960000000000036px;background:#efefef"></div>
<div class="b" style="left:329px;top:528.84px;width:1px;height:20.960000000000036px;background:#efefef"></div>
<div class="b" style="left:412px;top:528.84px;width:1px;height:20.960000000000036px;background:#efefef"></div>
<div class="b" style="left:493px;top:528.84px;width:1px;height:20.960000000000036px;background:#efefef"></div>
<div class="b" style="left:539px;top:528.84px;width:1px;height:20.960000000000036px;background:#efefef"></div>
<div class="t" style="right:1854px;top:531.64px;font-size:13px;line-height:16px;color:#000;text-align:right;">14</div>
<div class="b" style="left:70px;top:528.84px;width:180px;height:20.96px;overflow:hidden"><div class="t" style="left:2.5px;top:2.87px;font-size:13px;line-height:16px;color:#000">P3 - Dekapierung</div></div>
<div class="t" style="left:254px;top:531.64px;font-size:13px;line-height:16px;color:#000;">60</div>
<div class="t" style="left:333.5px;top:531.64px;font-size:13px;line-height:16px;color:#000;">60</div>
<div class="t" style="left:417px;top:531.64px;font-size:13px;line-height:16px;color:#000;">20</div>
<div class="cb" style="left:510.5px;top:531.34px;width:12.5px;height:12.5px"></div>
<div class="b" style="left:12.5px;top:549.8px;width:9.899999999999999px;height:20.960000000000036px;border-right:1px solid #d0d0d0;border-bottom:1px solid #b0b0b0;background:#fff"></div>
<div class="b" style="left:22.4px;top:569.76px;width:517.6px;height:1.0px;background:#efefef"></div>
<div class="b" style="left:67.6px;top:549.8px;width:1.0px;height:20.960000000000036px;background:#efefef"></div>
<div class="b" style="left:249.4px;top:549.8px;width:1.0px;height:20.960000000000036px;background:#efefef"></div>
<div class="b" style="left:329px;top:549.8px;width:1px;height:20.960000000000036px;background:#efefef"></div>
<div class="b" style="left:412px;top:549.8px;width:1px;height:20.960000000000036px;background:#efefef"></div>
<div class="b" style="left:493px;top:549.8px;width:1px;height:20.960000000000036px;background:#efefef"></div>
<div class="b" style="left:539px;top:549.8px;width:1px;height:20.960000000000036px;background:#efefef"></div>
<div class="t" style="right:1854px;top:552.60px;font-size:13px;line-height:16px;color:#000;text-align:right;">15</div>
<div class="b" style="left:70px;top:549.8px;width:180px;height:20.96px;overflow:hidden"><div class="t" style="left:2.5px;top:2.87px;font-size:13px;line-height:16px;color:#000">GSp 3/1 - Gegenstromfließspü</div></div>
<div class="t" style="left:254px;top:552.60px;font-size:13px;line-height:16px;color:#000;">15</div>
<div class="t" style="left:333.5px;top:552.60px;font-size:13px;line-height:16px;color:#000;">15</div>
<div class="t" style="left:417px;top:552.60px;font-size:13px;line-height:16px;color:#000;">15</div>
<div class="cb" style="left:510.5px;top:552.3px;width:12.5px;height:12.5px"></div>
<div class="b" style="left:12.5px;top:570.76px;width:9.899999999999999px;height:20.960000000000036px;border-right:1px solid #d0d0d0;border-bottom:1px solid #b0b0b0;background:#fff"></div>
<div class="b" style="left:22.4px;top:590.72px;width:517.6px;height:1.0px;background:#efefef"></div>
<div class="b" style="left:67.6px;top:570.76px;width:1.0px;height:20.960000000000036px;background:#efefef"></div>
<div class="b" style="left:249.4px;top:570.76px;width:1.0px;height:20.960000000000036px;background:#efefef"></div>
<div class="b" style="left:329px;top:570.76px;width:1px;height:20.960000000000036px;background:#efefef"></div>
<div class="b" style="left:412px;top:570.76px;width:1px;height:20.960000000000036px;background:#efefef"></div>
<div class="b" style="left:493px;top:570.76px;width:1px;height:20.960000000000036px;background:#efefef"></div>
<div class="b" style="left:539px;top:570.76px;width:1px;height:20.960000000000036px;background:#efefef"></div>
<div class="t" style="right:1854px;top:573.56px;font-size:13px;line-height:16px;color:#000;text-align:right;">16</div>
<div class="b" style="left:70px;top:570.76px;width:180px;height:20.96px;overflow:hidden"><div class="t" style="left:2.5px;top:2.87px;font-size:13px;line-height:16px;color:#000">GSp 3/2 - Gegenstromfließspü</div></div>
<div class="t" style="left:254px;top:573.56px;font-size:13px;line-height:16px;color:#000;">15</div>
<div class="t" style="left:333.5px;top:573.56px;font-size:13px;line-height:16px;color:#000;">15</div>
<div class="t" style="left:417px;top:573.56px;font-size:13px;line-height:16px;color:#000;">15</div>
<div class="cb" style="left:510.5px;top:573.26px;width:12.5px;height:12.5px"></div>
<div class="b" style="left:12.5px;top:591.72px;width:9.899999999999999px;height:20.960000000000036px;border-right:1px solid #d0d0d0;border-bottom:1px solid #b0b0b0;background:#fff"></div>
<div class="b" style="left:22.4px;top:611.6800000000001px;width:517.6px;height:1.0px;background:#efefef"></div>
<div class="b" style="left:67.6px;top:591.72px;width:1.0px;height:20.960000000000036px;background:#efefef"></div>
<div class="b" style="left:249.4px;top:591.72px;width:1.0px;height:20.960000000000036px;background:#efefef"></div>
<div class="b" style="left:329px;top:591.72px;width:1px;height:20.960000000000036px;background:#efefef"></div>
<div class="b" style="left:412px;top:591.72px;width:1px;height:20.960000000000036px;background:#efefef"></div>
<div class="b" style="left:493px;top:591.72px;width:1px;height:20.960000000000036px;background:#efefef"></div>
<div class="b" style="left:539px;top:591.72px;width:1px;height:20.960000000000036px;background:#efefef"></div>
<div class="t" style="right:1854px;top:594.52px;font-size:13px;line-height:16px;color:#000;text-align:right;">17</div>
<div class="b" style="left:70px;top:591.72px;width:180px;height:20.96px;overflow:hidden"><div class="t" style="left:2.5px;top:2.87px;font-size:13px;line-height:16px;color:#000">P4 - Glänzen</div></div>
<div class="t" style="left:254px;top:594.52px;font-size:13px;line-height:16px;color:#000;">45</div>
<div class="t" style="left:333.5px;top:594.52px;font-size:13px;line-height:16px;color:#000;">0</div>
<div class="t" style="left:417px;top:594.52px;font-size:13px;line-height:16px;color:#000;">20</div>
<div class="cb" style="left:510.5px;top:594.22px;width:12.5px;height:12.5px"></div>
<svg class="b" style="left:510.5px;top:594.22px" width="12.5" height="12.5" viewBox="0 0 13 13"><path d="M2.3 6.3L5 9.3L10.7 3.2" fill="none" stroke="#333" stroke-width="1.05"/></svg>
<div class="b" style="left:12.5px;top:612.6800000000001px;width:9.899999999999999px;height:20.960000000000036px;border-right:1px solid #d0d0d0;border-bottom:1px solid #b0b0b0;background:#fff"></div>
<div class="b" style="left:22.4px;top:632.6400000000001px;width:517.6px;height:1.0px;background:#efefef"></div>
<div class="b" style="left:67.6px;top:612.6800000000001px;width:1.0px;height:20.960000000000036px;background:#efefef"></div>
<div class="b" style="left:249.4px;top:612.6800000000001px;width:1.0px;height:20.960000000000036px;background:#efefef"></div>
<div class="b" style="left:329px;top:612.6800000000001px;width:1px;height:20.960000000000036px;background:#efefef"></div>
<div class="b" style="left:412px;top:612.6800000000001px;width:1px;height:20.960000000000036px;background:#efefef"></div>
<div class="b" style="left:493px;top:612.6800000000001px;width:1px;height:20.960000000000036px;background:#efefef"></div>
<div class="b" style="left:539px;top:612.6800000000001px;width:1px;height:20.960000000000036px;background:#efefef"></div>
<div class="t" style="right:1854px;top:615.48px;font-size:13px;line-height:16px;color:#000;text-align:right;">17</div>
<div class="b" style="left:70px;top:612.6800000000001px;width:180px;height:20.96px;overflow:hidden"><div class="t" style="left:2.5px;top:2.87px;font-size:13px;line-height:16px;color:#000">P4 - Glänzen</div></div>
<div class="t" style="left:254px;top:615.48px;font-size:13px;line-height:16px;color:#000;">45</div>
<div class="t" style="left:333.5px;top:615.48px;font-size:13px;line-height:16px;color:#000;">0</div>
<div class="t" style="left:417px;top:615.48px;font-size:13px;line-height:16px;color:#000;">20</div>
<div class="cb" style="left:510.5px;top:615.1800000000001px;width:12.5px;height:12.5px"></div>
<svg class="b" style="left:510.5px;top:615.1800000000001px" width="12.5" height="12.5" viewBox="0 0 13 13"><path d="M2.3 6.3L5 9.3L10.7 3.2" fill="none" stroke="#333" stroke-width="1.05"/></svg>
<div class="b" style="left:12.5px;top:633.64px;width:9.899999999999999px;height:20.960000000000036px;border-right:1px solid #d0d0d0;border-bottom:1px solid #b0b0b0;background:#fff"></div>
<div class="b" style="left:22.4px;top:653.6px;width:517.6px;height:1.0px;background:#efefef"></div>
<div class="b" style="left:67.6px;top:633.64px;width:1.0px;height:20.960000000000036px;background:#efefef"></div>
<div class="b" style="left:249.4px;top:633.64px;width:1.0px;height:20.960000000000036px;background:#efefef"></div>
<div class="b" style="left:329px;top:633.64px;width:1px;height:20.960000000000036px;background:#efefef"></div>
<div class="b" style="left:412px;top:633.64px;width:1px;height:20.960000000000036px;background:#efefef"></div>
<div class="b" style="left:493px;top:633.64px;width:1px;height:20.960000000000036px;background:#efefef"></div>
<div class="b" style="left:539px;top:633.64px;width:1px;height:20.960000000000036px;background:#efefef"></div>
<div class="t" style="right:1854px;top:636.44px;font-size:13px;line-height:16px;color:#000;text-align:right;">18</div>
<div class="b" style="left:70px;top:633.64px;width:180px;height:20.96px;overflow:hidden"><div class="t" style="left:2.5px;top:2.87px;font-size:13px;line-height:16px;color:#000">GSp 4/1 - Gegenstromfließspü</div></div>
<div class="t" style="left:254px;top:636.44px;font-size:13px;line-height:16px;color:#000;">15</div>
<div class="t" style="left:333.5px;top:636.44px;font-size:13px;line-height:16px;color:#000;">15</div>
<div class="t" style="left:417px;top:636.44px;font-size:13px;line-height:16px;color:#000;">15</div>
<div class="cb" style="left:510.5px;top:636.14px;width:12.5px;height:12.5px"></div>
<div class="b" style="left:12.5px;top:654.6px;width:9.899999999999999px;height:20.960000000000036px;border-right:1px solid #d0d0d0;border-bottom:1px solid #b0b0b0;background:#fff"></div>
<div class="b" style="left:22.4px;top:674.5600000000001px;width:517.6px;height:1.0px;background:#efefef"></div>
<div class="b" style="left:67.6px;top:654.6px;width:1.0px;height:20.960000000000036px;background:#efefef"></div>
<div class="b" style="left:249.4px;top:654.6px;width:1.0px;height:20.960000000000036px;background:#efefef"></div>
<div class="b" style="left:329px;top:654.6px;width:1px;height:20.960000000000036px;background:#efefef"></div>
<div class="b" style="left:412px;top:654.6px;width:1px;height:20.960000000000036px;background:#efefef"></div>
<div class="b" style="left:493px;top:654.6px;width:1px;height:20.960000000000036px;background:#efefef"></div>
<div class="b" style="left:539px;top:654.6px;width:1px;height:20.960000000000036px;background:#efefef"></div>
<div class="t" style="right:1854px;top:657.40px;font-size:13px;line-height:16px;color:#000;text-align:right;">19</div>
<div class="b" style="left:70px;top:654.6px;width:180px;height:20.96px;overflow:hidden"><div class="t" style="left:2.5px;top:2.87px;font-size:13px;line-height:16px;color:#000">GSp 4/2 - Gegenstromfließspü</div></div>
<div class="t" style="left:254px;top:657.40px;font-size:13px;line-height:16px;color:#000;">15</div>
<div class="t" style="left:333.5px;top:657.40px;font-size:13px;line-height:16px;color:#000;">15</div>
<div class="t" style="left:417px;top:657.40px;font-size:13px;line-height:16px;color:#000;">15</div>
<div class="cb" style="left:510.5px;top:657.1px;width:12.5px;height:12.5px"></div>
<div class="b" style="left:12.5px;top:675.56px;width:9.899999999999999px;height:20.960000000000036px;border-right:1px solid #d0d0d0;border-bottom:1px solid #b0b0b0;background:#fff"></div>
<div class="b" style="left:22.4px;top:695.52px;width:517.6px;height:1.0px;background:#efefef"></div>
<div class="b" style="left:67.6px;top:675.56px;width:1.0px;height:20.960000000000036px;background:#efefef"></div>
<div class="b" style="left:249.4px;top:675.56px;width:1.0px;height:20.960000000000036px;background:#efefef"></div>
<div class="b" style="left:329px;top:675.56px;width:1px;height:20.960000000000036px;background:#efefef"></div>
<div class="b" style="left:412px;top:675.56px;width:1px;height:20.960000000000036px;background:#efefef"></div>
<div class="b" style="left:493px;top:675.56px;width:1px;height:20.960000000000036px;background:#efefef"></div>
<div class="b" style="left:539px;top:675.56px;width:1px;height:20.960000000000036px;background:#efefef"></div>
<div class="t" style="right:1854px;top:678.36px;font-size:13px;line-height:16px;color:#000;text-align:right;">20</div>
<div class="b" style="left:70px;top:675.56px;width:180px;height:20.96px;overflow:hidden"><div class="t" style="left:2.5px;top:2.87px;font-size:13px;line-height:16px;color:#000">GSp 4/3 - Gegenstromfließspü</div></div>
<div class="t" style="left:254px;top:678.36px;font-size:13px;line-height:16px;color:#000;">15</div>
<div class="t" style="left:333.5px;top:678.36px;font-size:13px;line-height:16px;color:#000;">15</div>
<div class="t" style="left:417px;top:678.36px;font-size:13px;line-height:16px;color:#000;">15</div>
<div class="cb" style="left:510.5px;top:678.06px;width:12.5px;height:12.5px"></div>
<div class="b" style="left:12.5px;top:696.52px;width:9.899999999999999px;height:20.960000000000036px;border-right:1px solid #d0d0d0;border-bottom:1px solid #b0b0b0;background:#fff"></div>
<div class="b" style="left:22.4px;top:716.48px;width:517.6px;height:1.0px;background:#efefef"></div>
<div class="b" style="left:67.6px;top:696.52px;width:1.0px;height:20.960000000000036px;background:#efefef"></div>
<div class="b" style="left:249.4px;top:696.52px;width:1.0px;height:20.960000000000036px;background:#efefef"></div>
<div class="b" style="left:329px;top:696.52px;width:1px;height:20.960000000000036px;background:#efefef"></div>
<div class="b" style="left:412px;top:696.52px;width:1px;height:20.960000000000036px;background:#efefef"></div>
<div class="b" style="left:493px;top:696.52px;width:1px;height:20.960000000000036px;background:#efefef"></div>
<div class="b" style="left:539px;top:696.52px;width:1px;height:20.960000000000036px;background:#efefef"></div>
<div class="t" style="right:1854px;top:699.32px;font-size:13px;line-height:16px;color:#000;text-align:right;">21</div>
<div class="b" style="left:70px;top:696.52px;width:180px;height:20.96px;overflow:hidden"><div class="t" style="left:2.5px;top:2.87px;font-size:13px;line-height:16px;color:#000">P5 - Dekapieren II</div></div>
<div class="t" style="left:254px;top:699.32px;font-size:13px;line-height:16px;color:#000;">30</div>
<div class="t" style="left:333.5px;top:699.32px;font-size:13px;line-height:16px;color:#000;">30</div>
<div class="t" style="left:417px;top:699.32px;font-size:13px;line-height:16px;color:#000;">5</div>
<div class="cb" style="left:510.5px;top:699.02px;width:12.5px;height:12.5px"></div>
<div class="b" style="left:12.5px;top:717.48px;width:9.899999999999999px;height:20.960000000000036px;border-right:1px solid #d0d0d0;border-bottom:1px solid #b0b0b0;background:#fff"></div>
<div class="b" style="left:22.4px;top:737.44px;width:517.6px;height:1.0px;background:#efefef"></div>
<div class="b" style="left:67.6px;top:717.48px;width:1.0px;height:20.960000000000036px;background:#efefef"></div>
<div class="b" style="left:249.4px;top:717.48px;width:1.0px;height:20.960000000000036px;background:#efefef"></div>
<div class="b" style="left:329px;top:717.48px;width:1px;height:20.960000000000036px;background:#efefef"></div>
<div class="b" style="left:412px;top:717.48px;width:1px;height:20.960000000000036px;background:#efefef"></div>
<div class="b" style="left:493px;top:717.48px;width:1px;height:20.960000000000036px;background:#efefef"></div>
<div class="b" style="left:539px;top:717.48px;width:1px;height:20.960000000000036px;background:#efefef"></div>
<div class="t" style="right:1854px;top:720.28px;font-size:13px;line-height:16px;color:#000;text-align:right;">22</div>
<div class="b" style="left:70px;top:717.48px;width:180px;height:20.96px;overflow:hidden"><div class="t" style="left:2.5px;top:2.87px;font-size:13px;line-height:16px;color:#000">GSp 5/1 - Gegenstromfließspü</div></div>
<div class="t" style="left:254px;top:720.28px;font-size:13px;line-height:16px;color:#000;">15</div>
<div class="t" style="left:333.5px;top:720.28px;font-size:13px;line-height:16px;color:#000;">15</div>
<div class="t" style="left:417px;top:720.28px;font-size:13px;line-height:16px;color:#000;">10</div>
<div class="cb" style="left:510.5px;top:719.98px;width:12.5px;height:12.5px"></div>
<div class="b" style="left:12.5px;top:738.44px;width:9.899999999999999px;height:20.960000000000036px;border-right:1px solid #d0d0d0;border-bottom:1px solid #b0b0b0;background:#fff"></div>
<div class="b" style="left:22.4px;top:758.4000000000001px;width:517.6px;height:1.0px;background:#efefef"></div>
<div class="b" style="left:67.6px;top:738.44px;width:1.0px;height:20.960000000000036px;background:#efefef"></div>
<div class="b" style="left:249.4px;top:738.44px;width:1.0px;height:20.960000000000036px;background:#efefef"></div>
<div class="b" style="left:329px;top:738.44px;width:1px;height:20.960000000000036px;background:#efefef"></div>
<div class="b" style="left:412px;top:738.44px;width:1px;height:20.960000000000036px;background:#efefef"></div>
<div class="b" style="left:493px;top:738.44px;width:1px;height:20.960000000000036px;background:#efefef"></div>
<div class="b" style="left:539px;top:738.44px;width:1px;height:20.960000000000036px;background:#efefef"></div>
<div class="t" style="right:1854px;top:741.24px;font-size:13px;line-height:16px;color:#000;text-align:right;">23</div>
<div class="b" style="left:70px;top:738.44px;width:180px;height:20.96px;overflow:hidden"><div class="t" style="left:2.5px;top:2.87px;font-size:13px;line-height:16px;color:#000">GSp 5/2 - Gegenstromfließspü</div></div>
<div class="t" style="left:254px;top:741.24px;font-size:13px;line-height:16px;color:#000;">15</div>
<div class="t" style="left:333.5px;top:741.24px;font-size:13px;line-height:16px;color:#000;">15</div>
<div class="t" style="left:417px;top:741.24px;font-size:13px;line-height:16px;color:#000;">10</div>
<div class="cb" style="left:510.5px;top:740.94px;width:12.5px;height:12.5px"></div>
<div class="b" style="left:12.5px;top:759.4000000000001px;width:9.899999999999999px;height:20.960000000000036px;border-right:1px solid #d0d0d0;border-bottom:1px solid #b0b0b0;background:#fff"></div>
<div class="b" style="left:22.4px;top:779.3600000000001px;width:517.6px;height:1.0px;background:#efefef"></div>
<div class="b" style="left:67.6px;top:759.4000000000001px;width:1.0px;height:20.960000000000036px;background:#efefef"></div>
<div class="b" style="left:249.4px;top:759.4000000000001px;width:1.0px;height:20.960000000000036px;background:#efefef"></div>
<div class="b" style="left:329px;top:759.4000000000001px;width:1px;height:20.960000000000036px;background:#efefef"></div>
<div class="b" style="left:412px;top:759.4000000000001px;width:1px;height:20.960000000000036px;background:#efefef"></div>
<div class="b" style="left:493px;top:759.4000000000001px;width:1px;height:20.960000000000036px;background:#efefef"></div>
<div class="b" style="left:539px;top:759.4000000000001px;width:1px;height:20.960000000000036px;background:#efefef"></div>
<div class="b" style="left:70px;top:760.4000000000001px;width:180.4px;height:18.960000000000036px;background:#0a78d6;border:2px solid #7a4a1a"></div>
<svg class="b" style="left:14px;top:764.4000000000001px" width="8" height="12" viewBox="0 0 8 12"><path d="M1 1L7 6L1 11z" fill="#0000ff"/></svg>
<div class="t" style="right:1854px;top:762.20px;font-size:13px;line-height:16px;color:#000;text-align:right;">26</div>
<div class="b" style="left:70px;top:759.4000000000001px;width:180px;height:20.96px;overflow:hidden"><div class="t" style="left:2.5px;top:2.87px;font-size:13px;line-height:16px;color:#fff">P6 - Harteloxal</div></div>
<div class="t" style="left:254px;top:762.20px;font-size:13px;line-height:16px;color:#000;">1440</div>
<div class="t" style="left:333.5px;top:762.20px;font-size:13px;line-height:16px;color:#000;">60</div>
<div class="t" style="left:417px;top:762.20px;font-size:13px;line-height:16px;color:#000;">20</div>
<div class="cb" style="left:510.5px;top:761.9000000000001px;width:12.5px;height:12.5px"></div>
<svg class="b" style="left:510.5px;top:761.9000000000001px" width="12.5" height="12.5" viewBox="0 0 13 13"><path d="M2.3 6.3L5 9.3L10.7 3.2" fill="none" stroke="#333" stroke-width="1.05"/></svg>
<div class="b" style="left:12.5px;top:780.36px;width:9.899999999999999px;height:20.960000000000036px;border-right:1px solid #d0d0d0;border-bottom:1px solid #b0b0b0;background:#fff"></div>
<div class="b" style="left:22.4px;top:800.32px;width:517.6px;height:1.0px;background:#efefef"></div>
<div class="b" style="left:67.6px;top:780.36px;width:1.0px;height:20.960000000000036px;background:#efefef"></div>
<div class="b" style="left:249.4px;top:780.36px;width:1.0px;height:20.960000000000036px;background:#efefef"></div>
<div class="b" style="left:329px;top:780.36px;width:1px;height:20.960000000000036px;background:#efefef"></div>
<div class="b" style="left:412px;top:780.36px;width:1px;height:20.960000000000036px;background:#efefef"></div>
<div class="b" style="left:493px;top:780.36px;width:1px;height:20.960000000000036px;background:#efefef"></div>
<div class="b" style="left:539px;top:780.36px;width:1px;height:20.960000000000036px;background:#efefef"></div>
<div class="t" style="right:1854px;top:783.16px;font-size:13px;line-height:16px;color:#000;text-align:right;">29</div>
<div class="b" style="left:70px;top:780.36px;width:180px;height:20.96px;overflow:hidden"><div class="t" style="left:2.5px;top:2.87px;font-size:13px;line-height:16px;color:#000">GSp 6/1 - Gegenstromfließspü</div></div>
<div class="t" style="left:254px;top:783.16px;font-size:13px;line-height:16px;color:#000;">15</div>
<div class="t" style="left:333.5px;top:783.16px;font-size:13px;line-height:16px;color:#000;">15</div>
<div class="t" style="left:417px;top:783.16px;font-size:13px;line-height:16px;color:#000;">15</div>
<div class="cb" style="left:510.5px;top:782.86px;width:12.5px;height:12.5px"></div>
<div class="b" style="left:12.5px;top:801.3199999999999px;width:9.899999999999999px;height:20.960000000000036px;border-right:1px solid #d0d0d0;border-bottom:1px solid #b0b0b0;background:#fff"></div>
<div class="b" style="left:22.4px;top:821.28px;width:517.6px;height:1.0px;background:#efefef"></div>
<div class="b" style="left:67.6px;top:801.3199999999999px;width:1.0px;height:20.960000000000036px;background:#efefef"></div>
<div class="b" style="left:249.4px;top:801.3199999999999px;width:1.0px;height:20.960000000000036px;background:#efefef"></div>
<div class="b" style="left:329px;top:801.3199999999999px;width:1px;height:20.960000000000036px;background:#efefef"></div>
<div class="b" style="left:412px;top:801.3199999999999px;width:1px;height:20.960000000000036px;background:#efefef"></div>
<div class="b" style="left:493px;top:801.3199999999999px;width:1px;height:20.960000000000036px;background:#efefef"></div>
<div class="b" style="left:539px;top:801.3199999999999px;width:1px;height:20.960000000000036px;background:#efefef"></div>
<div class="t" style="right:1854px;top:804.12px;font-size:13px;line-height:16px;color:#000;text-align:right;">30</div>
<div class="b" style="left:70px;top:801.3199999999999px;width:180px;height:20.96px;overflow:hidden"><div class="t" style="left:2.5px;top:2.87px;font-size:13px;line-height:16px;color:#000">GSp 6/2 - Gegenstromfließspü</div></div>
<div class="t" style="left:254px;top:804.12px;font-size:13px;line-height:16px;color:#000;">20</div>
<div class="t" style="left:333.5px;top:804.12px;font-size:13px;line-height:16px;color:#000;">30</div>
<div class="t" style="left:417px;top:804.12px;font-size:13px;line-height:16px;color:#000;">5</div>
<div class="cb" style="left:510.5px;top:803.8199999999999px;width:12.5px;height:12.5px"></div>
<div class="b" style="left:12.5px;top:822.28px;width:9.899999999999999px;height:20.960000000000036px;border-right:1px solid #d0d0d0;border-bottom:1px solid #b0b0b0;background:#fff"></div>
<div class="b" style="left:22.4px;top:842.24px;width:517.6px;height:1.0px;background:#efefef"></div>
<div class="b" style="left:67.6px;top:822.28px;width:1.0px;height:20.960000000000036px;background:#efefef"></div>
<div class="b" style="left:249.4px;top:822.28px;width:1.0px;height:20.960000000000036px;background:#efefef"></div>
<div class="b" style="left:329px;top:822.28px;width:1px;height:20.960000000000036px;background:#efefef"></div>
<div class="b" style="left:412px;top:822.28px;width:1px;height:20.960000000000036px;background:#efefef"></div>
<div class="b" style="left:493px;top:822.28px;width:1px;height:20.960000000000036px;background:#efefef"></div>
<div class="b" style="left:539px;top:822.28px;width:1px;height:20.960000000000036px;background:#efefef"></div>
<div class="t" style="right:1854px;top:825.08px;font-size:13px;line-height:16px;color:#000;text-align:right;">30</div>
<div class="b" style="left:70px;top:822.28px;width:180px;height:20.96px;overflow:hidden"><div class="t" style="left:2.5px;top:2.87px;font-size:13px;line-height:16px;color:#000">GSp 6/2 - Gegenstromfließspü</div></div>
<div class="t" style="left:254px;top:825.08px;font-size:13px;line-height:16px;color:#000;">15</div>
<div class="t" style="left:333.5px;top:825.08px;font-size:13px;line-height:16px;color:#000;">15</div>
<div class="t" style="left:417px;top:825.08px;font-size:13px;line-height:16px;color:#000;">15</div>
<div class="cb" style="left:510.5px;top:824.78px;width:12.5px;height:12.5px"></div>
<div class="b" style="left:12.5px;top:843.24px;width:9.899999999999999px;height:20.960000000000036px;border-right:1px solid #d0d0d0;border-bottom:1px solid #b0b0b0;background:#fff"></div>
<div class="b" style="left:22.4px;top:863.2px;width:517.6px;height:1.0px;background:#efefef"></div>
<div class="b" style="left:67.6px;top:843.24px;width:1.0px;height:20.960000000000036px;background:#efefef"></div>
<div class="b" style="left:249.4px;top:843.24px;width:1.0px;height:20.960000000000036px;background:#efefef"></div>
<div class="b" style="left:329px;top:843.24px;width:1px;height:20.960000000000036px;background:#efefef"></div>
<div class="b" style="left:412px;top:843.24px;width:1px;height:20.960000000000036px;background:#efefef"></div>
<div class="b" style="left:493px;top:843.24px;width:1px;height:20.960000000000036px;background:#efefef"></div>
<div class="b" style="left:539px;top:843.24px;width:1px;height:20.960000000000036px;background:#efefef"></div>
<div class="t" style="right:1854px;top:846.04px;font-size:13px;line-height:16px;color:#000;text-align:right;">31</div>
<div class="b" style="left:70px;top:843.24px;width:180px;height:20.96px;overflow:hidden"><div class="t" style="left:2.5px;top:2.87px;font-size:13px;line-height:16px;color:#000">GSp 6/3 - Gegenstromfließspü</div></div>
<div class="t" style="left:254px;top:846.04px;font-size:13px;line-height:16px;color:#000;">30</div>
<div class="t" style="left:333.5px;top:846.04px;font-size:13px;line-height:16px;color:#000;">30</div>
<div class="t" style="left:417px;top:846.04px;font-size:13px;line-height:16px;color:#000;">5</div>
<div class="cb" style="left:510.5px;top:845.74px;width:12.5px;height:12.5px"></div>
<div class="b" style="left:12.5px;top:864.2px;width:9.899999999999999px;height:20.960000000000036px;border-right:1px solid #d0d0d0;border-bottom:1px solid #b0b0b0;background:#fff"></div>
<div class="b" style="left:22.4px;top:884.1600000000001px;width:517.6px;height:1.0px;background:#efefef"></div>
<div class="b" style="left:67.6px;top:864.2px;width:1.0px;height:20.960000000000036px;background:#efefef"></div>
<div class="b" style="left:249.4px;top:864.2px;width:1.0px;height:20.960000000000036px;background:#efefef"></div>
<div class="b" style="left:329px;top:864.2px;width:1px;height:20.960000000000036px;background:#efefef"></div>
<div class="b" style="left:412px;top:864.2px;width:1px;height:20.960000000000036px;background:#efefef"></div>
<div class="b" style="left:493px;top:864.2px;width:1px;height:20.960000000000036px;background:#efefef"></div>
<div class="b" style="left:539px;top:864.2px;width:1px;height:20.960000000000036px;background:#efefef"></div>
<div class="t" style="right:1854px;top:867.00px;font-size:13px;line-height:16px;color:#000;text-align:right;">31</div>
<div class="b" style="left:70px;top:864.2px;width:180px;height:20.96px;overflow:hidden"><div class="t" style="left:2.5px;top:2.87px;font-size:13px;line-height:16px;color:#000">GSp 6/3 - Gegenstromfließspü</div></div>
<div class="t" style="left:254px;top:867.00px;font-size:13px;line-height:16px;color:#000;">40</div>
<div class="t" style="left:333.5px;top:867.00px;font-size:13px;line-height:16px;color:#000;">60</div>
<div class="t" style="left:417px;top:867.00px;font-size:13px;line-height:16px;color:#000;">15</div>
<div class="cb" style="left:510.5px;top:866.7px;width:12.5px;height:12.5px"></div>
<div class="b" style="left:12.5px;top:885.1600000000001px;width:9.899999999999999px;height:20.960000000000036px;border-right:1px solid #d0d0d0;border-bottom:1px solid #b0b0b0;background:#fff"></div>
<div class="b" style="left:22.4px;top:905.1200000000001px;width:517.6px;height:1.0px;background:#efefef"></div>
<div class="b" style="left:67.6px;top:885.1600000000001px;width:1.0px;height:20.960000000000036px;background:#efefef"></div>
<div class="b" style="left:249.4px;top:885.1600000000001px;width:1.0px;height:20.960000000000036px;background:#efefef"></div>
<div class="b" style="left:329px;top:885.1600000000001px;width:1px;height:20.960000000000036px;background:#efefef"></div>
<div class="b" style="left:412px;top:885.1600000000001px;width:1px;height:20.960000000000036px;background:#efefef"></div>
<div class="b" style="left:493px;top:885.1600000000001px;width:1px;height:20.960000000000036px;background:#efefef"></div>
<div class="b" style="left:539px;top:885.1600000000001px;width:1px;height:20.960000000000036px;background:#efefef"></div>
<div class="t" style="right:1854px;top:887.96px;font-size:13px;line-height:16px;color:#000;text-align:right;">32</div>
<div class="b" style="left:70px;top:885.1600000000001px;width:180px;height:20.96px;overflow:hidden"><div class="t" style="left:2.5px;top:2.87px;font-size:13px;line-height:16px;color:#000">P9 - Färben schwarz</div></div>
<div class="t" style="left:254px;top:887.96px;font-size:13px;line-height:16px;color:#000;">1800</div>
<div class="t" style="left:333.5px;top:887.96px;font-size:13px;line-height:16px;color:#000;">300</div>
<div class="t" style="left:417px;top:887.96px;font-size:13px;line-height:16px;color:#000;">20</div>
<div class="cb" style="left:510.5px;top:887.6600000000001px;width:12.5px;height:12.5px"></div>
<div class="t" style="left:607px;top:429.50px;font-size:13px;line-height:16px;color:#000;">Gleichrichterprogramm</div>
<div class="b" style="left:606px;top:451px;width:441px;height:431px;background:#fff;border-top:1px solid #a0a0a0;border-left:1px solid #a0a0a0;border-right:1px solid #e0e0e0;border-bottom:1px solid #e0e0e0"></div>
<div class="b" style="left:1031px;top:452px;width:15px;height:429px;background:#f0f0f0"></div>
<svg class="b" style="left:1033px;top:460px" width="12" height="8" viewBox="0 0 12 8"><path d="M2 6L6 2L10 6" fill="none" stroke="#606060" stroke-width="1.3"/></svg>
<svg class="b" style="left:1033px;top:866px" width="12" height="8" viewBox="0 0 12 8"><path d="M2 2L6 6L10 2" fill="none" stroke="#606060" stroke-width="1.3"/></svg>
<div class="b" style="left:1032px;top:674px;width:13px;height:18px;background:#c2c2c2"></div>
<div class="b" style="left:607px;top:453px;width:12.5px;height:21px;background:#fff;border-right:2px solid #d8d8d8;border-bottom:2px solid #d8d8d8"></div>
<div class="b" style="left:619.5px;top:453px;width:40.5px;height:21px;background:#fff;border-right:2px solid #d8d8d8;border-bottom:2px solid #d8d8d8"></div>
<div class="b" style="left:660px;top:453px;width:82.39999999999998px;height:21px;background:#fff;border-right:2px solid #d8d8d8;border-bottom:2px solid #d8d8d8"></div>
<div class="b" style="left:742.4px;top:453px;width:56.0px;height:21px;background:#fff;border-right:2px solid #d8d8d8;border-bottom:2px solid #d8d8d8"></div>
<div class="b" style="left:798.4px;top:453px;width:141.0px;height:21px;background:#fff;border-right:2px solid #d8d8d8;border-bottom:2px solid #d8d8d8"></div>
<div class="b" style="left:939.4px;top:453px;width:75.89999999999998px;height:21px;background:#fff;border-right:2px solid #d8d8d8;border-bottom:2px solid #d8d8d8"></div>
<svg class="b" style="left:609.5px;top:459px" width="9" height="10" viewBox="0 0 9 10"><path d="M1 2h7L4.5 8z" fill="#000"/></svg>
<div class="t" style="left:622px;top:455.50px;font-size:13px;line-height:16px;color:#000;">Pos.</div>
<div class="t" style="left:663px;top:455.50px;font-size:13px;line-height:16px;color:#000;">Ansteuerung</div>
<div class="t" style="left:745px;top:455.50px;font-size:13px;line-height:16px;color:#000;">Wert</div>
<div class="t" style="left:801px;top:455.50px;font-size:13px;line-height:16px;color:#000;">Einheit</div>
<div class="t" style="left:942px;top:455.50px;font-size:13px;line-height:16px;color:#000;">Dauer/Prog</div>
<div class="b" style="left:607px;top:474px;width:12.5px;height:21px;border-right:2px solid #d0d0d0;border-bottom:2px solid #b8b8b8;background:#fff"></div>
<div class="b" style="left:619.5px;top:494px;width:395.79999999999995px;height:1px;background:#efefef"></div>
<div class="b" style="left:659px;top:474px;width:1px;height:21px;background:#efefef"></div>
<div class="b" style="left:741.4px;top:474px;width:1.0px;height:21px;background:#efefef"></div>
<div class="b" style="left:797.4px;top:474px;width:1.0px;height:21px;background:#efefef"></div>
<div class="b" style="left:938.4px;top:474px;width:1.0px;height:21px;background:#efefef"></div>
<div class="b" style="left:1014.3px;top:474px;width:1.0px;height:21px;background:#efefef"></div>
<svg class="b" style="left:610.5px;top:478.5px" width="8" height="12" viewBox="0 0 8 12"><path d="M1 1L7 6L1 11z" fill="#0000ff"/></svg>
<div class="t" style="right:1263px;top:477.70px;font-size:13px;line-height:16px;color:#000;text-align:right;">1</div>
<div class="t" style="left:662.5px;top:477.70px;font-size:13px;line-height:16px;color:#000;">Linear</div>
<div class="t" style="right:1124.5px;top:477.70px;font-size:13px;line-height:16px;color:#000;text-align:right;">18</div>
<div class="t" style="left:801.5px;top:477.70px;font-size:13px;line-height:16px;color:#000;">Spannung (V)</div>
<div class="t" style="right:908px;top:477.70px;font-size:13px;line-height:16px;color:#000;text-align:right;">120s</div>
<div class="b" style="left:607px;top:495px;width:12.5px;height:21px;border-right:2px solid #d0d0d0;border-bottom:2px solid #b8b8b8;background:#fff"></div>
<div class="b" style="left:619.5px;top:515px;width:395.79999999999995px;height:1px;background:#efefef"></div>
<div class="b" style="left:659px;top:495px;width:1px;height:21px;background:#efefef"></div>
<div class="b" style="left:741.4px;top:495px;width:1.0px;height:21px;background:#efefef"></div>
<div class="b" style="left:797.4px;top:495px;width:1.0px;height:21px;background:#efefef"></div>
<div class="b" style="left:938.4px;top:495px;width:1.0px;height:21px;background:#efefef"></div>
<div class="b" style="left:1014.3px;top:495px;width:1.0px;height:21px;background:#efefef"></div>
<div class="t" style="right:1263px;top:498.70px;font-size:13px;line-height:16px;color:#000;text-align:right;">2</div>
<div class="t" style="left:662.5px;top:498.70px;font-size:13px;line-height:16px;color:#000;">Linear</div>
<div class="t" style="right:1124.5px;top:498.70px;font-size:13px;line-height:16px;color:#000;text-align:right;">20</div>
<div class="t" style="left:801.5px;top:498.70px;font-size:13px;line-height:16px;color:#000;">Spannung (V)</div>
<div class="t" style="right:908px;top:498.70px;font-size:13px;line-height:16px;color:#000;text-align:right;">120s</div>
<div class="b" style="left:607px;top:516px;width:12.5px;height:21px;border-right:2px solid #d0d0d0;border-bottom:2px solid #b8b8b8;background:#fff"></div>
<div class="b" style="left:619.5px;top:536px;width:395.79999999999995px;height:1px;background:#efefef"></div>
<div class="b" style="left:659px;top:516px;width:1px;height:21px;background:#efefef"></div>
<div class="b" style="left:741.4px;top:516px;width:1.0px;height:21px;background:#efefef"></div>
<div class="b" style="left:797.4px;top:516px;width:1.0px;height:21px;background:#efefef"></div>
<div class="b" style="left:938.4px;top:516px;width:1.0px;height:21px;background:#efefef"></div>
<div class="b" style="left:1014.3px;top:516px;width:1.0px;height:21px;background:#efefef"></div>
<div class="t" style="right:1263px;top:519.70px;font-size:13px;line-height:16px;color:#000;text-align:right;">3</div>
<div class="t" style="left:662.5px;top:519.70px;font-size:13px;line-height:16px;color:#000;">Linear</div>
<div class="t" style="right:1124.5px;top:519.70px;font-size:13px;line-height:16px;color:#000;text-align:right;">22</div>
<div class="t" style="left:801.5px;top:519.70px;font-size:13px;line-height:16px;color:#000;">Spannung (V)</div>
<div class="t" style="right:908px;top:519.70px;font-size:13px;line-height:16px;color:#000;text-align:right;">120s</div>
<div class="b" style="left:607px;top:537px;width:12.5px;height:21px;border-right:2px solid #d0d0d0;border-bottom:2px solid #b8b8b8;background:#fff"></div>
<div class="b" style="left:619.5px;top:557px;width:395.79999999999995px;height:1px;background:#efefef"></div>
<div class="b" style="left:659px;top:537px;width:1px;height:21px;background:#efefef"></div>
<div class="b" style="left:741.4px;top:537px;width:1.0px;height:21px;background:#efefef"></div>
<div class="b" style="left:797.4px;top:537px;width:1.0px;height:21px;background:#efefef"></div>
<div class="b" style="left:938.4px;top:537px;width:1.0px;height:21px;background:#efefef"></div>
<div class="b" style="left:1014.3px;top:537px;width:1.0px;height:21px;background:#efefef"></div>
<div class="t" style="right:1263px;top:540.70px;font-size:13px;line-height:16px;color:#000;text-align:right;">4</div>
<div class="t" style="left:662.5px;top:540.70px;font-size:13px;line-height:16px;color:#000;">Linear</div>
<div class="t" style="right:1124.5px;top:540.70px;font-size:13px;line-height:16px;color:#000;text-align:right;">24</div>
<div class="t" style="left:801.5px;top:540.70px;font-size:13px;line-height:16px;color:#000;">Spannung (V)</div>
<div class="t" style="right:908px;top:540.70px;font-size:13px;line-height:16px;color:#000;text-align:right;">120s</div>
<div class="b" style="left:607px;top:558px;width:12.5px;height:21px;border-right:2px solid #d0d0d0;border-bottom:2px solid #b8b8b8;background:#fff"></div>
<div class="b" style="left:619.5px;top:578px;width:395.79999999999995px;height:1px;background:#efefef"></div>
<div class="b" style="left:659px;top:558px;width:1px;height:21px;background:#efefef"></div>
<div class="b" style="left:741.4px;top:558px;width:1.0px;height:21px;background:#efefef"></div>
<div class="b" style="left:797.4px;top:558px;width:1.0px;height:21px;background:#efefef"></div>
<div class="b" style="left:938.4px;top:558px;width:1.0px;height:21px;background:#efefef"></div>
<div class="b" style="left:1014.3px;top:558px;width:1.0px;height:21px;background:#efefef"></div>
<div class="t" style="right:1263px;top:561.70px;font-size:13px;line-height:16px;color:#000;text-align:right;">5</div>
<div class="t" style="left:662.5px;top:561.70px;font-size:13px;line-height:16px;color:#000;">Linear</div>
<div class="t" style="right:1124.5px;top:561.70px;font-size:13px;line-height:16px;color:#000;text-align:right;">26</div>
<div class="t" style="left:801.5px;top:561.70px;font-size:13px;line-height:16px;color:#000;">Spannung (V)</div>
<div class="t" style="right:908px;top:561.70px;font-size:13px;line-height:16px;color:#000;text-align:right;">180s</div>
<div class="b" style="left:607px;top:579px;width:12.5px;height:21px;border-right:2px solid #d0d0d0;border-bottom:2px solid #b8b8b8;background:#fff"></div>
<div class="b" style="left:619.5px;top:599px;width:395.79999999999995px;height:1px;background:#efefef"></div>
<div class="b" style="left:659px;top:579px;width:1px;height:21px;background:#efefef"></div>
<div class="b" style="left:741.4px;top:579px;width:1.0px;height:21px;background:#efefef"></div>
<div class="b" style="left:797.4px;top:579px;width:1.0px;height:21px;background:#efefef"></div>
<div class="b" style="left:938.4px;top:579px;width:1.0px;height:21px;background:#efefef"></div>
<div class="b" style="left:1014.3px;top:579px;width:1.0px;height:21px;background:#efefef"></div>
<div class="t" style="right:1263px;top:582.70px;font-size:13px;line-height:16px;color:#000;text-align:right;">6</div>
<div class="t" style="left:662.5px;top:582.70px;font-size:13px;line-height:16px;color:#000;">Linear</div>
<div class="t" style="right:1124.5px;top:582.70px;font-size:13px;line-height:16px;color:#000;text-align:right;">28</div>
<div class="t" style="left:801.5px;top:582.70px;font-size:13px;line-height:16px;color:#000;">Spannung (V)</div>
<div class="t" style="right:908px;top:582.70px;font-size:13px;line-height:16px;color:#000;text-align:right;">180s</div>
<div class="b" style="left:607px;top:600px;width:12.5px;height:21px;border-right:2px solid #d0d0d0;border-bottom:2px solid #b8b8b8;background:#fff"></div>
<div class="b" style="left:619.5px;top:620px;width:395.79999999999995px;height:1px;background:#efefef"></div>
<div class="b" style="left:659px;top:600px;width:1px;height:21px;background:#efefef"></div>
<div class="b" style="left:741.4px;top:600px;width:1.0px;height:21px;background:#efefef"></div>
<div class="b" style="left:797.4px;top:600px;width:1.0px;height:21px;background:#efefef"></div>
<div class="b" style="left:938.4px;top:600px;width:1.0px;height:21px;background:#efefef"></div>
<div class="b" style="left:1014.3px;top:600px;width:1.0px;height:21px;background:#efefef"></div>
<div class="t" style="right:1263px;top:603.70px;font-size:13px;line-height:16px;color:#000;text-align:right;">7</div>
<div class="t" style="left:662.5px;top:603.70px;font-size:13px;line-height:16px;color:#000;">Linear</div>
<div class="t" style="right:1124.5px;top:603.70px;font-size:13px;line-height:16px;color:#000;text-align:right;">30</div>
<div class="t" style="left:801.5px;top:603.70px;font-size:13px;line-height:16px;color:#000;">Spannung (V)</div>
<div class="t" style="right:908px;top:603.70px;font-size:13px;line-height:16px;color:#000;text-align:right;">180s</div>
<div class="b" style="left:607px;top:621px;width:12.5px;height:21px;border-right:2px solid #d0d0d0;border-bottom:2px solid #b8b8b8;background:#fff"></div>
<div class="b" style="left:619.5px;top:641px;width:395.79999999999995px;height:1px;background:#efefef"></div>
<div class="b" style="left:659px;top:621px;width:1px;height:21px;background:#efefef"></div>
<div class="b" style="left:741.4px;top:621px;width:1.0px;height:21px;background:#efefef"></div>
<div class="b" style="left:797.4px;top:621px;width:1.0px;height:21px;background:#efefef"></div>
<div class="b" style="left:938.4px;top:621px;width:1.0px;height:21px;background:#efefef"></div>
<div class="b" style="left:1014.3px;top:621px;width:1.0px;height:21px;background:#efefef"></div>
<div class="t" style="right:1263px;top:624.70px;font-size:13px;line-height:16px;color:#000;text-align:right;">8</div>
<div class="t" style="left:662.5px;top:624.70px;font-size:13px;line-height:16px;color:#000;">Linear</div>
<div class="t" style="right:1124.5px;top:624.70px;font-size:13px;line-height:16px;color:#000;text-align:right;">32</div>
<div class="t" style="left:801.5px;top:624.70px;font-size:13px;line-height:16px;color:#000;">Spannung (V)</div>
<div class="t" style="right:908px;top:624.70px;font-size:13px;line-height:16px;color:#000;text-align:right;">180s</div>
<div class="b" style="left:607px;top:642px;width:12.5px;height:21px;border-right:2px solid #d0d0d0;border-bottom:2px solid #b8b8b8;background:#fff"></div>
<div class="b" style="left:619.5px;top:662px;width:395.79999999999995px;height:1px;background:#efefef"></div>
<div class="b" style="left:659px;top:642px;width:1px;height:21px;background:#efefef"></div>
<div class="b" style="left:741.4px;top:642px;width:1.0px;height:21px;background:#efefef"></div>
<div class="b" style="left:797.4px;top:642px;width:1.0px;height:21px;background:#efefef"></div>
<div class="b" style="left:938.4px;top:642px;width:1.0px;height:21px;background:#efefef"></div>
<div class="b" style="left:1014.3px;top:642px;width:1.0px;height:21px;background:#efefef"></div>
<div class="t" style="right:1263px;top:645.70px;font-size:13px;line-height:16px;color:#000;text-align:right;">9</div>
<div class="t" style="left:662.5px;top:645.70px;font-size:13px;line-height:16px;color:#000;">Linear</div>
<div class="t" style="right:1124.5px;top:645.70px;font-size:13px;line-height:16px;color:#000;text-align:right;">34</div>
<div class="t" style="left:801.5px;top:645.70px;font-size:13px;line-height:16px;color:#000;">Spannung (V)</div>
<div class="t" style="right:908px;top:645.70px;font-size:13px;line-height:16px;color:#000;text-align:right;">180s</div>
<div class="b" style="left:607px;top:663px;width:12.5px;height:21px;border-right:2px solid #d0d0d0;border-bottom:2px solid #b8b8b8;background:#fff"></div>
<div class="b" style="left:619.5px;top:683px;width:395.79999999999995px;height:1px;background:#efefef"></div>
<div class="b" style="left:659px;top:663px;width:1px;height:21px;background:#efefef"></div>
<div class="b" style="left:741.4px;top:663px;width:1.0px;height:21px;background:#efefef"></div>
<div class="b" style="left:797.4px;top:663px;width:1.0px;height:21px;background:#efefef"></div>
<div class="b" style="left:938.4px;top:663px;width:1.0px;height:21px;background:#efefef"></div>
<div class="b" style="left:1014.3px;top:663px;width:1.0px;height:21px;background:#efefef"></div>
<div class="t" style="right:1263px;top:666.70px;font-size:13px;line-height:16px;color:#000;text-align:right;">10</div>
<div class="t" style="left:662.5px;top:666.70px;font-size:13px;line-height:16px;color:#000;">Linear</div>
<div class="t" style="right:1124.5px;top:666.70px;font-size:13px;line-height:16px;color:#000;text-align:right;">16</div>
<div class="t" style="left:801.5px;top:666.70px;font-size:13px;line-height:16px;color:#000;">Spannung (V)</div>
<div class="t" style="right:908px;top:666.70px;font-size:13px;line-height:16px;color:#000;text-align:right;">60s</div>
<div class="b" style="left:607px;top:684px;width:12.5px;height:21px;border-right:2px solid #d0d0d0;border-bottom:2px solid #b8b8b8;background:#fff"></div>
<div class="b" style="left:619.5px;top:704px;width:395.79999999999995px;height:1px;background:#efefef"></div>
<div class="b" style="left:659px;top:684px;width:1px;height:21px;background:#efefef"></div>
<div class="b" style="left:741.4px;top:684px;width:1.0px;height:21px;background:#efefef"></div>
<div class="b" style="left:797.4px;top:684px;width:1.0px;height:21px;background:#efefef"></div>
<div class="b" style="left:938.4px;top:684px;width:1.0px;height:21px;background:#efefef"></div>
<div class="b" style="left:1014.3px;top:684px;width:1.0px;height:21px;background:#efefef"></div>
<div class="t" style="right:1263px;top:687.70px;font-size:13px;line-height:16px;color:#000;text-align:right;">11</div>
<div class="t" style="left:662.5px;top:687.70px;font-size:13px;line-height:16px;color:#000;">Linear</div>
<div class="t" style="right:1124.5px;top:687.70px;font-size:13px;line-height:16px;color:#000;text-align:right;">16</div>
<div class="t" style="left:801.5px;top:687.70px;font-size:13px;line-height:16px;color:#000;">Spannung (V)</div>
<div class="t" style="right:908px;top:687.70px;font-size:13px;line-height:16px;color:#000;text-align:right;">600s</div>
<div class="b" style="left:607px;top:856px;width:408.29999999999995px;height:26px;background:#f0f0f0;border-top:2px solid #404040"></div>
<div class="b" style="left:660px;top:858.5px;width:80px;height:21.5px;background:#f0f0f0;border-left:1px solid #d8d8d8;border-right:1px solid #fff"></div>
<div class="t" style="left:662px;top:861.50px;font-size:13px;line-height:16px;color:#000;">gesamt</div>
<div class="b" style="left:938px;top:858.5px;width:77px;height:21.5px;background:#f0f0f0;border-left:1px solid #d8d8d8"></div>
<div class="t" style="right:909px;top:861.50px;font-size:13px;line-height:16px;color:#000;text-align:right;">0</div>
<div class="b" style="left:608px;top:890.5px;width:40px;height:21.5px;background:#e1e1e1;border:1px solid #adadad"></div>
<svg class="b" style="left:621.2px;top:894.2px" width="13.6" height="13.6" viewBox="0 0 16 16"><path d="M3.5 4.3v7.4" stroke="#000" stroke-width="1.8"/><path d="M11.5 4.3v7.4L5 8z" fill="#000"/></svg>
<div class="b" style="left:651px;top:890.5px;width:40px;height:21.5px;background:#e1e1e1;border:1px solid #adadad"></div>
<svg class="b" style="left:664.2px;top:894.2px" width="13.6" height="13.6" viewBox="0 0 16 16"><path d="M12 4.2v7.6L4.6 8z" fill="#000"/></svg>
<div class="b" style="left:694px;top:890.5px;width:40px;height:21.5px;background:#e1e1e1;border:1px solid #adadad"></div>
<svg class="b" style="left:707.2px;top:894.2px" width="13.6" height="13.6" viewBox="0 0 16 16"><path d="M4.2 4.25L11.7 8L4.2 11.75z" fill="#000"/></svg>
<div class="b" style="left:737px;top:890.5px;width:40px;height:21.5px;background:#e1e1e1;border:1px solid #adadad"></div>
<svg class="b" style="left:750.2px;top:894.2px" width="13.6" height="13.6" viewBox="0 0 16 16"><path d="M3 4.3L10.5 8L3 11.7z" fill="#000"/><path d="M11.9 4.3v7.4" stroke="#000" stroke-width="2.6"/></svg>
<div class="b" style="left:780px;top:890.5px;width:40px;height:21.5px;background:#e1e1e1;border:1px solid #adadad"></div>
<svg class="b" style="left:793.2px;top:894.2px" width="13.6" height="13.6" viewBox="0 0 16 16"><path d="M8 3.3v9.4M3.3 8h9.4" stroke="#000" stroke-width="2.8"/></svg>
<div class="b" style="left:823px;top:890.5px;width:40px;height:21.5px;background:#e1e1e1;border:1px solid #adadad"></div>
<svg class="b" style="left:836.2px;top:894.2px" width="13.6" height="13.6" viewBox="0 0 16 16"><path d="M2.7 8h10.6" stroke="#000" stroke-width="3"/></svg>
<div class="b" style="left:866px;top:890.5px;width:40px;height:21.5px;background:#cccccc;border:1px solid #c0c0c0"></div>
<svg class="b" style="left:879.2px;top:894.2px" width="13.6" height="13.6" viewBox="0 0 16 16"><path d="M1.5 8.5L5 12L14 3.5" fill="none" stroke="#9a9a9a" stroke-width="3.2"/><path d="M1.5 8.5L5 12L14 3.5" fill="none" stroke="#f4f4f4" stroke-width="1.6"/></svg>
<div class="b" style="left:916px;top:889.5px;width:60.5px;height:24.0px;background:#EEE7BE;border-top:1px solid #fff;border-left:1px solid #fff;border-bottom:2px solid #6a6a6a;border-right:2px solid #6a6a6a"></div>
<div class="t" style="left:920px;top:894.00px;font-size:13px;line-height:16px;color:#000;">Kopieren</div>
<div class="b" style="left:987.5px;top:889.5px;width:59.0px;height:24.0px;background:#EEE7BE;border-top:1px solid #fff;border-left:1px solid #fff;border-bottom:2px solid #6a6a6a;border-right:2px solid #6a6a6a"></div>
<div class="t" style="left:990.5px;top:894.00px;font-size:13px;line-height:16px;color:#a8a8a8;">Einfügen</div>
<svg class="b" style="left:0;top:0" width="1920" height="1040" viewBox="0 0 1920 1040" font-family="Liberation Sans"><line x1="1128.6" y1="460.7" x2="1128.6" y2="862.6" stroke="#c9c9c0" stroke-width="1.4"/><line x1="1166.9" y1="460.7" x2="1166.9" y2="862.6" stroke="#c9c9c0" stroke-width="1.4"/><line x1="1205.2" y1="460.7" x2="1205.2" y2="862.6" stroke="#c9c9c0" stroke-width="1.4"/><line x1="1243.4" y1="460.7" x2="1243.4" y2="862.6" stroke="#c9c9c0" stroke-width="1.4"/><line x1="1281.7" y1="460.7" x2="1281.7" y2="862.6" stroke="#c9c9c0" stroke-width="1.4"/><line x1="1320.0" y1="460.7" x2="1320.0" y2="862.6" stroke="#c9c9c0" stroke-width="1.4"/><line x1="1358.3" y1="460.7" x2="1358.3" y2="862.6" stroke="#c9c9c0" stroke-width="1.4"/><line x1="1396.6" y1="460.7" x2="1396.6" y2="862.6" stroke="#c9c9c0" stroke-width="1.4"/><line x1="1434.8" y1="460.7" x2="1434.8" y2="862.6" stroke="#c9c9c0" stroke-width="1.4"/><line x1="1473.1" y1="460.7" x2="1473.1" y2="862.6" stroke="#c9c9c0" stroke-width="1.4"/><line x1="1511.4" y1="460.7" x2="1511.4" y2="862.6" stroke="#c9c9c0" stroke-width="1.4"/><line x1="1122.9" y1="860.0" x2="1521.9" y2="860.0" stroke="#c9c9c0" stroke-width="1.4"/><line x1="1122.9" y1="836.8" x2="1521.9" y2="836.8" stroke="#c9c9c0" stroke-width="1.4"/><line x1="1122.9" y1="813.6" x2="1521.9" y2="813.6" stroke="#c9c9c0" stroke-width="1.4"/><line x1="1122.9" y1="790.4" x2="1521.9" y2="790.4" stroke="#c9c9c0" stroke-width="1.4"/><line x1="1122.9" y1="767.2" x2="1521.9" y2="767.2" stroke="#c9c9c0" stroke-width="1.4"/><line x1="1122.9" y1="743.9" x2="1521.9" y2="743.9" stroke="#c9c9c0" stroke-width="1.4"/><line x1="1122.9" y1="720.7" x2="1521.9" y2="720.7" stroke="#c9c9c0" stroke-width="1.4"/><line x1="1122.9" y1="697.5" x2="1521.9" y2="697.5" stroke="#c9c9c0" stroke-width="1.4"/><line x1="1122.9" y1="674.3" x2="1521.9" y2="674.3" stroke="#c9c9c0" stroke-width="1.4"/><line x1="1122.9" y1="651.1" x2="1521.9" y2="651.1" stroke="#c9c9c0" stroke-width="1.4"/><line x1="1122.9" y1="627.9" x2="1521.9" y2="627.9" stroke="#c9c9c0" stroke-width="1.4"/><line x1="1122.9" y1="604.7" x2="1521.9" y2="604.7" stroke="#c9c9c0" stroke-width="1.4"/><line x1="1122.9" y1="581.5" x2="1521.9" y2="581.5" stroke="#c9c9c0" stroke-width="1.4"/><line x1="1122.9" y1="558.2" x2="1521.9" y2="558.2" stroke="#c9c9c0" stroke-width="1.4"/><line x1="1122.9" y1="535.0" x2="1521.9" y2="535.0" stroke="#c9c9c0" stroke-width="1.4"/><line x1="1122.9" y1="511.8" x2="1521.9" y2="511.8" stroke="#c9c9c0" stroke-width="1.4"/><line x1="1122.9" y1="488.6" x2="1521.9" y2="488.6" stroke="#c9c9c0" stroke-width="1.4"/><line x1="1122.9" y1="465.4" x2="1521.9" y2="465.4" stroke="#c9c9c0" stroke-width="1.4"/><line x1="1122.9" y1="460.7" x2="1122.9" y2="863.6" stroke="#000" stroke-width="3"/><line x1="1121.9" y1="862.6" x2="1521.9" y2="862.6" stroke="#000" stroke-width="3"/><line x1="1118.9" y1="860.0" x2="1122.9" y2="860.0" stroke="#000" stroke-width="1"/><line x1="1118.9" y1="848.4" x2="1122.9" y2="848.4" stroke="#000" stroke-width="1"/><line x1="1118.9" y1="836.8" x2="1122.9" y2="836.8" stroke="#000" stroke-width="1"/><line x1="1118.9" y1="825.2" x2="1122.9" y2="825.2" stroke="#000" stroke-width="1"/><line x1="1118.9" y1="813.6" x2="1122.9" y2="813.6" stroke="#000" stroke-width="1"/><line x1="1118.9" y1="802.0" x2="1122.9" y2="802.0" stroke="#000" stroke-width="1"/><line x1="1118.9" y1="790.4" x2="1122.9" y2="790.4" stroke="#000" stroke-width="1"/><line x1="1118.9" y1="778.8" x2="1122.9" y2="778.8" stroke="#000" stroke-width="1"/><line x1="1118.9" y1="767.2" x2="1122.9" y2="767.2" stroke="#000" stroke-width="1"/><line x1="1118.9" y1="755.5" x2="1122.9" y2="755.5" stroke="#000" stroke-width="1"/><line x1="1118.9" y1="743.9" x2="1122.9" y2="743.9" stroke="#000" stroke-width="1"/><line x1="1118.9" y1="732.3" x2="1122.9" y2="732.3" stroke="#000" stroke-width="1"/><line x1="1118.9" y1="720.7" x2="1122.9" y2="720.7" stroke="#000" stroke-width="1"/><line x1="1118.9" y1="709.1" x2="1122.9" y2="709.1" stroke="#000" stroke-width="1"/><line x1="1118.9" y1="697.5" x2="1122.9" y2="697.5" stroke="#000" stroke-width="1"/><line x1="1118.9" y1="685.9" x2="1122.9" y2="685.9" stroke="#000" stroke-width="1"/><line x1="1118.9" y1="674.3" x2="1122.9" y2="674.3" stroke="#000" stroke-width="1"/><line x1="1118.9" y1="662.7" x2="1122.9" y2="662.7" stroke="#000" stroke-width="1"/><line x1="1118.9" y1="651.1" x2="1122.9" y2="651.1" stroke="#000" stroke-width="1"/><line x1="1118.9" y1="639.5" x2="1122.9" y2="639.5" stroke="#000" stroke-width="1"/><line x1="1118.9" y1="627.9" x2="1122.9" y2="627.9" stroke="#000" stroke-width="1"/><line x1="1118.9" y1="616.3" x2="1122.9" y2="616.3" stroke="#000" stroke-width="1"/><line x1="1118.9" y1="604.7" x2="1122.9" y2="604.7" stroke="#000" stroke-width="1"/><line x1="1118.9" y1="593.1" x2="1122.9" y2="593.1" stroke="#000" stroke-width="1"/><line x1="1118.9" y1="581.5" x2="1122.9" y2="581.5" stroke="#000" stroke-width="1"/><line x1="1118.9" y1="569.9" x2="1122.9" y2="569.9" stroke="#000" stroke-width="1"/><line x1="1118.9" y1="558.2" x2="1122.9" y2="558.2" stroke="#000" stroke-width="1"/><line x1="1118.9" y1="546.6" x2="1122.9" y2="546.6" stroke="#000" stroke-width="1"/><line x1="1118.9" y1="535.0" x2="1122.9" y2="535.0" stroke="#000" stroke-width="1"/><line x1="1118.9" y1="523.4" x2="1122.9" y2="523.4" stroke="#000" stroke-width="1"/><line x1="1118.9" y1="511.8" x2="1122.9" y2="511.8" stroke="#000" stroke-width="1"/><line x1="1118.9" y1="500.2" x2="1122.9" y2="500.2" stroke="#000" stroke-width="1"/><line x1="1118.9" y1="488.6" x2="1122.9" y2="488.6" stroke="#000" stroke-width="1"/><line x1="1118.9" y1="477.0" x2="1122.9" y2="477.0" stroke="#000" stroke-width="1"/><line x1="1118.9" y1="465.4" x2="1122.9" y2="465.4" stroke="#000" stroke-width="1"/><line x1="1128.6" y1="862.6" x2="1128.6" y2="868.6" stroke="#777" stroke-width="1.2"/><line x1="1138.2" y1="862.6" x2="1138.2" y2="865.6" stroke="#aaa" stroke-width="1.2"/><line x1="1147.7" y1="862.6" x2="1147.7" y2="865.6" stroke="#aaa" stroke-width="1.2"/><line x1="1157.3" y1="862.6" x2="1157.3" y2="865.6" stroke="#aaa" stroke-width="1.2"/><line x1="1166.9" y1="862.6" x2="1166.9" y2="868.6" stroke="#777" stroke-width="1.2"/><line x1="1176.4" y1="862.6" x2="1176.4" y2="865.6" stroke="#aaa" stroke-width="1.2"/><line x1="1186.0" y1="862.6" x2="1186.0" y2="865.6" stroke="#aaa" stroke-width="1.2"/><line x1="1195.6" y1="862.6" x2="1195.6" y2="865.6" stroke="#aaa" stroke-width="1.2"/><line x1="1205.2" y1="862.6" x2="1205.2" y2="868.6" stroke="#777" stroke-width="1.2"/><line x1="1214.7" y1="862.6" x2="1214.7" y2="865.6" stroke="#aaa" stroke-width="1.2"/><line x1="1224.3" y1="862.6" x2="1224.3" y2="865.6" stroke="#aaa" stroke-width="1.2"/><line x1="1233.9" y1="862.6" x2="1233.9" y2="865.6" stroke="#aaa" stroke-width="1.2"/><line x1="1243.4" y1="862.6" x2="1243.4" y2="868.6" stroke="#777" stroke-width="1.2"/><line x1="1253.0" y1="862.6" x2="1253.0" y2="865.6" stroke="#aaa" stroke-width="1.2"/><line x1="1262.6" y1="862.6" x2="1262.6" y2="865.6" stroke="#aaa" stroke-width="1.2"/><line x1="1272.1" y1="862.6" x2="1272.1" y2="865.6" stroke="#aaa" stroke-width="1.2"/><line x1="1281.7" y1="862.6" x2="1281.7" y2="868.6" stroke="#777" stroke-width="1.2"/><line x1="1291.3" y1="862.6" x2="1291.3" y2="865.6" stroke="#aaa" stroke-width="1.2"/><line x1="1300.9" y1="862.6" x2="1300.9" y2="865.6" stroke="#aaa" stroke-width="1.2"/><line x1="1310.4" y1="862.6" x2="1310.4" y2="865.6" stroke="#aaa" stroke-width="1.2"/><line x1="1320.0" y1="862.6" x2="1320.0" y2="868.6" stroke="#777" stroke-width="1.2"/><line x1="1329.6" y1="862.6" x2="1329.6" y2="865.6" stroke="#aaa" stroke-width="1.2"/><line x1="1339.1" y1="862.6" x2="1339.1" y2="865.6" stroke="#aaa" stroke-width="1.2"/><line x1="1348.7" y1="862.6" x2="1348.7" y2="865.6" stroke="#aaa" stroke-width="1.2"/><line x1="1358.3" y1="862.6" x2="1358.3" y2="868.6" stroke="#777" stroke-width="1.2"/><line x1="1367.8" y1="862.6" x2="1367.8" y2="865.6" stroke="#aaa" stroke-width="1.2"/><line x1="1377.4" y1="862.6" x2="1377.4" y2="865.6" stroke="#aaa" stroke-width="1.2"/><line x1="1387.0" y1="862.6" x2="1387.0" y2="865.6" stroke="#aaa" stroke-width="1.2"/><line x1="1396.6" y1="862.6" x2="1396.6" y2="868.6" stroke="#777" stroke-width="1.2"/><line x1="1406.1" y1="862.6" x2="1406.1" y2="865.6" stroke="#aaa" stroke-width="1.2"/><line x1="1415.7" y1="862.6" x2="1415.7" y2="865.6" stroke="#aaa" stroke-width="1.2"/><line x1="1425.3" y1="862.6" x2="1425.3" y2="865.6" stroke="#aaa" stroke-width="1.2"/><line x1="1434.8" y1="862.6" x2="1434.8" y2="868.6" stroke="#777" stroke-width="1.2"/><line x1="1444.4" y1="862.6" x2="1444.4" y2="865.6" stroke="#aaa" stroke-width="1.2"/><line x1="1454.0" y1="862.6" x2="1454.0" y2="865.6" stroke="#aaa" stroke-width="1.2"/><line x1="1463.5" y1="862.6" x2="1463.5" y2="865.6" stroke="#aaa" stroke-width="1.2"/><line x1="1473.1" y1="862.6" x2="1473.1" y2="868.6" stroke="#777" stroke-width="1.2"/><line x1="1482.7" y1="862.6" x2="1482.7" y2="865.6" stroke="#aaa" stroke-width="1.2"/><line x1="1492.3" y1="862.6" x2="1492.3" y2="865.6" stroke="#aaa" stroke-width="1.2"/><line x1="1501.8" y1="862.6" x2="1501.8" y2="865.6" stroke="#aaa" stroke-width="1.2"/><line x1="1511.4" y1="862.6" x2="1511.4" y2="868.6" stroke="#777" stroke-width="1.2"/><text x="1114.9" y="864.0" text-anchor="end" font-size="12" fill="#222">0</text><text x="1114.9" y="840.8" text-anchor="end" font-size="12" fill="#222">2</text><text x="1114.9" y="817.6" text-anchor="end" font-size="12" fill="#222">4</text><text x="1114.9" y="794.4" text-anchor="end" font-size="12" fill="#222">6</text><text x="1114.9" y="771.2" text-anchor="end" font-size="12" fill="#222">8</text><text x="1114.9" y="747.9" text-anchor="end" font-size="12" fill="#222">10</text><text x="1114.9" y="724.7" text-anchor="end" font-size="12" fill="#222">12</text><text x="1114.9" y="701.5" text-anchor="end" font-size="12" fill="#222">14</text><text x="1114.9" y="678.3" text-anchor="end" font-size="12" fill="#222">16</text><text x="1114.9" y="655.1" text-anchor="end" font-size="12" fill="#222">18</text><text x="1114.9" y="631.9" text-anchor="end" font-size="12" fill="#222">20</text><text x="1114.9" y="608.7" text-anchor="end" font-size="12" fill="#222">22</text><text x="1114.9" y="585.5" text-anchor="end" font-size="12" fill="#222">24</text><text x="1114.9" y="562.2" text-anchor="end" font-size="12" fill="#222">26</text><text x="1114.9" y="539.0" text-anchor="end" font-size="12" fill="#222">28</text><text x="1114.9" y="515.8" text-anchor="end" font-size="12" fill="#222">30</text><text x="1114.9" y="492.6" text-anchor="end" font-size="12" fill="#222">32</text><text x="1114.9" y="469.4" text-anchor="end" font-size="12" fill="#222">34</text><text x="1128.6" y="881.2" text-anchor="middle" font-size="12" fill="#222">0</text><text x="1166.9" y="881.2" text-anchor="middle" font-size="12" fill="#222">200</text><text x="1205.2" y="881.2" text-anchor="middle" font-size="12" fill="#222">400</text><text x="1243.4" y="881.2" text-anchor="middle" font-size="12" fill="#222">600</text><text x="1281.7" y="881.2" text-anchor="middle" font-size="12" fill="#222">800</text><text x="1320.0" y="881.2" text-anchor="middle" font-size="12" fill="#222">1.000</text><text x="1358.3" y="881.2" text-anchor="middle" font-size="12" fill="#222">1.200</text><text x="1396.6" y="881.2" text-anchor="middle" font-size="12" fill="#222">1.400</text><text x="1434.8" y="881.2" text-anchor="middle" font-size="12" fill="#222">1.600</text><text x="1473.1" y="881.2" text-anchor="middle" font-size="12" fill="#222">1.800</text><text x="1511.4" y="881.2" text-anchor="middle" font-size="12" fill="#222">2.000</text><polyline points="1128.6,860.0 1151.6,651.1 1174.5,627.9 1197.5,604.7 1220.5,581.5 1254.9,558.2 1289.4,535.0 1323.8,511.8 1358.3,488.6 1392.7,465.4 1404.2,674.3 1519.1,674.3" fill="none" stroke="#3d9ddc" stroke-width="2"/><circle cx="1128.6" cy="860.0" r="3.3" fill="#1a7fd8" stroke="#0a2a55" stroke-width="1.5"/><circle cx="1151.6" cy="651.1" r="3.3" fill="#1a7fd8" stroke="#0a2a55" stroke-width="1.5"/><circle cx="1174.5" cy="627.9" r="3.3" fill="#1a7fd8" stroke="#0a2a55" stroke-width="1.5"/><circle cx="1197.5" cy="604.7" r="3.3" fill="#1a7fd8" stroke="#0a2a55" stroke-width="1.5"/><circle cx="1220.5" cy="581.5" r="3.3" fill="#1a7fd8" stroke="#0a2a55" stroke-width="1.5"/><circle cx="1254.9" cy="558.2" r="3.3" fill="#1a7fd8" stroke="#0a2a55" stroke-width="1.5"/><circle cx="1289.4" cy="535.0" r="3.3" fill="#1a7fd8" stroke="#0a2a55" stroke-width="1.5"/><circle cx="1323.8" cy="511.8" r="3.3" fill="#1a7fd8" stroke="#0a2a55" stroke-width="1.5"/><circle cx="1358.3" cy="488.6" r="3.3" fill="#1a7fd8" stroke="#0a2a55" stroke-width="1.5"/><circle cx="1392.7" cy="465.4" r="3.3" fill="#1a7fd8" stroke="#0a2a55" stroke-width="1.5"/><circle cx="1404.2" cy="674.3" r="3.3" fill="#1a7fd8" stroke="#0a2a55" stroke-width="1.5"/><circle cx="1519.1" cy="674.3" r="3.3" fill="#1a7fd8" stroke="#0a2a55" stroke-width="1.5"/></svg>
<div class="b" style="left:14.7px;top:936px;width:231.0px;height:22.700000000000045px;background:#e1e1e1;border:1px solid #adadad;overflow:hidden">
<div style="position:absolute;left:0;right:0;top:3.52px;height:16px;display:flex;justify-content:center;align-items:center;gap:2px;font-size:12.8px;line-height:16px;color:#000;white-space:pre">
<svg style="position:relative;top:-1.17px;flex:none" width="16.0" height="16.0" viewBox="0 0 16 16"><path d="M3.5 4.3v7.4" stroke="#000" stroke-width="1.8"/><path d="M11.5 4.3v7.4L5 8z" fill="#000"/></svg>
<span>Erste</span></div></div>
<div class="b" style="left:247.23999999999998px;top:936px;width:231.00000000000003px;height:22.700000000000045px;background:#e1e1e1;border:1px solid #adadad;overflow:hidden">
<div style="position:absolute;left:0;right:0;top:3.52px;height:16px;display:flex;justify-content:center;align-items:center;gap:2px;font-size:12.8px;line-height:16px;color:#000;white-space:pre">
<svg style="position:relative;top:-1.17px;flex:none" width="16.0" height="16.0" viewBox="0 0 16 16"><path d="M12 4.2v7.6L4.6 8z" fill="#000"/></svg>
<span>Vorherige</span></div></div>
<div class="b" style="left:479.78px;top:936px;width:231.0px;height:22.700000000000045px;background:#e1e1e1;border:1px solid #adadad;overflow:hidden">
<div style="position:absolute;left:0;right:0;top:3.52px;height:16px;display:flex;justify-content:center;align-items:center;gap:2px;font-size:12.8px;line-height:16px;color:#000;white-space:pre">
<svg style="position:relative;top:-1.17px;flex:none" width="16.0" height="16.0" viewBox="0 0 16 16"><path d="M4.2 4.25L11.7 8L4.2 11.75z" fill="#000"/></svg>
<span>Nächste</span></div></div>
<div class="b" style="left:712.32px;top:936px;width:231.0px;height:22.700000000000045px;background:#e1e1e1;border:1px solid #adadad;overflow:hidden">
<div style="position:absolute;left:0;right:0;top:3.52px;height:16px;display:flex;justify-content:center;align-items:center;gap:2px;font-size:12.8px;line-height:16px;color:#000;white-space:pre">
<svg style="position:relative;top:-1.17px;flex:none" width="16.0" height="16.0" viewBox="0 0 16 16"><path d="M3 4.3L10.5 8L3 11.7z" fill="#000"/><path d="M11.9 4.3v7.4" stroke="#000" stroke-width="2.6"/></svg>
<span>Letzte</span></div></div>
<div class="b" style="left:944.86px;top:936px;width:231.0000000000001px;height:22.700000000000045px;background:#cfcfcf;border:1px solid #c4c4c4;overflow:hidden">
<div style="position:absolute;left:0;right:0;top:3.52px;height:16px;display:flex;justify-content:center;align-items:center;gap:2px;font-size:12.8px;line-height:16px;color:#9d9d9d;white-space:pre">
<svg style="position:relative;top:-1.17px;flex:none" width="16.0" height="16.0" viewBox="0 0 16 16"><path d="M1.5 8.5L5 12L14 3.5" fill="none" stroke="#9a9a9a" stroke-width="3.2"/><path d="M1.5 8.5L5 12L14 3.5" fill="none" stroke="#f4f4f4" stroke-width="1.6"/></svg>
<span>Speichern</span></div></div>
<div class="b" style="left:1177.4px;top:936px;width:231.0px;height:22.700000000000045px;background:#cfcfcf;border:1px solid #c4c4c4;overflow:hidden">
<div style="position:absolute;left:0;right:0;top:3.52px;height:16px;display:flex;justify-content:center;align-items:center;gap:2px;font-size:12.8px;line-height:16px;color:#9d9d9d;white-space:pre">
<svg style="position:relative;top:-1.17px;flex:none" width="16.0" height="16.0" viewBox="0 0 16 16"><path d="M2.6 2.6L13.4 13.4M13.4 2.6L2.6 13.4" stroke="#9a9a9a" stroke-width="3.4"/><path d="M2.6 2.6L13.4 13.4M13.4 2.6L2.6 13.4" stroke="#f4f4f4" stroke-width="1.8"/></svg>
<span>Abbrechen</span></div></div>
<div class="b" style="left:201.0px;top:978.6px;width:214.0px;height:22.5px;background:#e1e1e1;border:1px solid #adadad;overflow:hidden">
<div style="position:absolute;left:0;right:0;top:3.42px;height:16px;display:flex;justify-content:center;align-items:center;gap:2px;font-size:12.8px;line-height:16px;color:#000;white-space:pre">
<svg style="position:relative;top:-1.17px;flex:none" width="16.0" height="16.0" viewBox="0 0 16 16"><path d="M3.5 4.3v7.4" stroke="#000" stroke-width="1.8"/><path d="M11.5 4.3v7.4L5 8z" fill="#000"/></svg>
<span>Erste</span></div></div>
<div class="b" style="left:418.3px;top:978.6px;width:213.99999999999994px;height:22.5px;background:#e1e1e1;border:1px solid #adadad;overflow:hidden">
<div style="position:absolute;left:0;right:0;top:3.42px;height:16px;display:flex;justify-content:center;align-items:center;gap:2px;font-size:12.8px;line-height:16px;color:#000;white-space:pre">
<svg style="position:relative;top:-1.17px;flex:none" width="16.0" height="16.0" viewBox="0 0 16 16"><path d="M12 4.2v7.6L4.6 8z" fill="#000"/></svg>
<span>Vorherige</span></div></div>
<div class="b" style="left:635.6px;top:978.6px;width:214.0px;height:22.5px;background:#e1e1e1;border:1px solid #adadad;overflow:hidden">
<div style="position:absolute;left:0;right:0;top:3.42px;height:16px;display:flex;justify-content:center;align-items:center;gap:2px;font-size:12.8px;line-height:16px;color:#000;white-space:pre">
<svg style="position:relative;top:-1.17px;flex:none" width="16.0" height="16.0" viewBox="0 0 16 16"><path d="M4.2 4.25L11.7 8L4.2 11.75z" fill="#000"/></svg>
<span>Nächste</span></div></div>
<div class="b" style="left:852.9000000000001px;top:978.6px;width:214.0px;height:22.5px;background:#e1e1e1;border:1px solid #adadad;overflow:hidden">
<div style="position:absolute;left:0;right:0;top:3.42px;height:16px;display:flex;justify-content:center;align-items:center;gap:2px;font-size:12.8px;line-height:16px;color:#000;white-space:pre">
<svg style="position:relative;top:-1.17px;flex:none" width="16.0" height="16.0" viewBox="0 0 16 16"><path d="M3 4.3L10.5 8L3 11.7z" fill="#000"/><path d="M11.9 4.3v7.4" stroke="#000" stroke-width="2.6"/></svg>
<span>Letzte</span></div></div>
<div class="b" style="left:1070.2px;top:978.6px;width:214.0px;height:22.5px;background:#cfcfcf;border:1px solid #c4c4c4;overflow:hidden">
<div style="position:absolute;left:0;right:0;top:3.42px;height:16px;display:flex;justify-content:center;align-items:center;gap:2px;font-size:12.8px;line-height:16px;color:#9d9d9d;white-space:pre">
<svg style="position:relative;top:-1.17px;flex:none" width="16.0" height="16.0" viewBox="0 0 16 16"><path d="M1.5 8.5L5 12L14 3.5" fill="none" stroke="#9a9a9a" stroke-width="3.2"/><path d="M1.5 8.5L5 12L14 3.5" fill="none" stroke="#f4f4f4" stroke-width="1.6"/></svg>
<span>Speichern</span></div></div>
<div class="b" style="left:1287.5px;top:978.6px;width:214.0px;height:22.5px;background:#cfcfcf;border:1px solid #c4c4c4;overflow:hidden">
<div style="position:absolute;left:0;right:0;top:3.42px;height:16px;display:flex;justify-content:center;align-items:center;gap:2px;font-size:12.8px;line-height:16px;color:#9d9d9d;white-space:pre">
<svg style="position:relative;top:-1.17px;flex:none" width="16.0" height="16.0" viewBox="0 0 16 16"><path d="M2.6 2.6L13.4 13.4M13.4 2.6L2.6 13.4" stroke="#9a9a9a" stroke-width="3.4"/><path d="M2.6 2.6L13.4 13.4M13.4 2.6L2.6 13.4" stroke="#f4f4f4" stroke-width="1.8"/></svg>
<span>Abbrechen</span></div></div>
<div class="b" style="left:1504.8000000000002px;top:978.6px;width:214.0px;height:22.5px;background:#e1e1e1;border:1px solid #adadad;overflow:hidden">
<div style="position:absolute;left:0;right:0;top:3.42px;height:16px;display:flex;justify-content:center;align-items:center;gap:2px;font-size:12.8px;line-height:16px;color:#000;white-space:pre">
<svg style="position:relative;top:-1.17px;flex:none" width="16.0" height="16.0" viewBox="0 0 16 16"><path d="M11.6 6.8A4.2 4.2 0 1 0 8.2 12.6" fill="none" stroke="#000" stroke-width="2.2"/><path d="M8.6 4.2h5.2v5z" fill="#000"/></svg>
<span>Aktualisieren</span></div></div>
</div></div>
</body></html>
